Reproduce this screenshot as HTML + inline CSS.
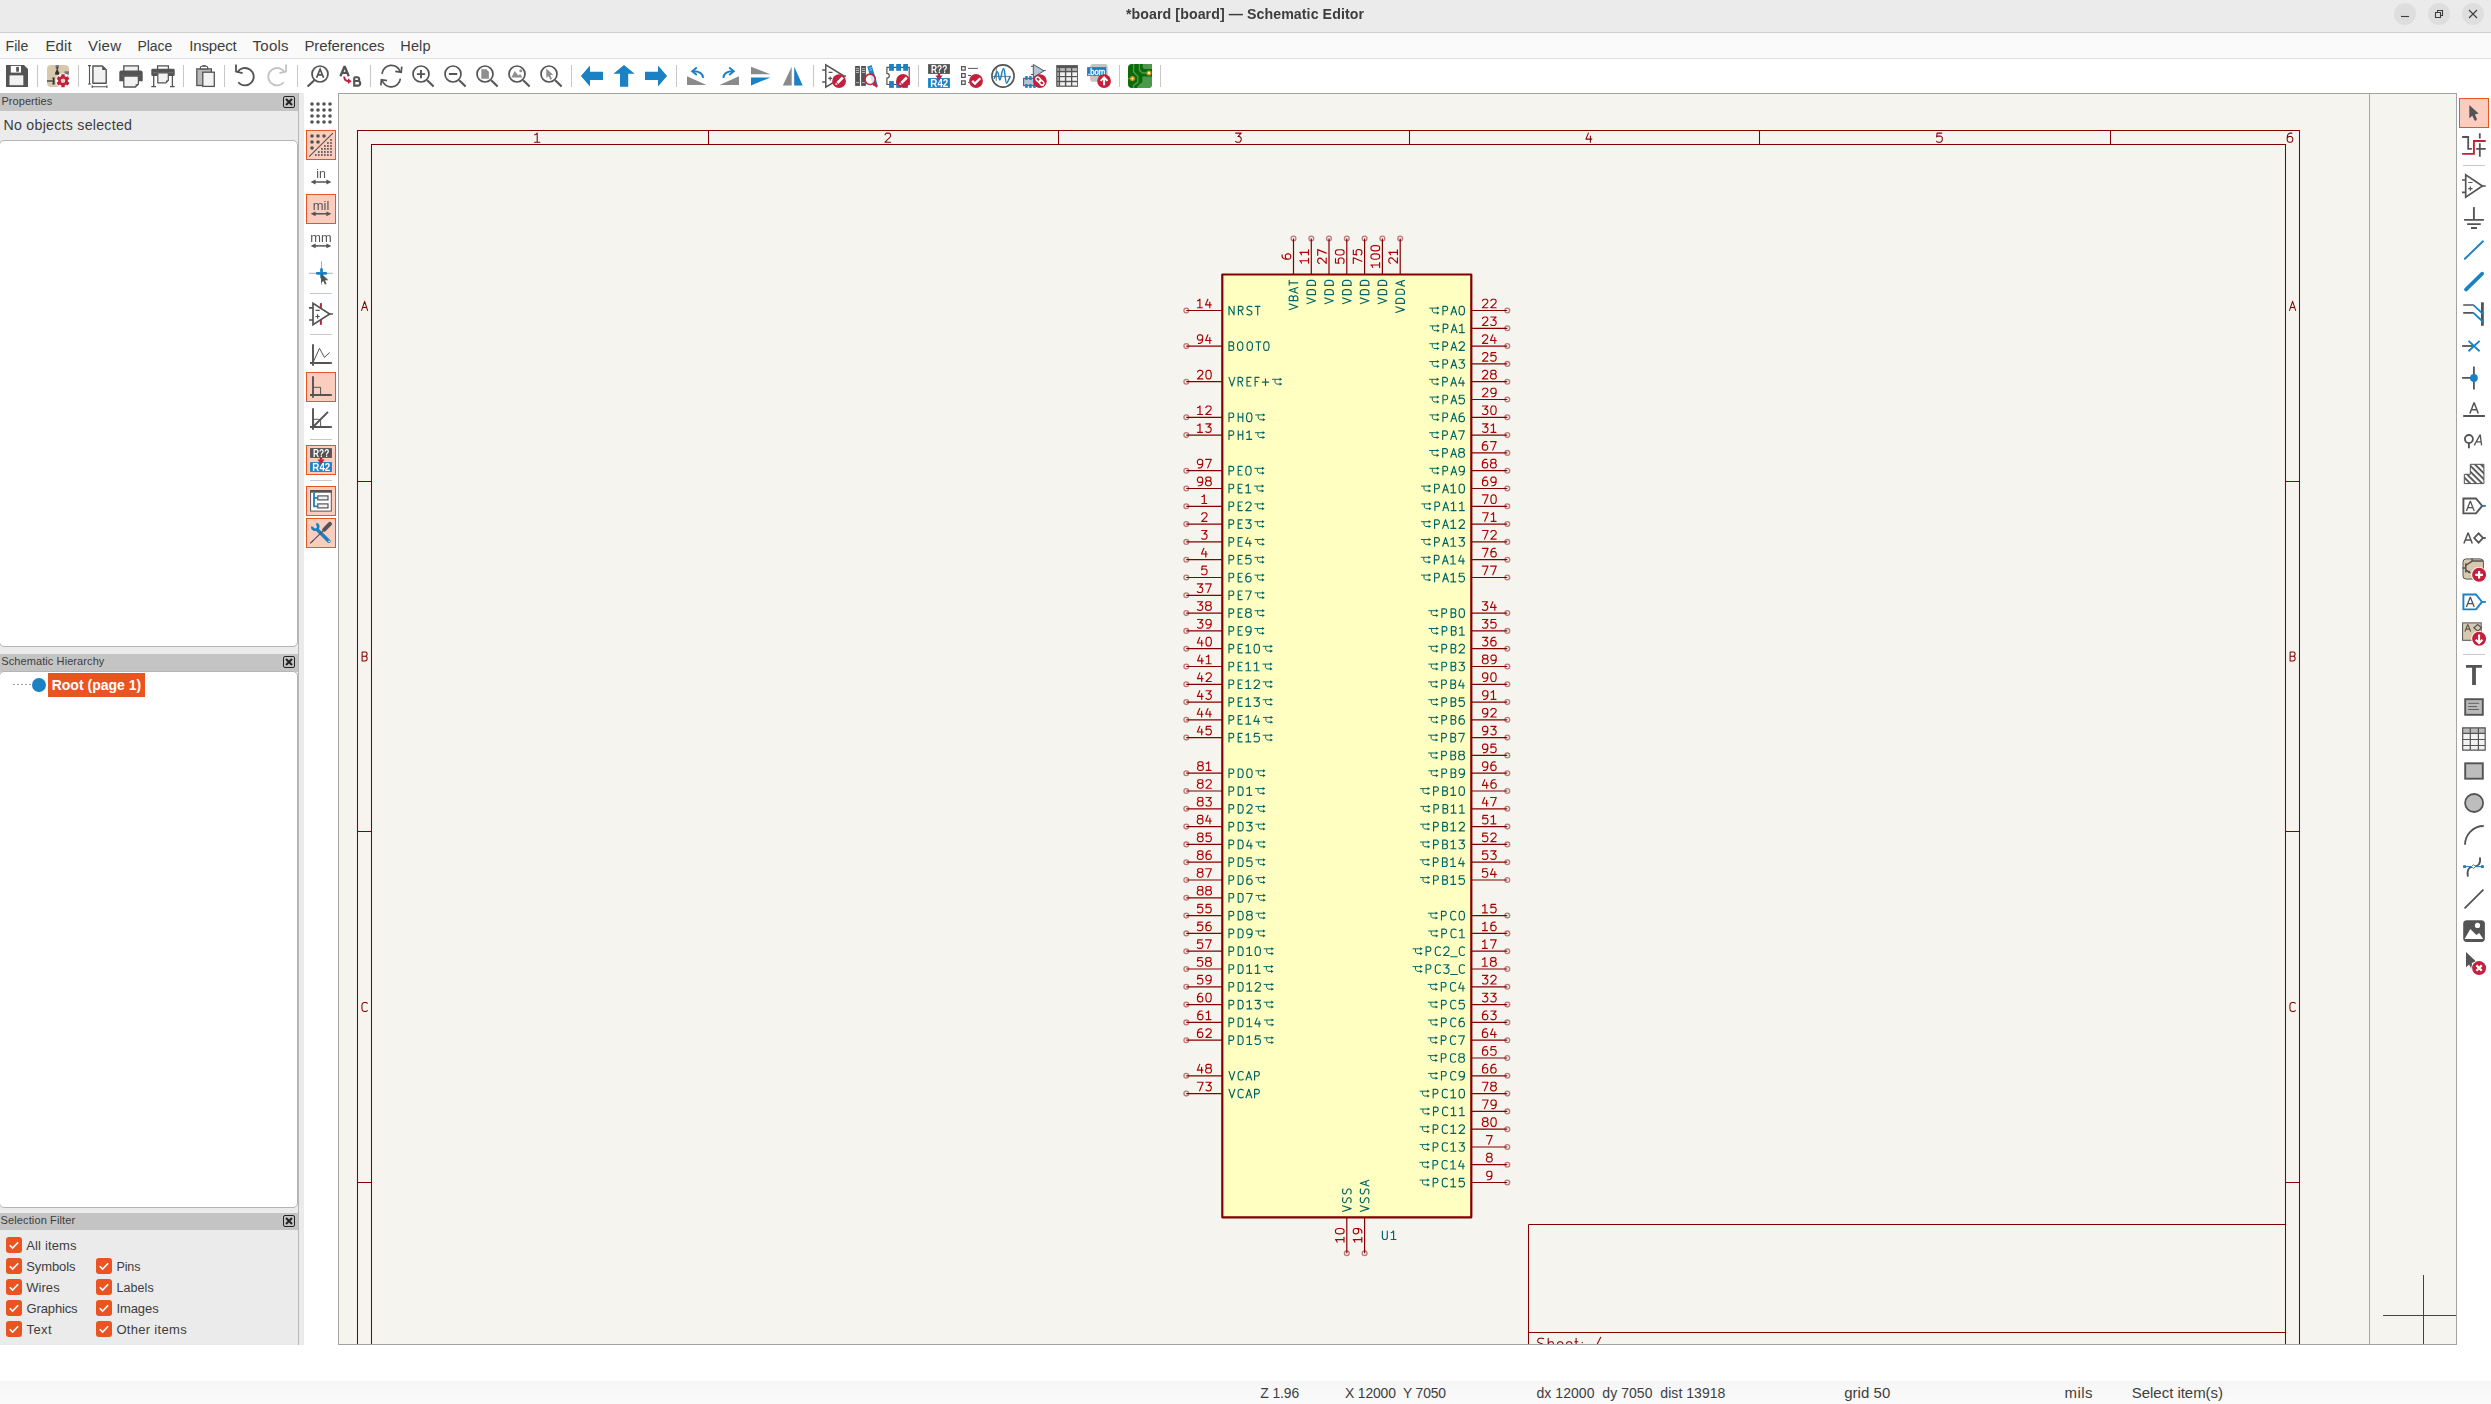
<!DOCTYPE html>
<html><head><meta charset="utf-8"><title>board - Schematic Editor</title>
<style>
html,body{margin:0;padding:0}
body{width:2491px;height:1404px;position:relative;overflow:hidden;background:#fff;font-family:"Liberation Sans", sans-serif;color:#3d3d3d;font-size:15px}
div,span,svg{position:absolute;box-sizing:border-box}
.t{white-space:pre;line-height:1}
.ic{overflow:visible}.wc{will-change:transform}
.sv{width:1px;background:#c8c8c8}
.sh{height:1px;background:#c8c8c8}
.hl{width:30px;height:30px;background:#fbcdbf;border:1.2px solid #e8561f}
.hdr{left:0;width:298px;height:18px;background:#c4c4c4}
.hdr .t{left:1px;top:3px;font-size:12.5px;color:#3d3d3d}
.wb{left:-1px;width:299px;background:#fff;border:1px solid #b4b4b4;border-radius:5px}
.cb{width:16px;height:16px;border-radius:3px;background:#e95420}
.cl{font-size:13.5px}
</style></head><body>

<div style="left:0;top:0;width:2491px;height:33px;background:#ebebeb;border-bottom:1px solid #cfcfcf"></div>
<div class="t" style="left:1125.50px;top:7px;font-size:14.2px;letter-spacing:0.070px;font-weight:bold;will-change:transform;">*board [board] — Schematic Editor</div>
<div style="left:2394px;top:3px;width:22px;height:22px;border-radius:11px;background:#dedede"></div>
<div style="left:2428px;top:3px;width:22px;height:22px;border-radius:11px;background:#dedede"></div>
<div style="left:2462px;top:3px;width:22px;height:22px;border-radius:11px;background:#dedede"></div>
<svg style="left:2394px;top:3px" width="90" height="22" viewBox="0 0 90 22" fill="none" stroke="#3d3d3d" stroke-width="1.1"><path d="M7,13.5h8"/><path d="M41.5,9.5h5v5h-5z M43.5,9.5v-2h5v5h-2"/><path d="M75,7l8,8M83,7l-8,8"/></svg>
<div style="left:0;top:33px;width:2491px;height:26px;background:#fafafa;border-bottom:1px solid #dcdcdc"></div>
<div class="t" style="left:5.60px;top:39px;font-size:14.2px;letter-spacing:-0.025px;">File</div>
<div class="t" style="left:45.50px;top:38px;font-size:15px;letter-spacing:0.075px;">Edit</div>
<div class="t" style="left:87.90px;top:38px;font-size:15px;letter-spacing:0.283px;">View</div>
<div class="t" style="left:137.40px;top:39px;font-size:14px;letter-spacing:-0.025px;">Place</div>
<div class="t" style="left:189.20px;top:38px;font-size:15px;letter-spacing:-0.129px;">Inspect</div>
<div class="t" style="left:252.60px;top:38px;font-size:15px;letter-spacing:0.225px;">Tools</div>
<div class="t" style="left:304.40px;top:38px;font-size:15px;letter-spacing:-0.087px;">Preferences</div>
<div class="t" style="left:400.30px;top:39px;font-size:14.5px;letter-spacing:0.142px;">Help</div>
<div style="left:0;top:59px;width:2491px;height:34px;background:#fff"></div>
<svg class="ic" style="left:5.0px;top:64.0px" width="24" height="24" viewBox="0 0 24 24"><path d="M1,1H19L23,5V23H1Z" fill="#545454"/><rect x="5.8" y="1.9" width="10.2" height="6.7" fill="#fff"/><rect x="11.2" y="2.9" width="2.7" height="4.8" fill="#545454"/><rect x="4.9" y="11.8" width="13.1" height="9.1" fill="#f2f2f2" stroke="#fff" stroke-width="0.6"/></svg>
<svg class="ic" style="left:46.0px;top:64.0px" width="24" height="24" viewBox="0 0 24 24"><rect x="1" y="1" width="22" height="22" rx="4" fill="#d8c9ae"/><rect x="9.6" y="1" width="3.2" height="3.5" fill="#777"/><path d="M11.2,3V9" stroke="#333" stroke-width="1.2"/><path d="M11.2,5.2L13.2,8.4V10.8H9.2V8.4Z" fill="#333"/><rect x="18.5" y="7.3" width="4.5" height="3" fill="#777"/><path d="M1,17H8" stroke="#333" stroke-width="1.3"/><path d="M6.2,13.6H8.6V20.4H6.2L7.2,17Z" fill="#333"/><g transform="translate(17,16.8)"><circle r="7.5" fill="#fff" fill-opacity="0.85"/><circle r="2.4" fill="#e6d9c3"/><g fill="#c4203c"><rect x="-1.7" y="-6.5" width="3.4" height="4" rx="0.4" transform="rotate(0)"/><rect x="-1.7" y="-6.5" width="3.4" height="4" rx="0.4" transform="rotate(60)"/><rect x="-1.7" y="-6.5" width="3.4" height="4" rx="0.4" transform="rotate(120)"/><rect x="-1.7" y="-6.5" width="3.4" height="4" rx="0.4" transform="rotate(180)"/><rect x="-1.7" y="-6.5" width="3.4" height="4" rx="0.4" transform="rotate(240)"/><rect x="-1.7" y="-6.5" width="3.4" height="4" rx="0.4" transform="rotate(300)"/></g><circle r="3.6" fill="none" stroke="#c4203c" stroke-width="2.6"/></g></svg>
<svg class="ic" style="left:87.0px;top:64.0px" width="24" height="24" viewBox="0 0 24 24"><path d="M2.5,1.6V20M1,1.6H4M1,20H4M5.2,22.7H19.9M5.2,21.3V24M19.9,21.3V24" stroke="#545454" stroke-width="1.1" fill="none"/><path d="M5.9,2H15.4L19.2,5.8V19.2H5.9Z" fill="#f2f2f2" stroke="#545454" stroke-width="1.4" stroke-linejoin="round"/><path d="M15.2,2.2V6H19Z" fill="#545454"/></svg>
<svg class="ic" style="left:119.0px;top:64.0px" width="24" height="24" viewBox="0 0 24 24"><rect x="4.8" y="1.9" width="14.6" height="6" fill="#f2f2f2" stroke="#545454" stroke-width="1.3"/><path d="M2.3,6.5H21.7A2,2 0 0 1 23.7,8.5V17.3H0.3V8.5A2,2 0 0 1 2.3,6.5Z" fill="#545454"/><path d="M3,11.7H21" stroke="#8a8a8a" stroke-width="0.6"/><path d="M4.8,12H19.4V20L16.4,23H4.8Z" fill="#f2f2f2" stroke="#545454" stroke-width="1.3" stroke-linejoin="round"/><path d="M16.6,22.8V20.2H19.2Z" fill="#545454"/></svg>
<svg class="ic" style="left:151.0px;top:64.0px" width="24" height="24" viewBox="0 0 24 24"><rect x="6.6" y="1.9" width="10.8" height="4" fill="#fff" stroke="#545454" stroke-width="1.3"/><rect x="0.3" y="4.7" width="23.4" height="7.4" rx="1.3" fill="#545454"/><path d="M2,8.7H22" stroke="#8a8a8a" stroke-width="0.6"/><path d="M2.7,12V22.7M21.4,12V22.7M0.3,22.6H5M19,22.6H23.7" stroke="#545454" stroke-width="1.3" fill="none"/><path d="M6.8,9H17.3V16.4L14.8,18.9H6.8Z" fill="#f2f2f2" stroke="#545454" stroke-width="1.2" stroke-linejoin="round"/><path d="M15,18.7V16.6H17.1Z" fill="#545454"/></svg>
<svg class="ic" style="left:192.0px;top:64.0px" width="24" height="24" viewBox="0 0 24 24"><rect x="4.8" y="4.9" width="14.6" height="16.6" fill="#b9b9b9" stroke="#545454" stroke-width="1.3"/><path d="M8.4,4.9V3.6A1.3,1.3 0 0 1 9.7,2.3H14.4A1.3,1.3 0 0 1 15.7,3.6V4.9Z" fill="#fff" stroke="#545454" stroke-width="1.1"/><path d="M10.4,1.7H13.8" stroke="#545454" stroke-width="1.2"/><rect x="10.8" y="8.2" width="11.5" height="14.2" fill="#f2f2f2" stroke="#545454" stroke-width="1.3"/></svg>
<svg class="ic" style="left:233.0px;top:64.0px" width="24" height="24" viewBox="0 0 24 24"><path d="M4.4,8.6A8.7,8.7 0 1 1 5.3,18.2" fill="none" stroke="#545454" stroke-width="1.8"/><path d="M3,0.5V7.6L9.6,9.2" fill="none" stroke="#545454" stroke-width="1.8"/></svg>
<svg class="ic" style="left:265.0px;top:64.0px" width="24" height="24" viewBox="0 0 24 24"><path d="M19.6,8.6A8.7,8.7 0 1 0 18.7,18.2" fill="none" stroke="#c3c3c3" stroke-width="1.8"/><path d="M21,0.5V7.6L14.4,9.2" fill="none" stroke="#c3c3c3" stroke-width="1.8"/></svg>
<svg class="ic" style="left:306.0px;top:64.0px" width="24" height="24" viewBox="0 0 24 24"><circle cx="14" cy="10" r="8" fill="none" stroke="#545454" stroke-width="1.7"/><path d="M8.4,16.3L1.6,22.5" stroke="#545454" stroke-width="2.1" fill="none"/><path d="M10.6,13.8L14.1,5.2L17.6,13.8M11.9,10.9H16.3" fill="none" stroke="#545454" stroke-width="1.7"/></svg>
<svg class="ic" style="left:338.0px;top:64.0px" width="24" height="24" viewBox="0 0 24 24"><path d="M2.4,12.3L6.6,2.2L10.8,12.3M3.9,8.9H9.3" fill="none" stroke="#545454" stroke-width="2.3" stroke-linejoin="bevel"/><path d="M16.2,13.2V21.6H19.9A2.3,2.3 0 0 0 19.9,17H16.2M19.3,17A1.9,1.9 0 0 0 19.3,13.2H16.2" fill="none" stroke="#545454" stroke-width="2.1"/><path d="M6.2,12.6C6.2,16 7.8,17.2 11,17.2" fill="none" stroke="#c4203c" stroke-width="1.9"/><path d="M13.6,17.2L10,14.3V20.1Z" fill="#c4203c"/></svg>
<svg class="ic" style="left:379.0px;top:64.0px" width="24" height="24" viewBox="0 0 24 24"><path d="M3,9.8A9.4,9.4 0 0 1 21.3,7.8" fill="none" stroke="#545454" stroke-width="1.7"/><path d="M22.8,2.7L22.2,8.2L16.3,7.3" fill="none" stroke="#545454" stroke-width="1.7"/><path d="M21.4,14.6A9.4,9.4 0 0 1 3,15.9" fill="none" stroke="#545454" stroke-width="1.7"/><path d="M1.8,21.4L2.4,15.7L8,16.6" fill="none" stroke="#545454" stroke-width="1.7"/></svg>
<svg class="ic" style="left:411.0px;top:64.0px" width="24" height="24" viewBox="0 0 24 24"><circle cx="10" cy="10" r="8" fill="none" stroke="#545454" stroke-width="1.7"/><path d="M16.2,16.3L22.6,22.5" stroke="#545454" stroke-width="2.1" fill="none"/><path d="M5.9,10.1H14.1M10,6V14.2" stroke="#545454" stroke-width="1.9" fill="none"/></svg>
<svg class="ic" style="left:443.0px;top:64.0px" width="24" height="24" viewBox="0 0 24 24"><circle cx="10" cy="10" r="8" fill="none" stroke="#545454" stroke-width="1.7"/><path d="M16.2,16.3L22.6,22.5" stroke="#545454" stroke-width="2.1" fill="none"/><path d="M5.9,10H14.2" stroke="#545454" stroke-width="2" fill="none"/></svg>
<svg class="ic" style="left:475.0px;top:64.0px" width="24" height="24" viewBox="0 0 24 24"><circle cx="10" cy="10" r="8" fill="none" stroke="#545454" stroke-width="1.7"/><path d="M16.2,16.3L22.6,22.5" stroke="#545454" stroke-width="2.1" fill="none"/><path d="M6.3,5.2H11.4L13.9,7.7V14.8H6.3Z" fill="#8f8f8f"/></svg>
<svg class="ic" style="left:507.0px;top:64.0px" width="24" height="24" viewBox="0 0 24 24"><circle cx="10" cy="10" r="8" fill="none" stroke="#545454" stroke-width="1.7"/><path d="M16.2,16.3L22.6,22.5" stroke="#545454" stroke-width="2.1" fill="none"/><path d="M4.4,13.6L7.7,7.1L11.3,11.4L13.2,10L15.3,13.6Z" fill="#8f8f8f"/><circle cx="13.8" cy="6.8" r="1.5" fill="#8f8f8f"/></svg>
<svg class="ic" style="left:539.0px;top:64.0px" width="24" height="24" viewBox="0 0 24 24"><circle cx="10" cy="10" r="8" fill="none" stroke="#545454" stroke-width="1.7"/><path d="M16.2,16.3L22.6,22.5" stroke="#545454" stroke-width="2.1" fill="none"/><path d="M7.3,4.4L14.3,10.9L11.3,11.1L13,14.9L11.3,15.7L9.5,12L7.3,13.9Z" fill="#8f8f8f"/></svg>
<svg class="ic" style="left:580.0px;top:64.0px" width="24" height="24" viewBox="0 0 24 24"><path d="M0.9,12L10,1.6V7.8H23V16H10V22.4Z" fill="#1a81c4"/></svg>
<svg class="ic" style="left:612.0px;top:64.0px" width="24" height="24" viewBox="0 0 24 24"><path d="M12,1L22.7,9.8H16.2V22.8H8V9.8H1.4Z" fill="#1a81c4"/></svg>
<svg class="ic" style="left:644.0px;top:64.0px" width="24" height="24" viewBox="0 0 24 24"><path d="M23.1,12L14,1.6V7.8H1V16H14V22.4Z" fill="#1a81c4"/></svg>
<svg class="ic" style="left:685.0px;top:64.0px" width="24" height="24" viewBox="0 0 24 24"><path d="M2,12.2V21H21.5Z" fill="#8a8a8a"/><path d="M18,14C18,9.5 15,7.2 8,7.2" fill="none" stroke="#1a81c4" stroke-width="1.9"/><path d="M11.8,3.4L7.2,7.2L11.8,11" fill="none" stroke="#1a81c4" stroke-width="1.9"/></svg>
<svg class="ic" style="left:717.0px;top:64.0px" width="24" height="24" viewBox="0 0 24 24"><path d="M22,12.2V21H2.5Z" fill="#8a8a8a"/><path d="M6.5,14C6.5,9.5 9.5,7.2 16,7.2" fill="none" stroke="#1a81c4" stroke-width="1.9"/><path d="M12.2,3.4L16.8,7.2L12.2,11" fill="none" stroke="#1a81c4" stroke-width="1.9"/></svg>
<svg class="ic" style="left:749.0px;top:64.0px" width="24" height="24" viewBox="0 0 24 24"><path d="M2,2.8L21.5,10.3H2Z" fill="#8a8a8a"/><path d="M2,13.4H21.5L2,21.5Z" fill="#1a81c4"/></svg>
<svg class="ic" style="left:781.0px;top:64.0px" width="24" height="24" viewBox="0 0 24 24"><path d="M1.8,21.5H10.7V2.8Z" fill="#8a8a8a"/><path d="M13.2,2.8V21.5H21.7Z" fill="#1a81c4"/></svg>
<svg class="ic" style="left:822.0px;top:64.0px" width="24" height="24" viewBox="0 0 24 24"><path d="M3.8,0.9V23.1L22,12Z M0.2,5.9H3.8M0.2,18H3.8M21,12H24" fill="none" stroke="#545454" stroke-width="1.5"/><path d="M6.6,8.3H10.5M6.2,14.4H10.2M8.2,12.4V16.4" stroke="#545454" stroke-width="1.2" fill="none"/><circle cx="17.1" cy="17.1" r="6.9" fill="#c4203c"/><path d="M15.3,19 L20.8,13.5" stroke="#fff" stroke-width="2.5" fill="none"/><path d="M13.3,21 L13.9,18.7 L15.6,20.4 Z" fill="#fff"/></svg>
<svg class="ic" style="left:854.0px;top:64.0px" width="24" height="24" viewBox="0 0 24 24"><rect x="1.1" y="2" width="4.8" height="19.9" fill="#545454"/><rect x="7.1" y="2" width="4.8" height="19.9" fill="#545454"/><path d="M2,4.6H5M2,6.5H5M2,8.5H5M2,18.6H5M8,4.6H11M8,6.5H11M8,8.5H11M8,18.6H11" stroke="#cfcfcf" stroke-width="0.8"/><path d="M13.3,2.7L17.6,1.1L23.7,21.2L19.2,22Z" fill="#1a81c4"/><path d="M15.2,4.3L17.6,3.5M15.8,6.3L18.2,5.5" stroke="#cfe0ee" stroke-width="0.8"/><circle cx="16.1" cy="15.3" r="5.2" fill="#fff" fill-opacity="0.8" stroke="#c4203c" stroke-width="1.7"/><path d="M20,19.6L23.2,22.9" stroke="#c4203c" stroke-width="2.3"/></svg>
<svg class="ic" style="left:886.0px;top:64.0px" width="24" height="24" viewBox="0 0 24 24"><path d="M0.9,3.4H23.2V20.5H0.9V14.2A2.4,2.4 0 0 0 0.9,9.4Z" fill="#fff" stroke="#545454" stroke-width="1.2"/><rect x="3.1" y="0" width="4.8" height="6.8" fill="#1a81c4"/><rect x="10.2" y="0" width="4.8" height="6.8" fill="#1a81c4"/><rect x="17.2" y="0" width="4.8" height="6.8" fill="#1a81c4"/><rect x="3.1" y="17.1" width="4.8" height="6.8" fill="#1a81c4"/><rect x="10.2" y="17.1" width="4.8" height="6.8" fill="#1a81c4"/><rect x="17.2" y="17.1" width="4.8" height="6.8" fill="#1a81c4"/><circle cx="17" cy="16.9" r="6.9" fill="#c4203c"/><path d="M15.3,19 L20.8,13.5" stroke="#fff" stroke-width="2.5" fill="none"/><path d="M13.3,21 L13.9,18.7 L15.6,20.4 Z" fill="#fff"/></svg>
<svg class="ic wc" style="left:927.0px;top:64.0px" width="24" height="24" viewBox="0 0 24 24"><rect x="1.1" y="0.1" width="21.8" height="9.8" fill="#545454"/><rect x="1.1" y="14.1" width="21.8" height="9.8" fill="#1a81c4"/><path d="M10.8,9.5H13.2V11.4H15.6L12,16.3L8.4,11.4H10.8Z" fill="#c4203c"/><text x="12.2" y="9" font-family="Liberation Sans,sans-serif" font-weight="bold" font-size="11" fill="#fff" text-anchor="middle" textLength="16.2" lengthAdjust="spacingAndGlyphs">R??</text><text x="12.3" y="23" font-family="Liberation Sans,sans-serif" font-weight="bold" font-size="11" fill="#fff" text-anchor="middle" textLength="18" lengthAdjust="spacingAndGlyphs">R42</text></svg>
<svg class="ic" style="left:959.0px;top:64.0px" width="24" height="24" viewBox="0 0 24 24"><path d="M2.6,2.6H6.2V6.2H2.6ZM2.6,9.7H6.2V13.3H2.6ZM2.6,16.8H6.2V20.4H2.6Z" fill="none" stroke="#545454" stroke-width="1.2"/><path d="M9,4.4H18.9M9,11.5H12M9,18.5H10.5" stroke="#545454" stroke-width="1" fill="none"/><circle cx="17" cy="17" r="6.9" fill="#c4203c"/><path d="M13.2,16.9L15.9,19.6L21.3,14.2" fill="none" stroke="#fff" stroke-width="2.2"/></svg>
<svg class="ic" style="left:991.0px;top:64.0px" width="24" height="24" viewBox="0 0 24 24"><circle cx="12" cy="12" r="11.1" fill="none" stroke="#545454" stroke-width="1.6"/><path d="M5.3,2.8V17M1.7,12.4H19.8" stroke="#545454" stroke-width="0.8" fill="none"/><path d="M3.2,14.7C4.4,12 5.2,7.7 6.3,7.7C7.6,7.7 7.8,15.9 8.9,15.9C10.2,15.9 11,4.4 12.5,4.4C14,4.4 14.2,19.2 15.6,19.2C16.9,19.2 17.8,14 19.4,12.4" fill="none" stroke="#1a81c4" stroke-width="1.5"/></svg>
<svg class="ic" style="left:1023.0px;top:64.0px" width="24" height="24" viewBox="0 0 24 24"><path d="M10.3,0.5V13.5L21,6.8Z" fill="#b3c4d6" stroke="#545454" stroke-width="1"/><path d="M8,2.3H10.3M8,10.5H10.3M20,6.6H22.8" stroke="#545454" stroke-width="1" fill="none"/><rect x="0.6" y="14.3" width="11.6" height="7.4" fill="#b3c4d6" stroke="#545454" stroke-width="1"/><rect x="2.2" y="12.1" width="2.5" height="3.8" fill="#1a81c4"/><rect x="6.2" y="12.1" width="2.5" height="3.8" fill="#1a81c4"/><rect x="10.2" y="12.1" width="2.5" height="3.8" fill="#1a81c4"/><rect x="2.2" y="20.1" width="2.5" height="3.8" fill="#1a81c4"/><rect x="6.2" y="20.1" width="2.5" height="3.8" fill="#1a81c4"/><rect x="10.2" y="20.1" width="2.5" height="3.8" fill="#1a81c4"/><circle cx="16.9" cy="17.1" r="6.9" fill="#c4203c"/><g transform="translate(16.9,17.1) rotate(45)" fill="none" stroke="#fff" stroke-width="1.5"><rect x="-5" y="-1.8" width="5.6" height="3.6" rx="1.8"/><rect x="-0.6" y="-1.8" width="5.6" height="3.6" rx="1.8"/></g></svg>
<svg class="ic" style="left:1055.0px;top:64.0px" width="24" height="24" viewBox="0 0 24 24"><rect x="1.2" y="1.1" width="21.7" height="21.7" fill="#545454"/><rect x="5.1" y="4.1" width="4.8" height="2.8" fill="#b9b9b9"/><rect x="11.3" y="4.1" width="4.7" height="2.8" fill="#b9b9b9"/><rect x="17.3" y="4.1" width="4.7" height="2.8" fill="#b9b9b9"/><rect x="5.1" y="8.3" width="4.8" height="3.7" fill="#f2f2f2"/><rect x="11.3" y="8.3" width="4.7" height="3.7" fill="#f2f2f2"/><rect x="17.3" y="8.3" width="4.7" height="3.7" fill="#f2f2f2"/><rect x="5.1" y="13.2" width="4.8" height="3.6" fill="#f2f2f2"/><rect x="11.3" y="13.2" width="4.7" height="3.6" fill="#f2f2f2"/><rect x="17.3" y="13.2" width="4.7" height="3.6" fill="#f2f2f2"/><rect x="5.1" y="18.2" width="4.8" height="3.4" fill="#f2f2f2"/><rect x="11.3" y="18.2" width="4.7" height="3.4" fill="#f2f2f2"/><rect x="17.3" y="18.2" width="4.7" height="3.4" fill="#f2f2f2"/><rect x="2.4" y="4.1" width="1.4" height="2.8" fill="#b9b9b9"/><rect x="2.4" y="8.3" width="1.4" height="3.7" fill="#b9b9b9"/><rect x="2.4" y="13.2" width="1.4" height="3.6" fill="#b9b9b9"/><rect x="2.4" y="18.2" width="1.4" height="3.4" fill="#b9b9b9"/></svg>
<svg class="ic wc" style="left:1087.0px;top:64.0px" width="24" height="24" viewBox="0 0 24 24"><rect x="3.2" y="0.1" width="17.5" height="17.6" rx="2.5" fill="#c4c4c4"/><rect x="0.1" y="3.1" width="19.1" height="8.9" fill="#1a81c4"/><text x="9.7" y="10.6" font-family="Liberation Sans,sans-serif" font-size="8.4" fill="#fff" text-anchor="middle" textLength="17.2" lengthAdjust="spacingAndGlyphs" stroke="#fff" stroke-width="0.3">.bom</text><circle cx="17.1" cy="17.1" r="6.9" fill="#c4203c"/><path d="M17.1,21.3V13.8M13.7,16.9L17.1,13.4L20.5,16.9" fill="none" stroke="#fff" stroke-width="2"/></svg>
<svg class="ic" style="left:1128.0px;top:64.0px" width="24" height="24" viewBox="0 0 24 24"><rect x="0" y="0" width="24" height="24" rx="4" fill="#0a6b0a"/><path d="M14.7,0H24V5.1H17.9A3.2,3.2 0 0 1 14.7,1.9Z" fill="#4b9a4b"/><path d="M24,12.4H14.3V18L9.2,22.6V24H20A4,4 0 0 0 24,20Z" fill="#4b9a4b"/><path d="M5.6,0V8.1L9.8,12.3V18.4L5.6,21.3V24M11.4,0V6.3L14.7,9H21M0,14.6H4.4" fill="none" stroke="#4b9a4b" stroke-width="1.4"/><circle cx="21" cy="9" r="2.5" fill="#e8960f"/><rect x="20.1" y="8.1" width="1.8" height="1.8" fill="#fff"/><circle cx="4.4" cy="14.6" r="2.5" fill="#e8960f"/><circle cx="4.4" cy="14.6" r="0.9" fill="#fff"/></svg>
<div class="sv" style="left:37px;top:65px;height:22px"></div>
<div class="sv" style="left:78px;top:65px;height:22px"></div>
<div class="sv" style="left:183px;top:65px;height:22px"></div>
<div class="sv" style="left:224px;top:65px;height:22px"></div>
<div class="sv" style="left:297px;top:65px;height:22px"></div>
<div class="sv" style="left:370px;top:65px;height:22px"></div>
<div class="sv" style="left:571px;top:65px;height:22px"></div>
<div class="sv" style="left:676px;top:65px;height:22px"></div>
<div class="sv" style="left:813px;top:65px;height:22px"></div>
<div class="sv" style="left:918px;top:65px;height:22px"></div>
<div class="sv" style="left:1119px;top:65px;height:22px"></div>
<div class="sv" style="left:1160px;top:65px;height:22px"></div>
<div style="left:0;top:93px;width:304px;height:1252px;background:#ebebeb"></div>
<div style="left:297.7px;top:93px;width:1.3px;height:1252px;background:#b6b6b6"></div>
<div class="hdr" style="top:93px;height:17.6px"></div>
<div class="t" style="left:1.40px;top:96px;font-size:11px;letter-spacing:0.075px;">Properties</div>
<div class="t" style="left:3.50px;top:118px;font-size:14.2px;letter-spacing:0.257px;">No objects selected</div>
<div class="wb" style="top:140px;height:507px"></div>
<div class="hdr" style="top:653.6px;height:18px"></div>
<div class="t" style="left:1.30px;top:656px;font-size:11px;letter-spacing:0.089px;">Schematic Hierarchy</div>
<div class="wb" style="top:671px;height:537px"></div>
<div class="hdr" style="top:1213.2px;height:16.6px"></div>
<div class="t" style="left:0.50px;top:1215px;font-size:11px;letter-spacing:0.130px;">Selection Filter</div>
<svg style="left:283px;top:96px" width="12" height="12" viewBox="0 0 12 12"><rect x="0.5" y="0.5" width="11" height="11" rx="1.5" fill="none" stroke="#222" stroke-width="1"/><path d="M3,3l6,6M9,3l-6,6" stroke="#222" stroke-width="2"/></svg>
<svg style="left:283px;top:656px" width="12" height="12" viewBox="0 0 12 12"><rect x="0.5" y="0.5" width="11" height="11" rx="1.5" fill="none" stroke="#222" stroke-width="1"/><path d="M3,3l6,6M9,3l-6,6" stroke="#222" stroke-width="2"/></svg>
<svg style="left:283px;top:1215px" width="12" height="12" viewBox="0 0 12 12"><rect x="0.5" y="0.5" width="11" height="11" rx="1.5" fill="none" stroke="#222" stroke-width="1"/><path d="M3,3l6,6M9,3l-6,6" stroke="#222" stroke-width="2"/></svg>
<svg style="left:12px;top:683px" width="20" height="3" viewBox="0 0 20 3"><path d="M1,1.5H19" stroke="#a0a0a0" stroke-width="1" stroke-dasharray="2,2" fill="none"/></svg>
<div style="left:32px;top:678px;width:14px;height:14px;border-radius:7px;background:#1a81c4"></div>
<div style="left:48px;top:673px;width:97px;height:24px;background:#e95420"></div>
<div class="t" style="left:51.70px;top:678px;font-size:14px;letter-spacing:0.008px;font-weight:bold;color:#fff;">Root (page 1)</div>
<div class="cb" style="left:6px;top:1237px"></div>
<svg style="left:6px;top:1237px" width="16" height="16" viewBox="0 0 16 16"><path d="M3.8,8.2l2.8,2.8l5.6,-5.8" fill="none" stroke="#fff" stroke-width="1.6"/></svg>
<div class="t" style="left:26.20px;top:1239px;font-size:13px;letter-spacing:0.159px;">All items</div>
<div class="cb" style="left:6px;top:1258px"></div>
<svg style="left:6px;top:1258px" width="16" height="16" viewBox="0 0 16 16"><path d="M3.8,8.2l2.8,2.8l5.6,-5.8" fill="none" stroke="#fff" stroke-width="1.6"/></svg>
<div class="t" style="left:26.20px;top:1260px;font-size:13px;letter-spacing:-0.096px;">Symbols</div>
<div class="cb" style="left:96px;top:1258px"></div>
<svg style="left:96px;top:1258px" width="16" height="16" viewBox="0 0 16 16"><path d="M3.8,8.2l2.8,2.8l5.6,-5.8" fill="none" stroke="#fff" stroke-width="1.6"/></svg>
<div class="t" style="left:116.40px;top:1261px;font-size:12.5px;letter-spacing:-0.092px;">Pins</div>
<div class="cb" style="left:6px;top:1279px"></div>
<svg style="left:6px;top:1279px" width="16" height="16" viewBox="0 0 16 16"><path d="M3.8,8.2l2.8,2.8l5.6,-5.8" fill="none" stroke="#fff" stroke-width="1.6"/></svg>
<div class="t" style="left:26.20px;top:1281px;font-size:13px;letter-spacing:0.062px;">Wires</div>
<div class="cb" style="left:96px;top:1279px"></div>
<svg style="left:96px;top:1279px" width="16" height="16" viewBox="0 0 16 16"><path d="M3.8,8.2l2.8,2.8l5.6,-5.8" fill="none" stroke="#fff" stroke-width="1.6"/></svg>
<div class="t" style="left:116.40px;top:1282px;font-size:12.5px;letter-spacing:0.085px;">Labels</div>
<div class="cb" style="left:6px;top:1300px"></div>
<svg style="left:6px;top:1300px" width="16" height="16" viewBox="0 0 16 16"><path d="M3.8,8.2l2.8,2.8l5.6,-5.8" fill="none" stroke="#fff" stroke-width="1.6"/></svg>
<div class="t" style="left:26.50px;top:1302px;font-size:13px;letter-spacing:-0.129px;">Graphics</div>
<div class="cb" style="left:96px;top:1300px"></div>
<svg style="left:96px;top:1300px" width="16" height="16" viewBox="0 0 16 16"><path d="M3.8,8.2l2.8,2.8l5.6,-5.8" fill="none" stroke="#fff" stroke-width="1.6"/></svg>
<div class="t" style="left:116.40px;top:1302px;font-size:13px;letter-spacing:-0.065px;">Images</div>
<div class="cb" style="left:6px;top:1321px"></div>
<svg style="left:6px;top:1321px" width="16" height="16" viewBox="0 0 16 16"><path d="M3.8,8.2l2.8,2.8l5.6,-5.8" fill="none" stroke="#fff" stroke-width="1.6"/></svg>
<div class="t" style="left:26.50px;top:1323px;font-size:13px;letter-spacing:0.442px;">Text</div>
<div class="cb" style="left:96px;top:1321px"></div>
<svg style="left:96px;top:1321px" width="16" height="16" viewBox="0 0 16 16"><path d="M3.8,8.2l2.8,2.8l5.6,-5.8" fill="none" stroke="#fff" stroke-width="1.6"/></svg>
<div class="t" style="left:116.40px;top:1323px;font-size:13px;letter-spacing:0.307px;">Other items</div>
<div style="left:304px;top:93px;width:34px;height:1252px;background:#fff"></div>
<svg class="ic" style="left:309.0px;top:101.0px" width="24" height="24" viewBox="0 0 24 24"><circle cx="3" cy="3" r="1.8" fill="#545454"/><circle cx="3" cy="9" r="1.8" fill="#545454"/><circle cx="3" cy="15" r="1.8" fill="#545454"/><circle cx="3" cy="21" r="1.8" fill="#545454"/><circle cx="9" cy="3" r="1.8" fill="#545454"/><circle cx="9" cy="9" r="1.8" fill="#545454"/><circle cx="9" cy="15" r="1.8" fill="#545454"/><circle cx="9" cy="21" r="1.8" fill="#545454"/><circle cx="15" cy="3" r="1.8" fill="#545454"/><circle cx="15" cy="9" r="1.8" fill="#545454"/><circle cx="15" cy="15" r="1.8" fill="#545454"/><circle cx="15" cy="21" r="1.8" fill="#545454"/><circle cx="21" cy="3" r="1.8" fill="#545454"/><circle cx="21" cy="9" r="1.8" fill="#545454"/><circle cx="21" cy="15" r="1.8" fill="#545454"/><circle cx="21" cy="21" r="1.8" fill="#545454"/></svg>
<div class="hl" style="left:306px;top:130px"></div>
<svg class="ic" style="left:309.0px;top:133.0px" width="24" height="24" viewBox="0 0 24 24"><circle cx="3" cy="3" r="1.8" fill="#545454"/><circle cx="9" cy="3" r="1.8" fill="#545454"/><circle cx="15" cy="3" r="1.8" fill="#545454"/><circle cx="3" cy="9" r="1.8" fill="#545454"/><circle cx="9" cy="9" r="1.8" fill="#545454"/><circle cx="3" cy="15" r="1.8" fill="#545454"/><path d="M0.1,23.6L23.9,0.1" stroke="#545454" stroke-width="1.1"/><rect x="5.95" y="21.15" width="1.7" height="1.7" fill="#545454"/><rect x="8.95" y="21.15" width="1.7" height="1.7" fill="#545454"/><rect x="12.05" y="21.15" width="1.7" height="1.7" fill="#545454"/><rect x="15.05" y="21.15" width="1.7" height="1.7" fill="#545454"/><rect x="18.05" y="21.15" width="1.7" height="1.7" fill="#545454"/><rect x="21.15" y="21.15" width="1.7" height="1.7" fill="#545454"/><rect x="8.95" y="18.15" width="1.7" height="1.7" fill="#545454"/><rect x="12.05" y="18.15" width="1.7" height="1.7" fill="#545454"/><rect x="15.05" y="18.15" width="1.7" height="1.7" fill="#545454"/><rect x="18.05" y="18.15" width="1.7" height="1.7" fill="#545454"/><rect x="21.15" y="18.15" width="1.7" height="1.7" fill="#545454"/><rect x="12.05" y="15.05" width="1.7" height="1.7" fill="#545454"/><rect x="15.05" y="15.05" width="1.7" height="1.7" fill="#545454"/><rect x="18.05" y="15.05" width="1.7" height="1.7" fill="#545454"/><rect x="21.15" y="15.05" width="1.7" height="1.7" fill="#545454"/><rect x="15.05" y="12.15" width="1.7" height="1.7" fill="#545454"/><rect x="18.05" y="12.15" width="1.7" height="1.7" fill="#545454"/><rect x="21.15" y="12.15" width="1.7" height="1.7" fill="#545454"/><rect x="18.05" y="9.15" width="1.7" height="1.7" fill="#545454"/><rect x="21.15" y="9.15" width="1.7" height="1.7" fill="#545454"/><rect x="21.15" y="6.05" width="1.7" height="1.7" fill="#545454"/></svg>
<svg class="ic wc" style="left:309.0px;top:165.0px" width="24" height="24" viewBox="0 0 24 24"><text x="12" y="12.6" font-family="Liberation Sans,sans-serif" font-size="12" fill="#545454" text-anchor="middle" textLength="9.6" lengthAdjust="spacingAndGlyphs">in</text><path d="M5,17H19" stroke="#545454" stroke-width="1.5"/><path d="M1.6,17L6.6,14.6V19.4ZM22.4,17L17.4,14.6V19.4Z" fill="#545454"/></svg>
<div class="hl" style="left:306px;top:194px"></div>
<svg class="ic wc" style="left:309.0px;top:197.0px" width="24" height="24" viewBox="0 0 24 24"><text x="12" y="12.6" font-family="Liberation Sans,sans-serif" font-size="12" fill="#545454" text-anchor="middle" textLength="16.6" lengthAdjust="spacingAndGlyphs">mil</text><path d="M5,16.8H19" stroke="#545454" stroke-width="1.5"/><path d="M1.6,16.8L6.6,14.4V19.2ZM22.4,16.8L17.4,14.4V19.2Z" fill="#545454"/></svg>
<svg class="ic wc" style="left:309.0px;top:229.0px" width="24" height="24" viewBox="0 0 24 24"><text x="12" y="12.6" font-family="Liberation Sans,sans-serif" font-size="12" fill="#545454" text-anchor="middle" textLength="21.4" lengthAdjust="spacingAndGlyphs">mm</text><path d="M5,16.9H19" stroke="#545454" stroke-width="1.5"/><path d="M1.6,16.9L6.6,14.499999999999998V19.299999999999997ZM22.4,16.9L17.4,14.499999999999998V19.299999999999997Z" fill="#545454"/></svg>
<svg class="ic" style="left:309.0px;top:261.0px" width="24" height="24" viewBox="0 0 24 24"><path d="M12.5,0.2V23.8M0,12.3H23.9" stroke="#9a9a9a" stroke-width="0.8"/><path d="M8.2,12.3H16.8M12.5,8.3V16.3" stroke="#1a81c4" stroke-width="2.7" stroke-linecap="round"/><path d="M12.1,12.3V21.9L14.3,19.9L15.9,23.6L17.6,22.9L16,19.3H19.4Z" fill="#545454"/></svg>
<svg class="ic" style="left:309.0px;top:302.0px" width="24" height="24" viewBox="0 0 24 24"><path d="M11.9,1.1V22.8" stroke="#c4203c" stroke-width="2"/><path d="M4,1.2V22.8L20.7,12Z" fill="#fff" stroke="#545454" stroke-width="1.7"/><path d="M0,5.9H4M0,18H4M20.5,12H23.9" stroke="#545454" stroke-width="1.7"/><path d="M6.5,8.4H10.7M6.4,14.5H10.8M8.6,12.3V16.7" stroke="#545454" stroke-width="1.2"/></svg>
<svg class="ic" style="left:309.0px;top:343.0px" width="24" height="24" viewBox="0 0 24 24"><path d="M4,1.2V22.8M1,20H22.8" stroke="#545454" stroke-width="1.9" fill="none"/><path d="M4,19.6L10.5,5.3L15.4,14.4L20.7,9.5" stroke="#545454" stroke-width="1" fill="none"/></svg>
<div class="hl" style="left:306px;top:372px"></div>
<svg class="ic" style="left:309.0px;top:375.0px" width="24" height="24" viewBox="0 0 24 24"><path d="M4,1.2V22.8M1,20H22.8" stroke="#545454" stroke-width="1.9" fill="none"/><path d="M4,12.3H11.6V20" stroke="#545454" stroke-width="1" fill="none"/></svg>
<svg class="ic" style="left:309.0px;top:407.0px" width="24" height="24" viewBox="0 0 24 24"><path d="M4,1.2V22.8M1,20H22.8" stroke="#545454" stroke-width="1.9" fill="none"/><path d="M4,20L19,4.8" stroke="#545454" stroke-width="1.9" fill="none"/><path d="M4,12.3H9.6A2,2 0 0 1 11.6,14.3V20" stroke="#545454" stroke-width="1" fill="none"/></svg>
<div class="hl" style="left:306px;top:445px"></div>
<svg class="ic wc" style="left:309.0px;top:448.0px" width="24" height="24" viewBox="0 0 24 24"><rect x="1.1" y="0.1" width="21.8" height="9.8" fill="#545454"/><rect x="1.1" y="14.1" width="21.8" height="9.8" fill="#1a81c4"/><path d="M10.8,9.5H13.2V11.4H15.6L12,16.3L8.4,11.4H10.8Z" fill="#c4203c"/><text x="12.2" y="9" font-family="Liberation Sans,sans-serif" font-weight="bold" font-size="11" fill="#fff" text-anchor="middle" textLength="16.2" lengthAdjust="spacingAndGlyphs">R??</text><text x="12.3" y="23" font-family="Liberation Sans,sans-serif" font-weight="bold" font-size="11" fill="#fff" text-anchor="middle" textLength="18" lengthAdjust="spacingAndGlyphs">R42</text></svg>
<div class="hl" style="left:306px;top:486px"></div>
<svg class="ic" style="left:309.0px;top:489.0px" width="24" height="24" viewBox="0 0 24 24"><rect x="1.6" y="1.6" width="20.7" height="20.5" fill="#fff" stroke="#545454" stroke-width="1"/><rect x="1.1" y="1.1" width="21.7" height="2.6" fill="#545454"/><path d="M5,3.7V17.4H8.5M5,8.8H8.5" fill="none" stroke="#1a81c4" stroke-width="1.8"/><rect x="8.8" y="6.9" width="10.2" height="4" fill="#f2f2f2" stroke="#545454" stroke-width="1.2"/><rect x="8.8" y="14.9" width="10.2" height="4" fill="#f2f2f2" stroke="#545454" stroke-width="1.2"/></svg>
<div class="hl" style="left:306px;top:518px"></div>
<svg class="ic" style="left:309.0px;top:521.0px" width="24" height="24" viewBox="0 0 24 24"><path d="M8.3,8.8L19.9,20.2" stroke="#1a81c4" stroke-width="3.6" stroke-linecap="round"/><path d="M3.2,5.6A3,3 0 1 0 7.3,2.9" fill="none" stroke="#1a81c4" stroke-width="2.6"/><circle cx="20.2" cy="20.3" r="0.9" fill="#fbe3da"/><path d="M1.2,22.4L15,9" stroke="#545454" stroke-width="1.1"/><path d="M1,22.6L3.6,19.2L4.6,20.2Z" fill="#545454"/><path d="M15.3,8.6L20.9,2.9" stroke="#545454" stroke-width="4.2" stroke-linecap="round"/></svg>
<div class="sh" style="left:310px;top:293px;width:22px"></div>
<div class="sh" style="left:310px;top:334px;width:22px"></div>
<div class="sh" style="left:310px;top:439px;width:22px"></div>
<div class="sh" style="left:310px;top:480px;width:22px"></div>
<div style="left:338px;top:93px;width:2119px;height:1252px;background:#f5f4ef;border:1px solid #a3a3a3;overflow:hidden">
<svg style="left:-339px;top:-94px" width="2491" height="1404" viewBox="0 0 2491 1404">
<path d="M357.5,130.5H2299.5V1462.5H357.5ZM371.5,144.5H2285.5V1448.5H371.5ZM708.5,130.5V144.5M1058.5,130.5V144.5M1409.5,130.5V144.5M1759.5,130.5V144.5M2110.5,130.5V144.5M357.5,481.5H371.5M2285.5,481.5H2299.5M357.5,831.5H371.5M2285.5,831.5H2299.5M357.5,1182.5H371.5M2285.5,1182.5H2299.5M1528.5,1224.5H2285.5M1528.5,1224.5V1448.5M1528.5,1332.5H2285.5" fill="none" stroke="#840000" stroke-width="1.05"/>
<path d="M534.6,134.8 535.9,134.4 537.2,133.1 537.2,142.2M534.6,142.2 539.8,142.2M885,134.8 885.5,133.9 886,133.5 886.9,133.1 888.8,133.1 889.7,133.5 890.2,133.9 890.6,134.8 890.6,135.7 890.2,137 885,142.2 890.6,142.2M1235.6,133.1 1241.2,133.1 1237.9,136.5 1239.3,136.5 1240.2,137 1240.7,137.4 1241.2,138.3 1241.2,140 1240.7,140.9 1240.2,141.7 1239.3,142.2 1237,142.2 1236,141.7 1235.6,141.3M1590.4,136.1 1590.4,142.2M1588.4,133.1 1585.9,139.1 1591.9,139.1M1941.8,133.1 1937.1,133.1 1936.6,137 1937.1,136.5 1938,136.1 1940.4,136.1 1941.3,136.5 1941.8,137 1942.3,137.8 1942.3,140 1941.8,140.9 1941.3,141.7 1940.4,142.2 1938,142.2 1937.1,141.7 1936.6,141.3M2291.9,133.1 2290,133.1 2289.1,133.5 2288.1,134.4 2287.6,135.2 2287.2,137 2287.2,140 2287.6,141.3 2288.1,141.7 2289.1,142.2 2290.9,142.2 2291.9,141.7 2292.3,141.3 2292.8,140 2292.8,138.7 2292.3,137.4 2291.9,137 2290.9,136.5 2289.1,136.5 2288.1,137 2287.2,138.3M361.6,310.4 364.6,301.3 367.6,310.4M362.7,307.4 366.5,307.4M2289.5,310.4 2292.6,301.3 2295.6,310.4M2290.7,307.4 2294.5,307.4M362.1,651.9 362.1,661M362.1,651.9 365.2,651.9 366.3,652.3 366.7,652.7 367.1,653.6 367.1,654.5 366.7,655.3 366.3,655.8 365.2,656.2M362.1,656.2 365.2,656.2 366.3,656.6 366.7,657.1 367.1,657.9 367.1,659.2 366.7,660.1 366.3,660.5 365.2,661 362.1,661M2290.1,651.9 2290.1,661M2290.1,651.9 2293.2,651.9 2294.3,652.3 2294.7,652.7 2295.1,653.6 2295.1,654.5 2294.7,655.3 2294.3,655.8 2293.2,656.2M2290.1,656.2 2293.2,656.2 2294.3,656.6 2294.7,657.1 2295.1,657.9 2295.1,659.2 2294.7,660.1 2294.3,660.5 2293.2,661 2290.1,661M367.3,1010.6 366.9,1011.1 365.7,1011.5 364.4,1011.5 363.2,1011.1 362.3,1010.2 361.9,1008.5 361.9,1005.4 362.3,1003.7 363.2,1002.8 364.4,1002.4 365.7,1002.4 366.9,1002.8 367.3,1003.3M2295.3,1010.6 2294.9,1011.1 2293.6,1011.5 2292.4,1011.5 2291.1,1011.1 2290.3,1010.2 2289.9,1008.5 2289.9,1005.4 2290.3,1003.7 2291.1,1002.8 2292.4,1002.4 2293.6,1002.4 2294.9,1002.8 2295.3,1003.3M1537.7,1348.2 1539.2,1348.7 1541.7,1348.7 1542.7,1348.2 1543.2,1347.7 1543.7,1346.7 1543.7,1345.7 1543.2,1344.7 1542.7,1344.2 1541.7,1343.7 1539.2,1342.7 1538.2,1342.2 1537.7,1341.2 1537.7,1340.2 1538.2,1339.2 1538.7,1338.7 1539.7,1338.2 1542.2,1338.2 1543.7,1338.7M1548.2,1338.2 1548.2,1348.7M1548.2,1343.7 1549.1,1342.2 1550.6,1341.7 1552,1341.7 1552.9,1342.2 1553.4,1343.7 1553.4,1348.7M1557.4,1344.7 1562.9,1344.7 1562.9,1343.7 1562.4,1342.7 1561.9,1342.2 1560.9,1341.7 1559.4,1341.7 1558.4,1342.2 1557.9,1342.7 1557.4,1344.2 1557.4,1346.2 1557.9,1347.7 1558.4,1348.2 1559.4,1348.7 1560.9,1348.7 1562.4,1348.2M1566.4,1344.7 1571.9,1344.7 1571.9,1343.7 1571.4,1342.7 1570.9,1342.2 1569.9,1341.7 1568.4,1341.7 1567.4,1342.2 1566.9,1342.7 1566.4,1344.2 1566.4,1346.2 1566.9,1347.7 1567.4,1348.2 1568.4,1348.7 1569.9,1348.7 1571.4,1348.2M1576.1,1338.2 1576.1,1347.2 1576.5,1348.2 1577.5,1348.7 1578.4,1348.7M1574.7,1341.7 1577.9,1341.7M1582.2,1342.2 1582.2,1342.7M1582.2,1347.7 1582.2,1348.2M1600.7,1337.2 1593.7,1351.2" fill="none" stroke="#840000" stroke-width="1.05" stroke-linecap="round" stroke-linejoin="round"/>
<path d="M2369.5,0V1404" stroke="#a8a8a8" stroke-width="1" fill="none"/>
<rect x="1222.3" y="274.5" width="249" height="942.8" fill="#ffffc2" stroke="#840000" stroke-width="2.2" stroke-linejoin="round"/>
<path d="M1186.3,310.5H1222.3M1186.3,346.1H1222.3M1186.3,381.7H1222.3M1186.3,417.3H1222.3M1186.3,435.1H1222.3M1186.3,470.7H1222.3M1186.3,488.5H1222.3M1186.3,506.3H1222.3M1186.3,524.1H1222.3M1186.3,541.9H1222.3M1186.3,559.7H1222.3M1186.3,577.5H1222.3M1186.3,595.3H1222.3M1186.3,613.1H1222.3M1186.3,630.9H1222.3M1186.3,648.7H1222.3M1186.3,666.5H1222.3M1186.3,684.3H1222.3M1186.3,702.1H1222.3M1186.3,719.8H1222.3M1186.3,737.6H1222.3M1186.3,773.2H1222.3M1186.3,791H1222.3M1186.3,808.8H1222.3M1186.3,826.6H1222.3M1186.3,844.4H1222.3M1186.3,862.2H1222.3M1186.3,880H1222.3M1186.3,897.8H1222.3M1186.3,915.6H1222.3M1186.3,933.4H1222.3M1186.3,951.2H1222.3M1186.3,969H1222.3M1186.3,986.8H1222.3M1186.3,1004.6H1222.3M1186.3,1022.4H1222.3M1186.3,1040.2H1222.3M1186.3,1075.8H1222.3M1186.3,1093.6H1222.3M1471.3,310.5H1507.3M1471.3,328.3H1507.3M1471.3,346.1H1507.3M1471.3,363.9H1507.3M1471.3,381.7H1507.3M1471.3,399.5H1507.3M1471.3,417.3H1507.3M1471.3,435.1H1507.3M1471.3,452.9H1507.3M1471.3,470.7H1507.3M1471.3,488.5H1507.3M1471.3,506.3H1507.3M1471.3,524.1H1507.3M1471.3,541.9H1507.3M1471.3,559.7H1507.3M1471.3,577.5H1507.3M1471.3,613.1H1507.3M1471.3,630.9H1507.3M1471.3,648.7H1507.3M1471.3,666.5H1507.3M1471.3,684.3H1507.3M1471.3,702.1H1507.3M1471.3,719.8H1507.3M1471.3,737.6H1507.3M1471.3,755.4H1507.3M1471.3,773.2H1507.3M1471.3,791H1507.3M1471.3,808.8H1507.3M1471.3,826.6H1507.3M1471.3,844.4H1507.3M1471.3,862.2H1507.3M1471.3,880H1507.3M1471.3,915.6H1507.3M1471.3,933.4H1507.3M1471.3,951.2H1507.3M1471.3,969H1507.3M1471.3,986.8H1507.3M1471.3,1004.6H1507.3M1471.3,1022.4H1507.3M1471.3,1040.2H1507.3M1471.3,1058H1507.3M1471.3,1075.8H1507.3M1471.3,1093.6H1507.3M1471.3,1111.4H1507.3M1471.3,1129.2H1507.3M1471.3,1147H1507.3M1471.3,1164.7H1507.3M1471.3,1182.5H1507.3M1293.5,238.5V274.5M1311.3,238.5V274.5M1329,238.5V274.5M1346.8,238.5V274.5M1364.6,238.5V274.5M1382.4,238.5V274.5M1400.2,238.5V274.5M1346.8,1217.3V1253.3M1364.6,1217.3V1253.3" fill="none" stroke="#840000" stroke-width="1.2"/>
<g fill="none" stroke="#840000" stroke-opacity="0.5" stroke-width="1.3"><circle cx="1186.3" cy="310.5" r="2.4"/><circle cx="1186.3" cy="346.1" r="2.4"/><circle cx="1186.3" cy="381.7" r="2.4"/><circle cx="1186.3" cy="417.3" r="2.4"/><circle cx="1186.3" cy="435.1" r="2.4"/><circle cx="1186.3" cy="470.7" r="2.4"/><circle cx="1186.3" cy="488.5" r="2.4"/><circle cx="1186.3" cy="506.3" r="2.4"/><circle cx="1186.3" cy="524.1" r="2.4"/><circle cx="1186.3" cy="541.9" r="2.4"/><circle cx="1186.3" cy="559.7" r="2.4"/><circle cx="1186.3" cy="577.5" r="2.4"/><circle cx="1186.3" cy="595.3" r="2.4"/><circle cx="1186.3" cy="613.1" r="2.4"/><circle cx="1186.3" cy="630.9" r="2.4"/><circle cx="1186.3" cy="648.7" r="2.4"/><circle cx="1186.3" cy="666.5" r="2.4"/><circle cx="1186.3" cy="684.3" r="2.4"/><circle cx="1186.3" cy="702.1" r="2.4"/><circle cx="1186.3" cy="719.8" r="2.4"/><circle cx="1186.3" cy="737.6" r="2.4"/><circle cx="1186.3" cy="773.2" r="2.4"/><circle cx="1186.3" cy="791" r="2.4"/><circle cx="1186.3" cy="808.8" r="2.4"/><circle cx="1186.3" cy="826.6" r="2.4"/><circle cx="1186.3" cy="844.4" r="2.4"/><circle cx="1186.3" cy="862.2" r="2.4"/><circle cx="1186.3" cy="880" r="2.4"/><circle cx="1186.3" cy="897.8" r="2.4"/><circle cx="1186.3" cy="915.6" r="2.4"/><circle cx="1186.3" cy="933.4" r="2.4"/><circle cx="1186.3" cy="951.2" r="2.4"/><circle cx="1186.3" cy="969" r="2.4"/><circle cx="1186.3" cy="986.8" r="2.4"/><circle cx="1186.3" cy="1004.6" r="2.4"/><circle cx="1186.3" cy="1022.4" r="2.4"/><circle cx="1186.3" cy="1040.2" r="2.4"/><circle cx="1186.3" cy="1075.8" r="2.4"/><circle cx="1186.3" cy="1093.6" r="2.4"/><circle cx="1507.3" cy="310.5" r="2.4"/><circle cx="1507.3" cy="328.3" r="2.4"/><circle cx="1507.3" cy="346.1" r="2.4"/><circle cx="1507.3" cy="363.9" r="2.4"/><circle cx="1507.3" cy="381.7" r="2.4"/><circle cx="1507.3" cy="399.5" r="2.4"/><circle cx="1507.3" cy="417.3" r="2.4"/><circle cx="1507.3" cy="435.1" r="2.4"/><circle cx="1507.3" cy="452.9" r="2.4"/><circle cx="1507.3" cy="470.7" r="2.4"/><circle cx="1507.3" cy="488.5" r="2.4"/><circle cx="1507.3" cy="506.3" r="2.4"/><circle cx="1507.3" cy="524.1" r="2.4"/><circle cx="1507.3" cy="541.9" r="2.4"/><circle cx="1507.3" cy="559.7" r="2.4"/><circle cx="1507.3" cy="577.5" r="2.4"/><circle cx="1507.3" cy="613.1" r="2.4"/><circle cx="1507.3" cy="630.9" r="2.4"/><circle cx="1507.3" cy="648.7" r="2.4"/><circle cx="1507.3" cy="666.5" r="2.4"/><circle cx="1507.3" cy="684.3" r="2.4"/><circle cx="1507.3" cy="702.1" r="2.4"/><circle cx="1507.3" cy="719.8" r="2.4"/><circle cx="1507.3" cy="737.6" r="2.4"/><circle cx="1507.3" cy="755.4" r="2.4"/><circle cx="1507.3" cy="773.2" r="2.4"/><circle cx="1507.3" cy="791" r="2.4"/><circle cx="1507.3" cy="808.8" r="2.4"/><circle cx="1507.3" cy="826.6" r="2.4"/><circle cx="1507.3" cy="844.4" r="2.4"/><circle cx="1507.3" cy="862.2" r="2.4"/><circle cx="1507.3" cy="880" r="2.4"/><circle cx="1507.3" cy="915.6" r="2.4"/><circle cx="1507.3" cy="933.4" r="2.4"/><circle cx="1507.3" cy="951.2" r="2.4"/><circle cx="1507.3" cy="969" r="2.4"/><circle cx="1507.3" cy="986.8" r="2.4"/><circle cx="1507.3" cy="1004.6" r="2.4"/><circle cx="1507.3" cy="1022.4" r="2.4"/><circle cx="1507.3" cy="1040.2" r="2.4"/><circle cx="1507.3" cy="1058" r="2.4"/><circle cx="1507.3" cy="1075.8" r="2.4"/><circle cx="1507.3" cy="1093.6" r="2.4"/><circle cx="1507.3" cy="1111.4" r="2.4"/><circle cx="1507.3" cy="1129.2" r="2.4"/><circle cx="1507.3" cy="1147" r="2.4"/><circle cx="1507.3" cy="1164.7" r="2.4"/><circle cx="1507.3" cy="1182.5" r="2.4"/><circle cx="1293.5" cy="238.5" r="2.4"/><circle cx="1311.3" cy="238.5" r="2.4"/><circle cx="1329" cy="238.5" r="2.4"/><circle cx="1346.8" cy="238.5" r="2.4"/><circle cx="1364.6" cy="238.5" r="2.4"/><circle cx="1382.4" cy="238.5" r="2.4"/><circle cx="1400.2" cy="238.5" r="2.4"/><circle cx="1346.8" cy="1253.3" r="2.4"/><circle cx="1364.6" cy="1253.3" r="2.4"/></g>
<path d="M1229,314.8 1229,306.3 1234.1,314.8 1234.1,306.3M1238.4,314.8 1238.4,306.3 1241.2,306.3 1242.3,306.7 1242.7,307.1 1243,307.9 1243,308.7 1242.7,309.5 1242.3,309.9 1241.2,310.3 1238.4,310.3M1240.5,310.3 1243,314.8M1247,314.4 1248.2,314.8 1250.3,314.8 1251.1,314.4 1251.5,314 1251.9,313.2 1251.9,312.4 1251.5,311.6 1251.1,311.2 1250.3,310.7 1248.2,309.9 1247.4,309.5 1247,308.7 1247,307.9 1247.4,307.1 1247.8,306.7 1248.6,306.3 1250.7,306.3 1251.9,306.7M1257.7,306.3 1257.7,314.8M1255.3,306.3 1260,306.3M1229,341.9 1229,350.4M1229,341.9 1231.9,341.9 1233,342.3 1233.3,342.7 1233.7,343.5 1233.7,344.3 1233.3,345.1 1233,345.5 1231.9,345.9M1229,345.9 1231.9,345.9 1233,346.3 1233.3,346.7 1233.7,347.6 1233.7,348.8 1233.3,349.6 1233,350 1231.9,350.4 1229,350.4M1239.6,341.9 1238.8,342.3 1238,343.1 1237.5,344.7 1237.5,347.6 1238,349.2 1238.8,350 1239.6,350.4 1240.8,350.4 1241.6,350 1242.4,349.2 1242.8,347.6 1242.8,344.7 1242.4,343.1 1241.6,342.3 1240.8,341.9 1239.6,341.9M1249.2,341.9 1248.3,342.3 1247.5,343.1 1247.1,344.7 1247.1,347.6 1247.5,349.2 1248.3,350 1249.2,350.4 1250.4,350.4 1251.2,350 1252,349.2 1252.4,347.6 1252.4,344.7 1252,343.1 1251.2,342.3 1250.4,341.9 1249.2,341.9M1258.4,341.9 1258.4,350.4M1256.1,341.9 1260.8,341.9M1265.5,341.9 1264.6,342.3 1264.1,343.1 1263.7,344.7 1263.7,347.6 1264.1,349.2 1264.6,350 1265.5,350.4 1267.2,350.4 1268.1,350 1268.5,349.2 1269,347.6 1269,344.7 1268.5,343.1 1268.1,342.3 1267.2,341.9 1265.5,341.9M1229,377.4 1231.9,386 1234.8,377.4M1238.1,386 1238.1,377.4 1241,377.4 1242.1,377.9 1242.4,378.3 1242.8,379.1 1242.8,379.9 1242.4,380.7 1242.1,381.1 1241,381.5 1238.1,381.5M1240.3,381.5 1242.8,386M1247,377.4 1247,386M1247,377.4 1251,377.4M1247,381.5 1249.5,381.5M1247,386 1251,386M1255.1,377.4 1255.1,386M1255.1,377.4 1259,377.4M1255.1,381.5 1257.6,381.5M1265.5,378.7 1265.5,385.6M1262.3,382.1 1268.7,382.1M1229,421.6 1229,413 1231.9,413 1233,413.4 1233.3,413.9 1233.7,414.7 1233.7,415.9 1233.3,416.7 1233,417.1 1231.9,417.5 1229,417.5M1238.2,413 1238.2,421.6M1242.8,413 1242.8,421.6M1238.2,417.1 1242.8,417.1M1248.4,413 1247.5,413.4 1247,414.3 1246.6,415.9 1246.6,418.7 1247,420.4 1247.5,421.2 1248.4,421.6 1250.1,421.6 1251,421.2 1251.4,420.4 1251.9,418.7 1251.9,415.9 1251.4,414.3 1251,413.4 1250.1,413 1248.4,413M1229,439.4 1229,430.8 1231.9,430.8 1233,431.2 1233.3,431.7 1233.7,432.5 1233.7,433.7 1233.3,434.5 1233,434.9 1231.9,435.3 1229,435.3M1238.2,430.8 1238.2,439.4M1242.8,430.8 1242.8,439.4M1238.2,434.9 1242.8,434.9M1246.7,432.5 1247.9,432.1 1249.2,430.8 1249.2,439.4M1246.7,439.4 1251.6,439.4M1229,475 1229,466.4 1231.9,466.4 1233,466.8 1233.3,467.2 1233.7,468.1 1233.7,469.3 1233.3,470.1 1233,470.5 1231.9,470.9 1229,470.9M1238.2,466.4 1238.2,475M1238.2,466.4 1242.2,466.4M1238.2,470.5 1240.8,470.5M1238.2,475 1242.2,475M1247.5,466.4 1246.7,466.8 1246.2,467.7 1245.8,469.3 1245.8,472.1 1246.2,473.8 1246.7,474.6 1247.5,475 1249.3,475 1250.2,474.6 1250.6,473.8 1251.1,472.1 1251.1,469.3 1250.6,467.7 1250.2,466.8 1249.3,466.4 1247.5,466.4M1229,492.8 1229,484.2 1231.9,484.2 1233,484.6 1233.3,485 1233.7,485.9 1233.7,487.1 1233.3,487.9 1233,488.3 1231.9,488.7 1229,488.7M1238.2,484.2 1238.2,492.8M1238.2,484.2 1242.2,484.2M1238.2,488.3 1240.8,488.3M1238.2,492.8 1242.2,492.8M1245.9,485.9 1247.1,485.4 1248.3,484.2 1248.3,492.8M1245.9,492.8 1250.8,492.8M1229,510.6 1229,502 1231.9,502 1233,502.4 1233.3,502.8 1233.7,503.6 1233.7,504.9 1233.3,505.7 1233,506.1 1231.9,506.5 1229,506.5M1238.2,502 1238.2,510.6M1238.2,502 1242.2,502M1238.2,506.1 1240.8,506.1M1238.2,510.6 1242.2,510.6M1245.8,503.6 1246.2,502.8 1246.7,502.4 1247.5,502 1249.3,502 1250.2,502.4 1250.6,502.8 1251.1,503.6 1251.1,504.5 1250.6,505.7 1245.8,510.6 1251.1,510.6M1229,528.4 1229,519.8 1231.9,519.8 1233,520.2 1233.3,520.6 1233.7,521.4 1233.7,522.7 1233.3,523.5 1233,523.9 1231.9,524.3 1229,524.3M1238.2,519.8 1238.2,528.4M1238.2,519.8 1242.2,519.8M1238.2,523.9 1240.8,523.9M1238.2,528.4 1242.2,528.4M1245.8,519.8 1251.1,519.8 1248,523.1 1249.3,523.1 1250.2,523.5 1250.6,523.9 1251.1,524.7 1251.1,526.3 1250.6,527.1 1250.2,528 1249.3,528.4 1247.1,528.4 1246.2,528 1245.8,527.6M1229,546.2 1229,537.6 1231.9,537.6 1233,538 1233.3,538.4 1233.7,539.2 1233.7,540.5 1233.3,541.3 1233,541.7 1231.9,542.1 1229,542.1M1238.2,537.6 1238.2,546.2M1238.2,537.6 1242.2,537.6M1238.2,541.7 1240.8,541.7M1238.2,546.2 1242.2,546.2M1249.8,540.5 1249.8,546.2M1247.9,537.6 1245.6,543.3 1251.3,543.3M1229,564 1229,555.4 1231.9,555.4 1233,555.8 1233.3,556.2 1233.7,557 1233.7,558.3 1233.3,559.1 1233,559.5 1231.9,559.9 1229,559.9M1238.2,555.4 1238.2,564M1238.2,555.4 1242.2,555.4M1238.2,559.5 1240.8,559.5M1238.2,564 1242.2,564M1250.6,555.4 1246.2,555.4 1245.8,559.1 1246.2,558.7 1247.1,558.3 1249.3,558.3 1250.2,558.7 1250.6,559.1 1251.1,559.9 1251.1,561.9 1250.6,562.7 1250.2,563.6 1249.3,564 1247.1,564 1246.2,563.6 1245.8,563.1M1229,581.8 1229,573.2 1231.9,573.2 1233,573.6 1233.3,574 1233.7,574.8 1233.7,576.1 1233.3,576.9 1233,577.3 1231.9,577.7 1229,577.7M1238.2,573.2 1238.2,581.8M1238.2,573.2 1242.2,573.2M1238.2,577.3 1240.8,577.3M1238.2,581.8 1242.2,581.8M1250.2,573.2 1248.4,573.2 1247.5,573.6 1246.7,574.4 1246.2,575.2 1245.8,576.9 1245.8,579.7 1246.2,580.9 1246.7,581.3 1247.5,581.8 1249.3,581.8 1250.2,581.3 1250.6,580.9 1251.1,579.7 1251.1,578.5 1250.6,577.3 1250.2,576.9 1249.3,576.5 1247.5,576.5 1246.7,576.9 1245.8,578.1M1229,599.6 1229,591 1231.9,591 1233,591.4 1233.3,591.8 1233.7,592.6 1233.7,593.9 1233.3,594.7 1233,595.1 1231.9,595.5 1229,595.5M1238.2,591 1238.2,599.6M1238.2,591 1242.2,591M1238.2,595.1 1240.8,595.1M1238.2,599.6 1242.2,599.6M1245.6,591 1251.3,591 1247.7,599.6M1229,617.3 1229,608.8 1231.9,608.8 1233,609.2 1233.3,609.6 1233.7,610.4 1233.7,611.6 1233.3,612.5 1233,612.9 1231.9,613.3 1229,613.3M1238.2,608.8 1238.2,617.3M1238.2,608.8 1242.2,608.8M1238.2,612.9 1240.8,612.9M1238.2,617.3 1242.2,617.3M1247.5,612.5 1246.5,612.1 1246,611.6 1245.8,610.8 1245.8,610 1246.3,609.2 1247.2,608.8 1249.6,608.8 1250.6,609.2 1251,610 1251,610.8 1250.8,611.6 1250.3,612.1 1249.4,612.5 1247.5,612.5 1246.5,612.9 1246,613.3 1245.6,614.1 1245.6,615.7 1246,616.5 1246.5,616.9 1247.5,617.3 1249.4,617.3 1250.3,616.9 1250.8,616.5 1251.3,615.7 1251.3,614.1 1250.8,613.3 1250.3,612.9 1249.4,612.5M1229,635.1 1229,626.6 1231.9,626.6 1233,627 1233.3,627.4 1233.7,628.2 1233.7,629.4 1233.3,630.3 1233,630.7 1231.9,631.1 1229,631.1M1238.2,626.6 1238.2,635.1M1238.2,626.6 1242.2,626.6M1238.2,630.7 1240.8,630.7M1238.2,635.1 1242.2,635.1M1246.7,635.1 1248.4,635.1 1249.3,634.7 1250.2,633.9 1250.6,633.1 1251.1,631.5 1251.1,628.6 1250.6,627.4 1250.2,627 1249.3,626.6 1247.5,626.6 1246.7,627 1246.2,627.4 1245.8,628.6 1245.8,629.9 1246.2,631.1 1246.7,631.5 1247.5,631.9 1249.3,631.9 1250.2,631.5 1251.1,630.3M1229,652.9 1229,644.4 1231.9,644.4 1233,644.8 1233.3,645.2 1233.7,646 1233.7,647.2 1233.3,648.1 1233,648.5 1231.9,648.9 1229,648.9M1238.2,644.4 1238.2,652.9M1238.2,644.4 1242.2,644.4M1238.2,648.5 1240.8,648.5M1238.2,652.9 1242.2,652.9M1245.9,646 1247.1,645.6 1248.3,644.4 1248.3,652.9M1245.9,652.9 1250.8,652.9M1255.9,644.4 1255,644.8 1254.6,645.6 1254.1,647.2 1254.1,650.1 1254.6,651.7 1255,652.5 1255.9,652.9 1257.6,652.9 1258.5,652.5 1259,651.7 1259.4,650.1 1259.4,647.2 1259,645.6 1258.5,644.8 1257.6,644.4 1255.9,644.4M1229,670.7 1229,662.2 1231.9,662.2 1233,662.6 1233.3,663 1233.7,663.8 1233.7,665 1233.3,665.8 1233,666.3 1231.9,666.7 1229,666.7M1238.2,662.2 1238.2,670.7M1238.2,662.2 1242.2,662.2M1238.2,666.3 1240.8,666.3M1238.2,670.7 1242.2,670.7M1245.9,663.8 1247.1,663.4 1248.3,662.2 1248.3,670.7M1245.9,670.7 1250.8,670.7M1254.2,663.8 1255.5,663.4 1256.7,662.2 1256.7,670.7M1254.2,670.7 1259.1,670.7M1229,688.5 1229,680 1231.9,680 1233,680.4 1233.3,680.8 1233.7,681.6 1233.7,682.8 1233.3,683.6 1233,684.1 1231.9,684.5 1229,684.5M1238.2,680 1238.2,688.5M1238.2,680 1242.2,680M1238.2,684.1 1240.8,684.1M1238.2,688.5 1242.2,688.5M1245.9,681.6 1247.1,681.2 1248.3,680 1248.3,688.5M1245.9,688.5 1250.8,688.5M1254.1,681.6 1254.6,680.8 1255,680.4 1255.9,680 1257.6,680 1258.5,680.4 1259,680.8 1259.4,681.6 1259.4,682.4 1259,683.6 1254.1,688.5 1259.4,688.5M1229,706.3 1229,697.8 1231.9,697.8 1233,698.2 1233.3,698.6 1233.7,699.4 1233.7,700.6 1233.3,701.4 1233,701.8 1231.9,702.3 1229,702.3M1238.2,697.8 1238.2,706.3M1238.2,697.8 1242.2,697.8M1238.2,701.8 1240.8,701.8M1238.2,706.3 1242.2,706.3M1245.9,699.4 1247.1,699 1248.3,697.8 1248.3,706.3M1245.9,706.3 1250.8,706.3M1254.1,697.8 1259.4,697.8 1256.3,701 1257.6,701 1258.5,701.4 1259,701.8 1259.4,702.7 1259.4,704.3 1259,705.1 1258.5,705.9 1257.6,706.3 1255.4,706.3 1254.6,705.9 1254.1,705.5M1229,724.1 1229,715.6 1231.9,715.6 1233,716 1233.3,716.4 1233.7,717.2 1233.7,718.4 1233.3,719.2 1233,719.6 1231.9,720.1 1229,720.1M1238.2,715.6 1238.2,724.1M1238.2,715.6 1242.2,715.6M1238.2,719.6 1240.8,719.6M1238.2,724.1 1242.2,724.1M1245.9,717.2 1247.1,716.8 1248.3,715.6 1248.3,724.1M1245.9,724.1 1250.8,724.1M1258.2,718.4 1258.2,724.1M1256.3,715.6 1253.9,721.3 1259.6,721.3M1229,741.9 1229,733.4 1231.9,733.4 1233,733.8 1233.3,734.2 1233.7,735 1233.7,736.2 1233.3,737 1233,737.4 1231.9,737.8 1229,737.8M1238.2,733.4 1238.2,741.9M1238.2,733.4 1242.2,733.4M1238.2,737.4 1240.8,737.4M1238.2,741.9 1242.2,741.9M1245.9,735 1247.1,734.6 1248.3,733.4 1248.3,741.9M1245.9,741.9 1250.8,741.9M1259,733.4 1254.6,733.4 1254.1,737 1254.6,736.6 1255.4,736.2 1257.6,736.2 1258.5,736.6 1259,737 1259.4,737.8 1259.4,739.9 1259,740.7 1258.5,741.5 1257.6,741.9 1255.4,741.9 1254.6,741.5 1254.1,741.1M1229,777.5 1229,769 1231.9,769 1233,769.4 1233.3,769.8 1233.7,770.6 1233.7,771.8 1233.3,772.6 1233,773 1231.9,773.4 1229,773.4M1238.2,769 1238.2,777.5M1238.2,769 1240.8,769 1242,769.4 1242.7,770.4 1243.1,771.8 1243.1,774.7 1242.7,776.1 1242,777.1 1240.8,777.5 1238.2,777.5M1248.6,769 1247.7,769.4 1247.2,770.2 1246.8,771.8 1246.8,774.7 1247.2,776.3 1247.7,777.1 1248.6,777.5 1250.3,777.5 1251.2,777.1 1251.6,776.3 1252.1,774.7 1252.1,771.8 1251.6,770.2 1251.2,769.4 1250.3,769 1248.6,769M1229,795.3 1229,786.8 1231.9,786.8 1233,787.2 1233.3,787.6 1233.7,788.4 1233.7,789.6 1233.3,790.4 1233,790.8 1231.9,791.2 1229,791.2M1238.2,786.8 1238.2,795.3M1238.2,786.8 1240.8,786.8 1242,787.2 1242.7,788.2 1243.1,789.6 1243.1,792.5 1242.7,793.9 1242,794.9 1240.8,795.3 1238.2,795.3M1246.9,788.4 1248.1,788 1249.4,786.8 1249.4,795.3M1246.9,795.3 1251.8,795.3M1229,813.1 1229,804.6 1231.9,804.6 1233,805 1233.3,805.4 1233.7,806.2 1233.7,807.4 1233.3,808.2 1233,808.6 1231.9,809 1229,809M1238.2,804.6 1238.2,813.1M1238.2,804.6 1240.8,804.6 1242,805 1242.7,806 1243.1,807.4 1243.1,810.3 1242.7,811.7 1242,812.7 1240.8,813.1 1238.2,813.1M1246.8,806.2 1247.2,805.4 1247.7,805 1248.6,804.6 1250.3,804.6 1251.2,805 1251.6,805.4 1252.1,806.2 1252.1,807 1251.6,808.2 1246.8,813.1 1252.1,813.1M1229,830.9 1229,822.3 1231.9,822.3 1233,822.8 1233.3,823.2 1233.7,824 1233.7,825.2 1233.3,826 1233,826.4 1231.9,826.8 1229,826.8M1238.2,822.3 1238.2,830.9M1238.2,822.3 1240.8,822.3 1242,822.8 1242.7,823.8 1243.1,825.2 1243.1,828 1242.7,829.5 1242,830.5 1240.8,830.9 1238.2,830.9M1246.8,822.3 1252.1,822.3 1249,825.6 1250.3,825.6 1251.2,826 1251.6,826.4 1252.1,827.2 1252.1,828.9 1251.6,829.7 1251.2,830.5 1250.3,830.9 1248.1,830.9 1247.2,830.5 1246.8,830.1M1229,848.7 1229,840.1 1231.9,840.1 1233,840.6 1233.3,841 1233.7,841.8 1233.7,843 1233.3,843.8 1233,844.2 1231.9,844.6 1229,844.6M1238.2,840.1 1238.2,848.7M1238.2,840.1 1240.8,840.1 1242,840.6 1242.7,841.6 1243.1,843 1243.1,845.8 1242.7,847.3 1242,848.3 1240.8,848.7 1238.2,848.7M1250.9,843 1250.9,848.7M1249,840.1 1246.6,845.8 1252.3,845.8M1229,866.5 1229,857.9 1231.9,857.9 1233,858.3 1233.3,858.8 1233.7,859.6 1233.7,860.8 1233.3,861.6 1233,862 1231.9,862.4 1229,862.4M1238.2,857.9 1238.2,866.5M1238.2,857.9 1240.8,857.9 1242,858.3 1242.7,859.4 1243.1,860.8 1243.1,863.6 1242.7,865.1 1242,866.1 1240.8,866.5 1238.2,866.5M1251.6,857.9 1247.2,857.9 1246.8,861.6 1247.2,861.2 1248.1,860.8 1250.3,860.8 1251.2,861.2 1251.6,861.6 1252.1,862.4 1252.1,864.5 1251.6,865.3 1251.2,866.1 1250.3,866.5 1248.1,866.5 1247.2,866.1 1246.8,865.7M1229,884.3 1229,875.7 1231.9,875.7 1233,876.1 1233.3,876.6 1233.7,877.4 1233.7,878.6 1233.3,879.4 1233,879.8 1231.9,880.2 1229,880.2M1238.2,875.7 1238.2,884.3M1238.2,875.7 1240.8,875.7 1242,876.1 1242.7,877.2 1243.1,878.6 1243.1,881.4 1242.7,882.9 1242,883.9 1240.8,884.3 1238.2,884.3M1251.2,875.7 1249.4,875.7 1248.6,876.1 1247.7,877 1247.2,877.8 1246.8,879.4 1246.8,882.3 1247.2,883.5 1247.7,883.9 1248.6,884.3 1250.3,884.3 1251.2,883.9 1251.6,883.5 1252.1,882.3 1252.1,881 1251.6,879.8 1251.2,879.4 1250.3,879 1248.6,879 1247.7,879.4 1246.8,880.6M1229,902.1 1229,893.5 1231.9,893.5 1233,893.9 1233.3,894.3 1233.7,895.2 1233.7,896.4 1233.3,897.2 1233,897.6 1231.9,898 1229,898M1238.2,893.5 1238.2,902.1M1238.2,893.5 1240.8,893.5 1242,893.9 1242.7,895 1243.1,896.4 1243.1,899.2 1242.7,900.7 1242,901.7 1240.8,902.1 1238.2,902.1M1246.6,893.5 1252.3,893.5 1248.7,902.1M1229,919.9 1229,911.3 1231.9,911.3 1233,911.7 1233.3,912.1 1233.7,913 1233.7,914.2 1233.3,915 1233,915.4 1231.9,915.8 1229,915.8M1238.2,911.3 1238.2,919.9M1238.2,911.3 1240.8,911.3 1242,911.7 1242.7,912.8 1243.1,914.2 1243.1,917 1242.7,918.5 1242,919.5 1240.8,919.9 1238.2,919.9M1248.5,915 1247.5,914.6 1247.1,914.2 1246.8,913.4 1246.8,912.6 1247.3,911.7 1248.3,911.3 1250.6,911.3 1251.6,911.7 1252.1,912.6 1252.1,913.4 1251.8,914.2 1251.3,914.6 1250.4,915 1248.5,915 1247.5,915.4 1247.1,915.8 1246.6,916.6 1246.6,918.3 1247.1,919.1 1247.5,919.5 1248.5,919.9 1250.4,919.9 1251.3,919.5 1251.8,919.1 1252.3,918.3 1252.3,916.6 1251.8,915.8 1251.3,915.4 1250.4,915M1229,937.7 1229,929.1 1231.9,929.1 1233,929.5 1233.3,929.9 1233.7,930.8 1233.7,932 1233.3,932.8 1233,933.2 1231.9,933.6 1229,933.6M1238.2,929.1 1238.2,937.7M1238.2,929.1 1240.8,929.1 1242,929.5 1242.7,930.6 1243.1,932 1243.1,934.8 1242.7,936.3 1242,937.3 1240.8,937.7 1238.2,937.7M1247.7,937.7 1249.4,937.7 1250.3,937.3 1251.2,936.5 1251.6,935.6 1252.1,934 1252.1,931.2 1251.6,929.9 1251.2,929.5 1250.3,929.1 1248.6,929.1 1247.7,929.5 1247.2,929.9 1246.8,931.2 1246.8,932.4 1247.2,933.6 1247.7,934 1248.6,934.4 1250.3,934.4 1251.2,934 1252.1,932.8M1229,955.5 1229,946.9 1231.9,946.9 1233,947.3 1233.3,947.7 1233.7,948.5 1233.7,949.8 1233.3,950.6 1233,951 1231.9,951.4 1229,951.4M1238.2,946.9 1238.2,955.5M1238.2,946.9 1240.8,946.9 1242,947.3 1242.7,948.3 1243.1,949.8 1243.1,952.6 1242.7,954 1242,955.1 1240.8,955.5 1238.2,955.5M1246.9,948.5 1248.1,948.1 1249.4,946.9 1249.4,955.5M1246.9,955.5 1251.8,955.5M1256.9,946.9 1256,947.3 1255.6,948.1 1255.1,949.8 1255.1,952.6 1255.6,954.2 1256,955.1 1256.9,955.5 1258.7,955.5 1259.5,955.1 1260,954.2 1260.4,952.6 1260.4,949.8 1260,948.1 1259.5,947.3 1258.7,946.9 1256.9,946.9M1229,973.3 1229,964.7 1231.9,964.7 1233,965.1 1233.3,965.5 1233.7,966.3 1233.7,967.6 1233.3,968.4 1233,968.8 1231.9,969.2 1229,969.2M1238.2,964.7 1238.2,973.3M1238.2,964.7 1240.8,964.7 1242,965.1 1242.7,966.1 1243.1,967.6 1243.1,970.4 1242.7,971.8 1242,972.9 1240.8,973.3 1238.2,973.3M1246.9,966.3 1248.1,965.9 1249.4,964.7 1249.4,973.3M1246.9,973.3 1251.8,973.3M1255.3,966.3 1256.5,965.9 1257.7,964.7 1257.7,973.3M1255.3,973.3 1260.1,973.3M1229,991.1 1229,982.5 1231.9,982.5 1233,982.9 1233.3,983.3 1233.7,984.1 1233.7,985.4 1233.3,986.2 1233,986.6 1231.9,987 1229,987M1238.2,982.5 1238.2,991.1M1238.2,982.5 1240.8,982.5 1242,982.9 1242.7,983.9 1243.1,985.4 1243.1,988.2 1242.7,989.6 1242,990.7 1240.8,991.1 1238.2,991.1M1246.9,984.1 1248.1,983.7 1249.4,982.5 1249.4,991.1M1246.9,991.1 1251.8,991.1M1255.1,984.1 1255.6,983.3 1256,982.9 1256.9,982.5 1258.7,982.5 1259.5,982.9 1260,983.3 1260.4,984.1 1260.4,985 1260,986.2 1255.1,991.1 1260.4,991.1M1229,1008.9 1229,1000.3 1231.9,1000.3 1233,1000.7 1233.3,1001.1 1233.7,1001.9 1233.7,1003.2 1233.3,1004 1233,1004.4 1231.9,1004.8 1229,1004.8M1238.2,1000.3 1238.2,1008.9M1238.2,1000.3 1240.8,1000.3 1242,1000.7 1242.7,1001.7 1243.1,1003.2 1243.1,1006 1242.7,1007.4 1242,1008.5 1240.8,1008.9 1238.2,1008.9M1246.9,1001.9 1248.1,1001.5 1249.4,1000.3 1249.4,1008.9M1246.9,1008.9 1251.8,1008.9M1255.1,1000.3 1260.4,1000.3 1257.3,1003.6 1258.7,1003.6 1259.5,1004 1260,1004.4 1260.4,1005.2 1260.4,1006.8 1260,1007.6 1259.5,1008.5 1258.7,1008.9 1256.5,1008.9 1255.6,1008.5 1255.1,1008M1229,1026.7 1229,1018.1 1231.9,1018.1 1233,1018.5 1233.3,1018.9 1233.7,1019.7 1233.7,1021 1233.3,1021.8 1233,1022.2 1231.9,1022.6 1229,1022.6M1238.2,1018.1 1238.2,1026.7M1238.2,1018.1 1240.8,1018.1 1242,1018.5 1242.7,1019.5 1243.1,1021 1243.1,1023.8 1242.7,1025.2 1242,1026.2 1240.8,1026.7 1238.2,1026.7M1246.9,1019.7 1248.1,1019.3 1249.4,1018.1 1249.4,1026.7M1246.9,1026.7 1251.8,1026.7M1259.2,1021 1259.2,1026.7M1257.3,1018.1 1254.9,1023.8 1260.6,1023.8M1229,1044.5 1229,1035.9 1231.9,1035.9 1233,1036.3 1233.3,1036.7 1233.7,1037.5 1233.7,1038.8 1233.3,1039.6 1233,1040 1231.9,1040.4 1229,1040.4M1238.2,1035.9 1238.2,1044.5M1238.2,1035.9 1240.8,1035.9 1242,1036.3 1242.7,1037.3 1243.1,1038.8 1243.1,1041.6 1242.7,1043 1242,1044 1240.8,1044.5 1238.2,1044.5M1246.9,1037.5 1248.1,1037.1 1249.4,1035.9 1249.4,1044.5M1246.9,1044.5 1251.8,1044.5M1260,1035.9 1255.6,1035.9 1255.1,1039.6 1255.6,1039.2 1256.5,1038.8 1258.7,1038.8 1259.5,1039.2 1260,1039.6 1260.4,1040.4 1260.4,1042.4 1260,1043.2 1259.5,1044 1258.7,1044.5 1256.5,1044.5 1255.6,1044 1255.1,1043.6M1229,1071.5 1231.9,1080 1234.8,1071.5M1243.2,1079.2 1242.8,1079.6 1241.6,1080 1240.5,1080 1239.3,1079.6 1238.5,1078.8 1238.1,1077.2 1238.1,1074.3 1238.5,1072.7 1239.3,1071.9 1240.5,1071.5 1241.6,1071.5 1242.8,1071.9 1243.2,1072.3M1246,1080 1248.8,1071.5 1251.7,1080M1247,1077.2 1250.6,1077.2M1254.6,1080 1254.6,1071.5 1257.5,1071.5 1258.6,1071.9 1258.9,1072.3 1259.3,1073.1 1259.3,1074.3 1258.9,1075.2 1258.6,1075.6 1257.5,1076 1254.6,1076M1229,1089.3 1231.9,1097.8 1234.8,1089.3M1243.2,1097 1242.8,1097.4 1241.6,1097.8 1240.5,1097.8 1239.3,1097.4 1238.5,1096.6 1238.1,1095 1238.1,1092.1 1238.5,1090.5 1239.3,1089.7 1240.5,1089.3 1241.6,1089.3 1242.8,1089.7 1243.2,1090.1M1246,1097.8 1248.8,1089.3 1251.7,1097.8M1247,1095 1250.6,1095M1254.6,1097.8 1254.6,1089.3 1257.5,1089.3 1258.6,1089.7 1258.9,1090.1 1259.3,1090.9 1259.3,1092.1 1258.9,1093 1258.6,1093.4 1257.5,1093.8 1254.6,1093.8M1442.9,314.8 1442.9,306.3 1445.8,306.3 1446.9,306.7 1447.3,307.1 1447.6,307.9 1447.6,309.1 1447.3,309.9 1446.9,310.3 1445.8,310.7 1442.9,310.7M1451,314.8 1453.9,306.3 1456.7,314.8M1452.1,312 1455.6,312M1460.9,306.3 1460,306.7 1459.5,307.5 1459.1,309.1 1459.1,312 1459.5,313.6 1460,314.4 1460.9,314.8 1462.6,314.8 1463.5,314.4 1464,313.6 1464.4,312 1464.4,309.1 1464,307.5 1463.5,306.7 1462.6,306.3 1460.9,306.3M1443.2,332.6 1443.2,324.1 1446.1,324.1 1447.2,324.5 1447.6,324.9 1447.9,325.7 1447.9,326.9 1447.6,327.7 1447.2,328.1 1446.1,328.5 1443.2,328.5M1451.3,332.6 1454.1,324.1 1457,332.6M1452.4,329.8 1455.9,329.8M1459.5,325.7 1460.7,325.3 1462,324.1 1462,332.6M1459.5,332.6 1464.4,332.6M1442.9,350.4 1442.9,341.9 1445.8,341.9 1446.9,342.3 1447.3,342.7 1447.6,343.5 1447.6,344.7 1447.3,345.5 1446.9,345.9 1445.8,346.3 1442.9,346.3M1451,350.4 1453.9,341.9 1456.7,350.4M1452.1,347.6 1455.6,347.6M1459.1,343.5 1459.5,342.7 1460,342.3 1460.9,341.9 1462.6,341.9 1463.5,342.3 1464,342.7 1464.4,343.5 1464.4,344.3 1464,345.5 1459.1,350.4 1464.4,350.4M1442.9,368.2 1442.9,359.7 1445.8,359.7 1446.9,360.1 1447.3,360.5 1447.6,361.3 1447.6,362.5 1447.3,363.3 1446.9,363.7 1445.8,364.1 1442.9,364.1M1451,368.2 1453.9,359.7 1456.7,368.2M1452.1,365.4 1455.6,365.4M1459.1,359.7 1464.4,359.7 1461.3,362.9 1462.6,362.9 1463.5,363.3 1464,363.7 1464.4,364.5 1464.4,366.2 1464,367 1463.5,367.8 1462.6,368.2 1460.4,368.2 1459.5,367.8 1459.1,367.4M1442.7,386 1442.7,377.4 1445.6,377.4 1446.7,377.9 1447.1,378.3 1447.4,379.1 1447.4,380.3 1447.1,381.1 1446.7,381.5 1445.6,381.9 1442.7,381.9M1450.8,386 1453.7,377.4 1456.5,386M1451.9,383.1 1455.4,383.1M1463,380.3 1463,386M1461.1,377.4 1458.7,383.1 1464.4,383.1M1442.9,403.8 1442.9,395.2 1445.8,395.2 1446.9,395.7 1447.3,396.1 1447.6,396.9 1447.6,398.1 1447.3,398.9 1446.9,399.3 1445.8,399.7 1442.9,399.7M1451,403.8 1453.9,395.2 1456.7,403.8M1452.1,400.9 1455.6,400.9M1464,395.2 1459.5,395.2 1459.1,398.9 1459.5,398.5 1460.4,398.1 1462.6,398.1 1463.5,398.5 1464,398.9 1464.4,399.7 1464.4,401.8 1464,402.6 1463.5,403.4 1462.6,403.8 1460.4,403.8 1459.5,403.4 1459.1,403M1442.9,421.6 1442.9,413 1445.8,413 1446.9,413.4 1447.3,413.9 1447.6,414.7 1447.6,415.9 1447.3,416.7 1446.9,417.1 1445.8,417.5 1442.9,417.5M1451,421.6 1453.9,413 1456.7,421.6M1452.1,418.7 1455.6,418.7M1463.5,413 1461.8,413 1460.9,413.4 1460,414.3 1459.5,415.1 1459.1,416.7 1459.1,419.6 1459.5,420.8 1460,421.2 1460.9,421.6 1462.6,421.6 1463.5,421.2 1464,420.8 1464.4,419.6 1464.4,418.3 1464,417.1 1463.5,416.7 1462.6,416.3 1460.9,416.3 1460,416.7 1459.1,417.9M1442.7,439.4 1442.7,430.8 1445.6,430.8 1446.7,431.2 1447.1,431.7 1447.4,432.5 1447.4,433.7 1447.1,434.5 1446.7,434.9 1445.6,435.3 1442.7,435.3M1450.8,439.4 1453.7,430.8 1456.5,439.4M1451.9,436.5 1455.4,436.5M1458.7,430.8 1464.4,430.8 1460.8,439.4M1442.7,457.2 1442.7,448.6 1445.6,448.6 1446.7,449 1447.1,449.4 1447.4,450.3 1447.4,451.5 1447.1,452.3 1446.7,452.7 1445.6,453.1 1442.7,453.1M1450.8,457.2 1453.7,448.6 1456.5,457.2M1451.9,454.3 1455.4,454.3M1460.6,452.3 1459.6,451.9 1459.2,451.5 1458.9,450.7 1458.9,449.9 1459.4,449 1460.4,448.6 1462.7,448.6 1463.7,449 1464.2,449.9 1464.2,450.7 1463.9,451.5 1463.4,451.9 1462.5,452.3 1460.6,452.3 1459.6,452.7 1459.2,453.1 1458.7,453.9 1458.7,455.6 1459.2,456.4 1459.6,456.8 1460.6,457.2 1462.5,457.2 1463.4,456.8 1463.9,456.4 1464.4,455.6 1464.4,453.9 1463.9,453.1 1463.4,452.7 1462.5,452.3M1442.9,475 1442.9,466.4 1445.8,466.4 1446.9,466.8 1447.3,467.2 1447.6,468.1 1447.6,469.3 1447.3,470.1 1446.9,470.5 1445.8,470.9 1442.9,470.9M1451,475 1453.9,466.4 1456.7,475M1452.1,472.1 1455.6,472.1M1460,475 1461.8,475 1462.6,474.6 1463.5,473.8 1464,472.9 1464.4,471.3 1464.4,468.5 1464,467.2 1463.5,466.8 1462.6,466.4 1460.9,466.4 1460,466.8 1459.5,467.2 1459.1,468.5 1459.1,469.7 1459.5,470.9 1460,471.3 1460.9,471.7 1462.6,471.7 1463.5,471.3 1464.4,470.1M1434.6,492.8 1434.6,484.2 1437.5,484.2 1438.6,484.6 1438.9,485 1439.3,485.9 1439.3,487.1 1438.9,487.9 1438.6,488.3 1437.5,488.7 1434.6,488.7M1442.7,492.8 1445.5,484.2 1448.4,492.8M1443.7,489.9 1447.3,489.9M1450.9,485.9 1452.1,485.4 1453.3,484.2 1453.3,492.8M1450.9,492.8 1455.8,492.8M1460.9,484.2 1460,484.6 1459.5,485.4 1459.1,487.1 1459.1,489.9 1459.5,491.6 1460,492.4 1460.9,492.8 1462.6,492.8 1463.5,492.4 1464,491.6 1464.4,489.9 1464.4,487.1 1464,485.4 1463.5,484.6 1462.6,484.2 1460.9,484.2M1434.9,510.6 1434.9,502 1437.8,502 1438.8,502.4 1439.2,502.8 1439.6,503.6 1439.6,504.9 1439.2,505.7 1438.8,506.1 1437.8,506.5 1434.9,506.5M1442.9,510.6 1445.8,502 1448.6,510.6M1444,507.7 1447.6,507.7M1451.2,503.6 1452.4,503.2 1453.6,502 1453.6,510.6M1451.2,510.6 1456.1,510.6M1459.5,503.6 1460.7,503.2 1462,502 1462,510.6M1459.5,510.6 1464.4,510.6M1434.6,528.4 1434.6,519.8 1437.5,519.8 1438.6,520.2 1438.9,520.6 1439.3,521.4 1439.3,522.7 1438.9,523.5 1438.6,523.9 1437.5,524.3 1434.6,524.3M1442.7,528.4 1445.5,519.8 1448.4,528.4M1443.7,525.5 1447.3,525.5M1450.9,521.4 1452.1,521 1453.3,519.8 1453.3,528.4M1450.9,528.4 1455.8,528.4M1459.1,521.4 1459.5,520.6 1460,520.2 1460.9,519.8 1462.6,519.8 1463.5,520.2 1464,520.6 1464.4,521.4 1464.4,522.3 1464,523.5 1459.1,528.4 1464.4,528.4M1434.6,546.2 1434.6,537.6 1437.5,537.6 1438.6,538 1438.9,538.4 1439.3,539.2 1439.3,540.5 1438.9,541.3 1438.6,541.7 1437.5,542.1 1434.6,542.1M1442.7,546.2 1445.5,537.6 1448.4,546.2M1443.7,543.3 1447.3,543.3M1450.9,539.2 1452.1,538.8 1453.3,537.6 1453.3,546.2M1450.9,546.2 1455.8,546.2M1459.1,537.6 1464.4,537.6 1461.3,540.9 1462.6,540.9 1463.5,541.3 1464,541.7 1464.4,542.5 1464.4,544.1 1464,544.9 1463.5,545.8 1462.6,546.2 1460.4,546.2 1459.5,545.8 1459.1,545.3M1434.4,564 1434.4,555.4 1437.3,555.4 1438.4,555.8 1438.7,556.2 1439.1,557 1439.1,558.3 1438.7,559.1 1438.4,559.5 1437.3,559.9 1434.4,559.9M1442.5,564 1445.3,555.4 1448.2,564M1443.5,561.1 1447.1,561.1M1450.7,557 1451.9,556.6 1453.1,555.4 1453.1,564M1450.7,564 1455.6,564M1463,558.3 1463,564M1461.1,555.4 1458.7,561.1 1464.4,561.1M1434.6,581.8 1434.6,573.2 1437.5,573.2 1438.6,573.6 1438.9,574 1439.3,574.8 1439.3,576.1 1438.9,576.9 1438.6,577.3 1437.5,577.7 1434.6,577.7M1442.7,581.8 1445.5,573.2 1448.4,581.8M1443.7,578.9 1447.3,578.9M1450.9,574.8 1452.1,574.4 1453.3,573.2 1453.3,581.8M1450.9,581.8 1455.8,581.8M1464,573.2 1459.5,573.2 1459.1,576.9 1459.5,576.5 1460.4,576.1 1462.6,576.1 1463.5,576.5 1464,576.9 1464.4,577.7 1464.4,579.7 1464,580.5 1463.5,581.3 1462.6,581.8 1460.4,581.8 1459.5,581.3 1459.1,580.9M1441.9,617.3 1441.9,608.8 1444.8,608.8 1445.9,609.2 1446.2,609.6 1446.6,610.4 1446.6,611.6 1446.2,612.5 1445.9,612.9 1444.8,613.3 1441.9,613.3M1451.1,608.8 1451.1,617.3M1451.1,608.8 1454,608.8 1455,609.2 1455.4,609.6 1455.8,610.4 1455.8,611.2 1455.4,612.1 1455,612.5 1454,612.9M1451.1,612.9 1454,612.9 1455,613.3 1455.4,613.7 1455.8,614.5 1455.8,615.7 1455.4,616.5 1455,616.9 1454,617.3 1451.1,617.3M1460.9,608.8 1460,609.2 1459.5,610 1459.1,611.6 1459.1,614.5 1459.5,616.1 1460,616.9 1460.9,617.3 1462.6,617.3 1463.5,616.9 1464,616.1 1464.4,614.5 1464.4,611.6 1464,610 1463.5,609.2 1462.6,608.8 1460.9,608.8M1442.2,635.1 1442.2,626.6 1445.1,626.6 1446.2,627 1446.5,627.4 1446.9,628.2 1446.9,629.4 1446.5,630.3 1446.2,630.7 1445.1,631.1 1442.2,631.1M1451.4,626.6 1451.4,635.1M1451.4,626.6 1454.3,626.6 1455.3,627 1455.7,627.4 1456.1,628.2 1456.1,629 1455.7,629.9 1455.3,630.3 1454.3,630.7M1451.4,630.7 1454.3,630.7 1455.3,631.1 1455.7,631.5 1456.1,632.3 1456.1,633.5 1455.7,634.3 1455.3,634.7 1454.3,635.1 1451.4,635.1M1459.5,628.2 1460.7,627.8 1462,626.6 1462,635.1M1459.5,635.1 1464.4,635.1M1441.9,652.9 1441.9,644.4 1444.8,644.4 1445.9,644.8 1446.2,645.2 1446.6,646 1446.6,647.2 1446.2,648.1 1445.9,648.5 1444.8,648.9 1441.9,648.9M1451.1,644.4 1451.1,652.9M1451.1,644.4 1454,644.4 1455,644.8 1455.4,645.2 1455.8,646 1455.8,646.8 1455.4,647.6 1455,648.1 1454,648.5M1451.1,648.5 1454,648.5 1455,648.9 1455.4,649.3 1455.8,650.1 1455.8,651.3 1455.4,652.1 1455,652.5 1454,652.9 1451.1,652.9M1459.1,646 1459.5,645.2 1460,644.8 1460.9,644.4 1462.6,644.4 1463.5,644.8 1464,645.2 1464.4,646 1464.4,646.8 1464,648.1 1459.1,652.9 1464.4,652.9M1441.9,670.7 1441.9,662.2 1444.8,662.2 1445.9,662.6 1446.2,663 1446.6,663.8 1446.6,665 1446.2,665.8 1445.9,666.3 1444.8,666.7 1441.9,666.7M1451.1,662.2 1451.1,670.7M1451.1,662.2 1454,662.2 1455,662.6 1455.4,663 1455.8,663.8 1455.8,664.6 1455.4,665.4 1455,665.8 1454,666.3M1451.1,666.3 1454,666.3 1455,666.7 1455.4,667.1 1455.8,667.9 1455.8,669.1 1455.4,669.9 1455,670.3 1454,670.7 1451.1,670.7M1459.1,662.2 1464.4,662.2 1461.3,665.4 1462.6,665.4 1463.5,665.8 1464,666.3 1464.4,667.1 1464.4,668.7 1464,669.5 1463.5,670.3 1462.6,670.7 1460.4,670.7 1459.5,670.3 1459.1,669.9M1441.7,688.5 1441.7,680 1444.6,680 1445.7,680.4 1446,680.8 1446.4,681.6 1446.4,682.8 1446,683.6 1445.7,684.1 1444.6,684.5 1441.7,684.5M1450.9,680 1450.9,688.5M1450.9,680 1453.8,680 1454.8,680.4 1455.2,680.8 1455.6,681.6 1455.6,682.4 1455.2,683.2 1454.8,683.6 1453.8,684.1M1450.9,684.1 1453.8,684.1 1454.8,684.5 1455.2,684.9 1455.6,685.7 1455.6,686.9 1455.2,687.7 1454.8,688.1 1453.8,688.5 1450.9,688.5M1463,682.8 1463,688.5M1461.1,680 1458.7,685.7 1464.4,685.7M1441.9,706.3 1441.9,697.8 1444.8,697.8 1445.9,698.2 1446.2,698.6 1446.6,699.4 1446.6,700.6 1446.2,701.4 1445.9,701.8 1444.8,702.3 1441.9,702.3M1451.1,697.8 1451.1,706.3M1451.1,697.8 1454,697.8 1455,698.2 1455.4,698.6 1455.8,699.4 1455.8,700.2 1455.4,701 1455,701.4 1454,701.8M1451.1,701.8 1454,701.8 1455,702.3 1455.4,702.7 1455.8,703.5 1455.8,704.7 1455.4,705.5 1455,705.9 1454,706.3 1451.1,706.3M1464,697.8 1459.5,697.8 1459.1,701.4 1459.5,701 1460.4,700.6 1462.6,700.6 1463.5,701 1464,701.4 1464.4,702.3 1464.4,704.3 1464,705.1 1463.5,705.9 1462.6,706.3 1460.4,706.3 1459.5,705.9 1459.1,705.5M1441.9,724.1 1441.9,715.6 1444.8,715.6 1445.9,716 1446.2,716.4 1446.6,717.2 1446.6,718.4 1446.2,719.2 1445.9,719.6 1444.8,720.1 1441.9,720.1M1451.1,715.6 1451.1,724.1M1451.1,715.6 1454,715.6 1455,716 1455.4,716.4 1455.8,717.2 1455.8,718 1455.4,718.8 1455,719.2 1454,719.6M1451.1,719.6 1454,719.6 1455,720.1 1455.4,720.5 1455.8,721.3 1455.8,722.5 1455.4,723.3 1455,723.7 1454,724.1 1451.1,724.1M1463.5,715.6 1461.8,715.6 1460.9,716 1460,716.8 1459.5,717.6 1459.1,719.2 1459.1,722.1 1459.5,723.3 1460,723.7 1460.9,724.1 1462.6,724.1 1463.5,723.7 1464,723.3 1464.4,722.1 1464.4,720.9 1464,719.6 1463.5,719.2 1462.6,718.8 1460.9,718.8 1460,719.2 1459.1,720.5M1441.7,741.9 1441.7,733.4 1444.6,733.4 1445.7,733.8 1446,734.2 1446.4,735 1446.4,736.2 1446,737 1445.7,737.4 1444.6,737.8 1441.7,737.8M1450.9,733.4 1450.9,741.9M1450.9,733.4 1453.8,733.4 1454.8,733.8 1455.2,734.2 1455.6,735 1455.6,735.8 1455.2,736.6 1454.8,737 1453.8,737.4M1450.9,737.4 1453.8,737.4 1454.8,737.8 1455.2,738.3 1455.6,739.1 1455.6,740.3 1455.2,741.1 1454.8,741.5 1453.8,741.9 1450.9,741.9M1458.7,733.4 1464.4,733.4 1460.8,741.9M1441.7,759.7 1441.7,751.2 1444.6,751.2 1445.7,751.6 1446,752 1446.4,752.8 1446.4,754 1446,754.8 1445.7,755.2 1444.6,755.6 1441.7,755.6M1450.9,751.2 1450.9,759.7M1450.9,751.2 1453.8,751.2 1454.8,751.6 1455.2,752 1455.6,752.8 1455.6,753.6 1455.2,754.4 1454.8,754.8 1453.8,755.2M1450.9,755.2 1453.8,755.2 1454.8,755.6 1455.2,756.1 1455.6,756.9 1455.6,758.1 1455.2,758.9 1454.8,759.3 1453.8,759.7 1450.9,759.7M1460.6,754.8 1459.6,754.4 1459.2,754 1458.9,753.2 1458.9,752.4 1459.4,751.6 1460.4,751.2 1462.7,751.2 1463.7,751.6 1464.2,752.4 1464.2,753.2 1463.9,754 1463.4,754.4 1462.5,754.8 1460.6,754.8 1459.6,755.2 1459.2,755.6 1458.7,756.5 1458.7,758.1 1459.2,758.9 1459.6,759.3 1460.6,759.7 1462.5,759.7 1463.4,759.3 1463.9,758.9 1464.4,758.1 1464.4,756.5 1463.9,755.6 1463.4,755.2 1462.5,754.8M1441.9,777.5 1441.9,769 1444.8,769 1445.9,769.4 1446.2,769.8 1446.6,770.6 1446.6,771.8 1446.2,772.6 1445.9,773 1444.8,773.4 1441.9,773.4M1451.1,769 1451.1,777.5M1451.1,769 1454,769 1455,769.4 1455.4,769.8 1455.8,770.6 1455.8,771.4 1455.4,772.2 1455,772.6 1454,773M1451.1,773 1454,773 1455,773.4 1455.4,773.8 1455.8,774.7 1455.8,775.9 1455.4,776.7 1455,777.1 1454,777.5 1451.1,777.5M1460,777.5 1461.8,777.5 1462.6,777.1 1463.5,776.3 1464,775.5 1464.4,773.8 1464.4,771 1464,769.8 1463.5,769.4 1462.6,769 1460.9,769 1460,769.4 1459.5,769.8 1459.1,771 1459.1,772.2 1459.5,773.4 1460,773.8 1460.9,774.3 1462.6,774.3 1463.5,773.8 1464.4,772.6M1433.6,795.3 1433.6,786.8 1436.5,786.8 1437.5,787.2 1437.9,787.6 1438.3,788.4 1438.3,789.6 1437.9,790.4 1437.5,790.8 1436.5,791.2 1433.6,791.2M1442.7,786.8 1442.7,795.3M1442.7,786.8 1445.6,786.8 1446.7,787.2 1447.1,787.6 1447.4,788.4 1447.4,789.2 1447.1,790 1446.7,790.4 1445.6,790.8M1442.7,790.8 1445.6,790.8 1446.7,791.2 1447.1,791.6 1447.4,792.5 1447.4,793.7 1447.1,794.5 1446.7,794.9 1445.6,795.3 1442.7,795.3M1450.9,788.4 1452.1,788 1453.3,786.8 1453.3,795.3M1450.9,795.3 1455.8,795.3M1460.9,786.8 1460,787.2 1459.5,788 1459.1,789.6 1459.1,792.5 1459.5,794.1 1460,794.9 1460.9,795.3 1462.6,795.3 1463.5,794.9 1464,794.1 1464.4,792.5 1464.4,789.6 1464,788 1463.5,787.2 1462.6,786.8 1460.9,786.8M1433.9,813.1 1433.9,804.6 1436.7,804.6 1437.8,805 1438.2,805.4 1438.5,806.2 1438.5,807.4 1438.2,808.2 1437.8,808.6 1436.7,809 1433.9,809M1443,804.6 1443,813.1M1443,804.6 1445.9,804.6 1447,805 1447.3,805.4 1447.7,806.2 1447.7,807 1447.3,807.8 1447,808.2 1445.9,808.6M1443,808.6 1445.9,808.6 1447,809 1447.3,809.4 1447.7,810.3 1447.7,811.5 1447.3,812.3 1447,812.7 1445.9,813.1 1443,813.1M1451.2,806.2 1452.4,805.8 1453.6,804.6 1453.6,813.1M1451.2,813.1 1456.1,813.1M1459.5,806.2 1460.7,805.8 1462,804.6 1462,813.1M1459.5,813.1 1464.4,813.1M1433.6,830.9 1433.6,822.3 1436.5,822.3 1437.5,822.8 1437.9,823.2 1438.3,824 1438.3,825.2 1437.9,826 1437.5,826.4 1436.5,826.8 1433.6,826.8M1442.7,822.3 1442.7,830.9M1442.7,822.3 1445.6,822.3 1446.7,822.8 1447.1,823.2 1447.4,824 1447.4,824.8 1447.1,825.6 1446.7,826 1445.6,826.4M1442.7,826.4 1445.6,826.4 1446.7,826.8 1447.1,827.2 1447.4,828 1447.4,829.3 1447.1,830.1 1446.7,830.5 1445.6,830.9 1442.7,830.9M1450.9,824 1452.1,823.6 1453.3,822.3 1453.3,830.9M1450.9,830.9 1455.8,830.9M1459.1,824 1459.5,823.2 1460,822.8 1460.9,822.3 1462.6,822.3 1463.5,822.8 1464,823.2 1464.4,824 1464.4,824.8 1464,826 1459.1,830.9 1464.4,830.9M1433.6,848.7 1433.6,840.1 1436.5,840.1 1437.5,840.6 1437.9,841 1438.3,841.8 1438.3,843 1437.9,843.8 1437.5,844.2 1436.5,844.6 1433.6,844.6M1442.7,840.1 1442.7,848.7M1442.7,840.1 1445.6,840.1 1446.7,840.6 1447.1,841 1447.4,841.8 1447.4,842.6 1447.1,843.4 1446.7,843.8 1445.6,844.2M1442.7,844.2 1445.6,844.2 1446.7,844.6 1447.1,845 1447.4,845.8 1447.4,847.1 1447.1,847.9 1446.7,848.3 1445.6,848.7 1442.7,848.7M1450.9,841.8 1452.1,841.4 1453.3,840.1 1453.3,848.7M1450.9,848.7 1455.8,848.7M1459.1,840.1 1464.4,840.1 1461.3,843.4 1462.6,843.4 1463.5,843.8 1464,844.2 1464.4,845 1464.4,846.7 1464,847.5 1463.5,848.3 1462.6,848.7 1460.4,848.7 1459.5,848.3 1459.1,847.9M1433.4,866.5 1433.4,857.9 1436.3,857.9 1437.3,858.3 1437.7,858.8 1438.1,859.6 1438.1,860.8 1437.7,861.6 1437.3,862 1436.3,862.4 1433.4,862.4M1442.5,857.9 1442.5,866.5M1442.5,857.9 1445.4,857.9 1446.5,858.3 1446.9,858.8 1447.2,859.6 1447.2,860.4 1446.9,861.2 1446.5,861.6 1445.4,862M1442.5,862 1445.4,862 1446.5,862.4 1446.9,862.8 1447.2,863.6 1447.2,864.9 1446.9,865.7 1446.5,866.1 1445.4,866.5 1442.5,866.5M1450.7,859.6 1451.9,859.2 1453.1,857.9 1453.1,866.5M1450.7,866.5 1455.6,866.5M1463,860.8 1463,866.5M1461.1,857.9 1458.7,863.6 1464.4,863.6M1433.6,884.3 1433.6,875.7 1436.5,875.7 1437.5,876.1 1437.9,876.6 1438.3,877.4 1438.3,878.6 1437.9,879.4 1437.5,879.8 1436.5,880.2 1433.6,880.2M1442.7,875.7 1442.7,884.3M1442.7,875.7 1445.6,875.7 1446.7,876.1 1447.1,876.6 1447.4,877.4 1447.4,878.2 1447.1,879 1446.7,879.4 1445.6,879.8M1442.7,879.8 1445.6,879.8 1446.7,880.2 1447.1,880.6 1447.4,881.4 1447.4,882.7 1447.1,883.5 1446.7,883.9 1445.6,884.3 1442.7,884.3M1450.9,877.4 1452.1,877 1453.3,875.7 1453.3,884.3M1450.9,884.3 1455.8,884.3M1464,875.7 1459.5,875.7 1459.1,879.4 1459.5,879 1460.4,878.6 1462.6,878.6 1463.5,879 1464,879.4 1464.4,880.2 1464.4,882.3 1464,883.1 1463.5,883.9 1462.6,884.3 1460.4,884.3 1459.5,883.9 1459.1,883.5M1441.5,919.9 1441.5,911.3 1444.4,911.3 1445.5,911.7 1445.8,912.1 1446.2,913 1446.2,914.2 1445.8,915 1445.5,915.4 1444.4,915.8 1441.5,915.8M1455.8,919.1 1455.4,919.5 1454.2,919.9 1453,919.9 1451.9,919.5 1451.1,918.7 1450.7,917 1450.7,914.2 1451.1,912.6 1451.9,911.7 1453,911.3 1454.2,911.3 1455.4,911.7 1455.8,912.1M1460.9,911.3 1460,911.7 1459.5,912.6 1459.1,914.2 1459.1,917 1459.5,918.7 1460,919.5 1460.9,919.9 1462.6,919.9 1463.5,919.5 1464,918.7 1464.4,917 1464.4,914.2 1464,912.6 1463.5,911.7 1462.6,911.3 1460.9,911.3M1441.8,937.7 1441.8,929.1 1444.7,929.1 1445.8,929.5 1446.1,929.9 1446.5,930.8 1446.5,932 1446.1,932.8 1445.8,933.2 1444.7,933.6 1441.8,933.6M1456.1,936.9 1455.7,937.3 1454.5,937.7 1453.3,937.7 1452.1,937.3 1451.4,936.5 1451,934.8 1451,932 1451.4,930.3 1452.1,929.5 1453.3,929.1 1454.5,929.1 1455.7,929.5 1456.1,929.9M1459.5,930.8 1460.7,930.3 1462,929.1 1462,937.7M1459.5,937.7 1464.4,937.7M1426.1,955.5 1426.1,946.9 1429,946.9 1430.1,947.3 1430.5,947.7 1430.8,948.5 1430.8,949.8 1430.5,950.6 1430.1,951 1429,951.4 1426.1,951.4M1440.4,954.7 1440,955.1 1438.8,955.5 1437.6,955.5 1436.5,955.1 1435.7,954.2 1435.3,952.6 1435.3,949.8 1435.7,948.1 1436.5,947.3 1437.6,946.9 1438.8,946.9 1440,947.3 1440.4,947.7M1443.7,948.5 1444.2,947.7 1444.6,947.3 1445.5,946.9 1447.2,946.9 1448.1,947.3 1448.6,947.7 1449,948.5 1449,949.4 1448.6,950.6 1443.7,955.5 1449,955.5M1450.6,956.7 1457.3,956.7M1464.4,954.7 1464,955.1 1462.8,955.5 1461.7,955.5 1460.5,955.1 1459.7,954.2 1459.3,952.6 1459.3,949.8 1459.7,948.1 1460.5,947.3 1461.7,946.9 1462.8,946.9 1464,947.3 1464.4,947.7M1426.1,973.3 1426.1,964.7 1429,964.7 1430.1,965.1 1430.5,965.5 1430.8,966.3 1430.8,967.6 1430.5,968.4 1430.1,968.8 1429,969.2 1426.1,969.2M1440.4,972.5 1440,972.9 1438.8,973.3 1437.6,973.3 1436.5,972.9 1435.7,972 1435.3,970.4 1435.3,967.6 1435.7,965.9 1436.5,965.1 1437.6,964.7 1438.8,964.7 1440,965.1 1440.4,965.5M1443.7,964.7 1449,964.7 1445.9,968 1447.2,968 1448.1,968.4 1448.6,968.8 1449,969.6 1449,971.2 1448.6,972 1448.1,972.9 1447.2,973.3 1445,973.3 1444.2,972.9 1443.7,972.5M1450.6,974.5 1457.3,974.5M1464.4,972.5 1464,972.9 1462.8,973.3 1461.7,973.3 1460.5,972.9 1459.7,972 1459.3,970.4 1459.3,967.6 1459.7,965.9 1460.5,965.1 1461.7,964.7 1462.8,964.7 1464,965.1 1464.4,965.5M1441.3,991.1 1441.3,982.5 1444.2,982.5 1445.3,982.9 1445.6,983.3 1446,984.1 1446,985.4 1445.6,986.2 1445.3,986.6 1444.2,987 1441.3,987M1455.6,990.2 1455.2,990.7 1454,991.1 1452.8,991.1 1451.7,990.7 1450.9,989.8 1450.5,988.2 1450.5,985.4 1450.9,983.7 1451.7,982.9 1452.8,982.5 1454,982.5 1455.2,982.9 1455.6,983.3M1463,985.4 1463,991.1M1461.1,982.5 1458.7,988.2 1464.4,988.2M1441.5,1008.9 1441.5,1000.3 1444.4,1000.3 1445.5,1000.7 1445.8,1001.1 1446.2,1001.9 1446.2,1003.2 1445.8,1004 1445.5,1004.4 1444.4,1004.8 1441.5,1004.8M1455.8,1008 1455.4,1008.5 1454.2,1008.9 1453,1008.9 1451.9,1008.5 1451.1,1007.6 1450.7,1006 1450.7,1003.2 1451.1,1001.5 1451.9,1000.7 1453,1000.3 1454.2,1000.3 1455.4,1000.7 1455.8,1001.1M1464,1000.3 1459.5,1000.3 1459.1,1004 1459.5,1003.6 1460.4,1003.2 1462.6,1003.2 1463.5,1003.6 1464,1004 1464.4,1004.8 1464.4,1006.8 1464,1007.6 1463.5,1008.5 1462.6,1008.9 1460.4,1008.9 1459.5,1008.5 1459.1,1008M1441.5,1026.7 1441.5,1018.1 1444.4,1018.1 1445.5,1018.5 1445.8,1018.9 1446.2,1019.7 1446.2,1021 1445.8,1021.8 1445.5,1022.2 1444.4,1022.6 1441.5,1022.6M1455.8,1025.8 1455.4,1026.2 1454.2,1026.7 1453,1026.7 1451.9,1026.2 1451.1,1025.4 1450.7,1023.8 1450.7,1021 1451.1,1019.3 1451.9,1018.5 1453,1018.1 1454.2,1018.1 1455.4,1018.5 1455.8,1018.9M1463.5,1018.1 1461.8,1018.1 1460.9,1018.5 1460,1019.3 1459.5,1020.1 1459.1,1021.8 1459.1,1024.6 1459.5,1025.8 1460,1026.2 1460.9,1026.7 1462.6,1026.7 1463.5,1026.2 1464,1025.8 1464.4,1024.6 1464.4,1023.4 1464,1022.2 1463.5,1021.8 1462.6,1021.4 1460.9,1021.4 1460,1021.8 1459.1,1023M1441.3,1044.5 1441.3,1035.9 1444.2,1035.9 1445.3,1036.3 1445.6,1036.7 1446,1037.5 1446,1038.8 1445.6,1039.6 1445.3,1040 1444.2,1040.4 1441.3,1040.4M1455.6,1043.6 1455.2,1044 1454,1044.5 1452.8,1044.5 1451.7,1044 1450.9,1043.2 1450.5,1041.6 1450.5,1038.8 1450.9,1037.1 1451.7,1036.3 1452.8,1035.9 1454,1035.9 1455.2,1036.3 1455.6,1036.7M1458.7,1035.9 1464.4,1035.9 1460.8,1044.5M1441.3,1062.2 1441.3,1053.7 1444.2,1053.7 1445.3,1054.1 1445.6,1054.5 1446,1055.3 1446,1056.5 1445.6,1057.4 1445.3,1057.8 1444.2,1058.2 1441.3,1058.2M1455.6,1061.4 1455.2,1061.8 1454,1062.2 1452.8,1062.2 1451.7,1061.8 1450.9,1061 1450.5,1059.4 1450.5,1056.5 1450.9,1054.9 1451.7,1054.1 1452.8,1053.7 1454,1053.7 1455.2,1054.1 1455.6,1054.5M1460.6,1057.4 1459.6,1057 1459.2,1056.5 1458.9,1055.7 1458.9,1054.9 1459.4,1054.1 1460.4,1053.7 1462.7,1053.7 1463.7,1054.1 1464.2,1054.9 1464.2,1055.7 1463.9,1056.5 1463.4,1057 1462.5,1057.4 1460.6,1057.4 1459.6,1057.8 1459.2,1058.2 1458.7,1059 1458.7,1060.6 1459.2,1061.4 1459.6,1061.8 1460.6,1062.2 1462.5,1062.2 1463.4,1061.8 1463.9,1061.4 1464.4,1060.6 1464.4,1059 1463.9,1058.2 1463.4,1057.8 1462.5,1057.4M1441.5,1080 1441.5,1071.5 1444.4,1071.5 1445.5,1071.9 1445.8,1072.3 1446.2,1073.1 1446.2,1074.3 1445.8,1075.2 1445.5,1075.6 1444.4,1076 1441.5,1076M1455.8,1079.2 1455.4,1079.6 1454.2,1080 1453,1080 1451.9,1079.6 1451.1,1078.8 1450.7,1077.2 1450.7,1074.3 1451.1,1072.7 1451.9,1071.9 1453,1071.5 1454.2,1071.5 1455.4,1071.9 1455.8,1072.3M1460,1080 1461.8,1080 1462.6,1079.6 1463.5,1078.8 1464,1078 1464.4,1076.4 1464.4,1073.5 1464,1072.3 1463.5,1071.9 1462.6,1071.5 1460.9,1071.5 1460,1071.9 1459.5,1072.3 1459.1,1073.5 1459.1,1074.8 1459.5,1076 1460,1076.4 1460.9,1076.8 1462.6,1076.8 1463.5,1076.4 1464.4,1075.2M1433.2,1097.8 1433.2,1089.3 1436.1,1089.3 1437.1,1089.7 1437.5,1090.1 1437.9,1090.9 1437.9,1092.1 1437.5,1093 1437.1,1093.4 1436.1,1093.8 1433.2,1093.8M1447.4,1097 1447,1097.4 1445.9,1097.8 1444.7,1097.8 1443.5,1097.4 1442.7,1096.6 1442.3,1095 1442.3,1092.1 1442.7,1090.5 1443.5,1089.7 1444.7,1089.3 1445.9,1089.3 1447,1089.7 1447.4,1090.1M1450.9,1090.9 1452.1,1090.5 1453.3,1089.3 1453.3,1097.8M1450.9,1097.8 1455.8,1097.8M1460.9,1089.3 1460,1089.7 1459.5,1090.5 1459.1,1092.1 1459.1,1095 1459.5,1096.6 1460,1097.4 1460.9,1097.8 1462.6,1097.8 1463.5,1097.4 1464,1096.6 1464.4,1095 1464.4,1092.1 1464,1090.5 1463.5,1089.7 1462.6,1089.3 1460.9,1089.3M1433.5,1115.6 1433.5,1107.1 1436.3,1107.1 1437.4,1107.5 1437.8,1107.9 1438.1,1108.7 1438.1,1109.9 1437.8,1110.7 1437.4,1111.2 1436.3,1111.6 1433.5,1111.6M1447.7,1114.8 1447.3,1115.2 1446.1,1115.6 1445,1115.6 1443.8,1115.2 1443,1114.4 1442.6,1112.8 1442.6,1109.9 1443,1108.3 1443.8,1107.5 1445,1107.1 1446.1,1107.1 1447.3,1107.5 1447.7,1107.9M1451.2,1108.7 1452.4,1108.3 1453.6,1107.1 1453.6,1115.6M1451.2,1115.6 1456.1,1115.6M1459.5,1108.7 1460.7,1108.3 1462,1107.1 1462,1115.6M1459.5,1115.6 1464.4,1115.6M1433.2,1133.4 1433.2,1124.9 1436.1,1124.9 1437.1,1125.3 1437.5,1125.7 1437.9,1126.5 1437.9,1127.7 1437.5,1128.5 1437.1,1129 1436.1,1129.4 1433.2,1129.4M1447.4,1132.6 1447,1133 1445.9,1133.4 1444.7,1133.4 1443.5,1133 1442.7,1132.2 1442.3,1130.6 1442.3,1127.7 1442.7,1126.1 1443.5,1125.3 1444.7,1124.9 1445.9,1124.9 1447,1125.3 1447.4,1125.7M1450.9,1126.5 1452.1,1126.1 1453.3,1124.9 1453.3,1133.4M1450.9,1133.4 1455.8,1133.4M1459.1,1126.5 1459.5,1125.7 1460,1125.3 1460.9,1124.9 1462.6,1124.9 1463.5,1125.3 1464,1125.7 1464.4,1126.5 1464.4,1127.3 1464,1128.5 1459.1,1133.4 1464.4,1133.4M1433.2,1151.2 1433.2,1142.7 1436.1,1142.7 1437.1,1143.1 1437.5,1143.5 1437.9,1144.3 1437.9,1145.5 1437.5,1146.3 1437.1,1146.7 1436.1,1147.2 1433.2,1147.2M1447.4,1150.4 1447,1150.8 1445.9,1151.2 1444.7,1151.2 1443.5,1150.8 1442.7,1150 1442.3,1148.4 1442.3,1145.5 1442.7,1143.9 1443.5,1143.1 1444.7,1142.7 1445.9,1142.7 1447,1143.1 1447.4,1143.5M1450.9,1144.3 1452.1,1143.9 1453.3,1142.7 1453.3,1151.2M1450.9,1151.2 1455.8,1151.2M1459.1,1142.7 1464.4,1142.7 1461.3,1145.9 1462.6,1145.9 1463.5,1146.3 1464,1146.7 1464.4,1147.6 1464.4,1149.2 1464,1150 1463.5,1150.8 1462.6,1151.2 1460.4,1151.2 1459.5,1150.8 1459.1,1150.4M1433,1169 1433,1160.5 1435.8,1160.5 1436.9,1160.9 1437.3,1161.3 1437.7,1162.1 1437.7,1163.3 1437.3,1164.1 1436.9,1164.5 1435.8,1165 1433,1165M1447.2,1168.2 1446.8,1168.6 1445.7,1169 1444.5,1169 1443.3,1168.6 1442.5,1167.8 1442.1,1166.2 1442.1,1163.3 1442.5,1161.7 1443.3,1160.9 1444.5,1160.5 1445.7,1160.5 1446.8,1160.9 1447.2,1161.3M1450.7,1162.1 1451.9,1161.7 1453.1,1160.5 1453.1,1169M1450.7,1169 1455.6,1169M1463,1163.3 1463,1169M1461.1,1160.5 1458.7,1166.2 1464.4,1166.2M1433.2,1186.8 1433.2,1178.3 1436.1,1178.3 1437.1,1178.7 1437.5,1179.1 1437.9,1179.9 1437.9,1181.1 1437.5,1181.9 1437.1,1182.3 1436.1,1182.7 1433.2,1182.7M1447.4,1186 1447,1186.4 1445.9,1186.8 1444.7,1186.8 1443.5,1186.4 1442.7,1185.6 1442.3,1184 1442.3,1181.1 1442.7,1179.5 1443.5,1178.7 1444.7,1178.3 1445.9,1178.3 1447,1178.7 1447.4,1179.1M1450.9,1179.9 1452.1,1179.5 1453.3,1178.3 1453.3,1186.8M1450.9,1186.8 1455.8,1186.8M1464,1178.3 1459.5,1178.3 1459.1,1181.9 1459.5,1181.5 1460.4,1181.1 1462.6,1181.1 1463.5,1181.5 1464,1181.9 1464.4,1182.7 1464.4,1184.8 1464,1185.6 1463.5,1186.4 1462.6,1186.8 1460.4,1186.8 1459.5,1186.4 1459.1,1186M1289.2,309.7 1297.8,306.8 1289.2,303.9M1289.2,300.6 1297.8,300.6M1289.2,300.6 1289.2,297.7 1289.6,296.6 1290,296.3 1290.8,295.9 1291.6,295.9 1292.5,296.3 1292.9,296.6 1293.3,297.7M1293.3,300.6 1293.3,297.7 1293.7,296.6 1294.1,296.3 1294.9,295.9 1296.1,295.9 1296.9,296.3 1297.3,296.6 1297.8,297.7 1297.8,300.6M1297.8,293.2 1289.2,290.3 1297.8,287.5M1294.9,292.1 1294.9,288.5M1289.2,282.8 1297.8,282.8M1289.2,285.1 1289.2,280.4M1307,303.7 1315.5,300.8 1307,297.9M1307,294.6 1315.5,294.6M1307,294.6 1307,291.9 1307.4,290.8 1308.4,290 1309.8,289.6 1312.7,289.6 1314.1,290 1315.1,290.8 1315.5,291.9 1315.5,294.6M1307,285.4 1315.5,285.4M1307,285.4 1307,282.7 1307.4,281.6 1308.4,280.8 1309.8,280.4 1312.7,280.4 1314.1,280.8 1315.1,281.6 1315.5,282.7 1315.5,285.4M1324.8,303.7 1333.3,300.8 1324.8,297.9M1324.8,294.6 1333.3,294.6M1324.8,294.6 1324.8,291.9 1325.2,290.8 1326.2,290 1327.6,289.6 1330.5,289.6 1331.9,290 1332.9,290.8 1333.3,291.9 1333.3,294.6M1324.8,285.4 1333.3,285.4M1324.8,285.4 1324.8,282.7 1325.2,281.6 1326.2,280.8 1327.6,280.4 1330.5,280.4 1331.9,280.8 1332.9,281.6 1333.3,282.7 1333.3,285.4M1342.6,303.7 1351.1,300.8 1342.6,297.9M1342.6,294.6 1351.1,294.6M1342.6,294.6 1342.6,291.9 1343,290.8 1344,290 1345.4,289.6 1348.3,289.6 1349.7,290 1350.7,290.8 1351.1,291.9 1351.1,294.6M1342.6,285.4 1351.1,285.4M1342.6,285.4 1342.6,282.7 1343,281.6 1344,280.8 1345.4,280.4 1348.3,280.4 1349.7,280.8 1350.7,281.6 1351.1,282.7 1351.1,285.4M1360.3,303.7 1368.9,300.8 1360.3,297.9M1360.3,294.6 1368.9,294.6M1360.3,294.6 1360.3,291.9 1360.7,290.8 1361.8,290 1363.2,289.6 1366,289.6 1367.5,290 1368.5,290.8 1368.9,291.9 1368.9,294.6M1360.3,285.4 1368.9,285.4M1360.3,285.4 1360.3,282.7 1360.7,281.6 1361.8,280.8 1363.2,280.4 1366,280.4 1367.5,280.8 1368.5,281.6 1368.9,282.7 1368.9,285.4M1378.1,303.7 1386.7,300.8 1378.1,297.9M1378.1,294.6 1386.7,294.6M1378.1,294.6 1378.1,291.9 1378.5,290.8 1379.5,290 1381,289.6 1383.8,289.6 1385.2,290 1386.3,290.8 1386.7,291.9 1386.7,294.6M1378.1,285.4 1386.7,285.4M1378.1,285.4 1378.1,282.7 1378.5,281.6 1379.5,280.8 1381,280.4 1383.8,280.4 1385.2,280.8 1386.3,281.6 1386.7,282.7 1386.7,285.4M1395.9,312.5 1404.4,309.6 1395.9,306.7M1395.9,303.4 1404.4,303.4M1395.9,303.4 1395.9,300.7 1396.3,299.6 1397.3,298.8 1398.7,298.4 1401.6,298.4 1403,298.8 1404,299.6 1404.4,300.7 1404.4,303.4M1395.9,294.2 1404.4,294.2M1395.9,294.2 1395.9,291.5 1396.3,290.4 1397.3,289.6 1398.7,289.2 1401.6,289.2 1403,289.6 1404,290.4 1404.4,291.5 1404.4,294.2M1404.4,286.1 1395.9,283.3 1404.4,280.4M1401.6,285.1 1401.6,281.5M1342.6,1211.5 1351.1,1208.6 1342.6,1205.7M1350.7,1202.6 1351.1,1201.4 1351.1,1199.4 1350.7,1198.6 1350.3,1198.2 1349.5,1197.7 1348.7,1197.7 1347.8,1198.2 1347.4,1198.6 1347,1199.4 1346.2,1201.4 1345.8,1202.2 1345,1202.6 1344.2,1202.6 1343.4,1202.2 1343,1201.8 1342.6,1201 1342.6,1199 1343,1197.7M1350.7,1193.9 1351.1,1192.7 1351.1,1190.6 1350.7,1189.8 1350.3,1189.4 1349.5,1189 1348.7,1189 1347.8,1189.4 1347.4,1189.8 1347,1190.6 1346.2,1192.7 1345.8,1193.5 1345,1193.9 1344.2,1193.9 1343.4,1193.5 1343,1193.1 1342.6,1192.3 1342.6,1190.2 1343,1189M1360.3,1211.5 1368.9,1208.6 1360.3,1205.7M1368.5,1202.6 1368.9,1201.4 1368.9,1199.4 1368.5,1198.6 1368.1,1198.2 1367.3,1197.7 1366.4,1197.7 1365.6,1198.2 1365.2,1198.6 1364.8,1199.4 1364,1201.4 1363.6,1202.2 1362.8,1202.6 1362,1202.6 1361.1,1202.2 1360.7,1201.8 1360.3,1201 1360.3,1199 1360.7,1197.7M1368.5,1193.9 1368.9,1192.7 1368.9,1190.6 1368.5,1189.8 1368.1,1189.4 1367.3,1189 1366.4,1189 1365.6,1189.4 1365.2,1189.8 1364.8,1190.6 1364,1192.7 1363.6,1193.5 1362.8,1193.9 1362,1193.9 1361.1,1193.5 1360.7,1193.1 1360.3,1192.3 1360.3,1190.2 1360.7,1189M1368.9,1186 1360.3,1183.2 1368.9,1180.3M1366,1185 1366,1181.4M1382.4,1231 1382.4,1237.5 1382.8,1238.7 1383.2,1239.1 1383.9,1239.5 1385.8,1239.5 1386.5,1239.1 1386.9,1238.7 1387.3,1237.5 1387.3,1231M1391.2,1232.6 1392.4,1232.2 1393.6,1231 1393.6,1239.5M1391.2,1239.5 1396,1239.5" fill="none" stroke="#006464" stroke-width="1.15" stroke-linecap="round" stroke-linejoin="round"/>
<path d="M1197.5,300.8 1198.7,300.4 1199.9,299.2 1199.9,307.7M1197.5,307.7 1202.4,307.7M1209.8,302 1209.8,307.7M1207.9,299.2 1205.5,304.9 1211.2,304.9M1198.3,343.3 1200.1,343.3 1201,342.9 1201.8,342.1 1202.3,341.3 1202.7,339.7 1202.7,336.8 1202.3,335.6 1201.8,335.2 1201,334.8 1199.2,334.8 1198.3,335.2 1197.9,335.6 1197.4,336.8 1197.4,338 1197.9,339.3 1198.3,339.7 1199.2,340.1 1201,340.1 1201.8,339.7 1202.7,338.4M1209.8,337.6 1209.8,343.3M1207.9,334.8 1205.6,340.5 1211.3,340.5M1197.5,372 1198,371.2 1198.4,370.8 1199.3,370.4 1201.1,370.4 1201.9,370.8 1202.4,371.2 1202.8,372 1202.8,372.8 1202.4,374 1197.5,378.9 1202.8,378.9M1207.6,370.4 1206.8,370.8 1206.3,371.6 1205.9,373.2 1205.9,376.1 1206.3,377.7 1206.8,378.5 1207.6,378.9 1209.4,378.9 1210.3,378.5 1210.7,377.7 1211.2,376.1 1211.2,373.2 1210.7,371.6 1210.3,370.8 1209.4,370.4 1207.6,370.4M1197.6,407.6 1198.8,407.2 1200,406 1200,414.5M1197.6,414.5 1202.5,414.5M1205.8,407.6 1206.3,406.8 1206.7,406.4 1207.6,406 1209.3,406 1210.2,406.4 1210.7,406.8 1211.1,407.6 1211.1,408.4 1210.7,409.6 1205.8,414.5 1211.1,414.5M1197.6,425.4 1198.8,425 1200,423.8 1200,432.3M1197.6,432.3 1202.5,432.3M1205.8,423.8 1211.1,423.8 1208,427 1209.3,427 1210.2,427.4 1210.7,427.8 1211.1,428.6 1211.1,430.3 1210.7,431.1 1210.2,431.9 1209.3,432.3 1207.1,432.3 1206.3,431.9 1205.8,431.5M1198.3,467.9 1200.1,467.9 1201,467.5 1201.8,466.7 1202.3,465.9 1202.7,464.2 1202.7,461.4 1202.3,460.2 1201.8,459.8 1201,459.4 1199.2,459.4 1198.3,459.8 1197.9,460.2 1197.4,461.4 1197.4,462.6 1197.9,463.8 1198.3,464.2 1199.2,464.6 1201,464.6 1201.8,464.2 1202.7,463M1205.6,459.4 1211.3,459.4 1207.7,467.9M1198.3,485.7 1200.1,485.7 1201,485.3 1201.8,484.5 1202.3,483.7 1202.7,482 1202.7,479.2 1202.3,478 1201.8,477.6 1201,477.1 1199.2,477.1 1198.3,477.6 1197.9,478 1197.4,479.2 1197.4,480.4 1197.9,481.6 1198.3,482 1199.2,482.4 1201,482.4 1201.8,482 1202.7,480.8M1207.5,480.8 1206.5,480.4 1206,480 1205.8,479.2 1205.8,478.4 1206.3,477.6 1207.2,477.1 1209.6,477.1 1210.6,477.6 1211,478.4 1211,479.2 1210.8,480 1210.3,480.4 1209.4,480.8 1207.5,480.8 1206.5,481.2 1206,481.6 1205.6,482.4 1205.6,484.1 1206,484.9 1206.5,485.3 1207.5,485.7 1209.4,485.7 1210.3,485.3 1210.8,484.9 1211.3,484.1 1211.3,482.4 1210.8,481.6 1210.3,481.2 1209.4,480.8M1201.9,496.6 1203.1,496.2 1204.3,494.9 1204.3,503.5M1201.9,503.5 1206.8,503.5M1201.7,514.4 1202.1,513.6 1202.6,513.1 1203.5,512.7 1205.2,512.7 1206.1,513.1 1206.6,513.6 1207,514.4 1207,515.2 1206.6,516.4 1201.7,521.3 1207,521.3M1201.7,530.5 1207,530.5 1203.9,533.8 1205.2,533.8 1206.1,534.2 1206.6,534.6 1207,535.4 1207,537.1 1206.6,537.9 1206.1,538.7 1205.2,539.1 1203,539.1 1202.1,538.7 1201.7,538.3M1205.8,551.2 1205.8,556.9M1203.9,548.3 1201.5,554 1207.2,554M1206.6,566.1 1202.1,566.1 1201.7,569.8 1202.1,569.4 1203,569 1205.2,569 1206.1,569.4 1206.6,569.8 1207,570.6 1207,572.6 1206.6,573.5 1206.1,574.3 1205.2,574.7 1203,574.7 1202.1,574.3 1201.7,573.9M1197.4,583.9 1202.7,583.9 1199.6,587.2 1201,587.2 1201.8,587.6 1202.3,588 1202.7,588.8 1202.7,590.4 1202.3,591.3 1201.8,592.1 1201,592.5 1198.8,592.5 1197.9,592.1 1197.4,591.7M1205.6,583.9 1211.3,583.9 1207.7,592.5M1197.4,601.7 1202.7,601.7 1199.6,605 1201,605 1201.8,605.4 1202.3,605.8 1202.7,606.6 1202.7,608.2 1202.3,609.1 1201.8,609.9 1201,610.3 1198.8,610.3 1197.9,609.9 1197.4,609.5M1207.5,605.4 1206.5,605 1206,604.6 1205.8,603.8 1205.8,602.9 1206.3,602.1 1207.2,601.7 1209.6,601.7 1210.6,602.1 1211,602.9 1211,603.8 1210.8,604.6 1210.3,605 1209.4,605.4 1207.5,605.4 1206.5,605.8 1206,606.2 1205.6,607 1205.6,608.6 1206,609.5 1206.5,609.9 1207.5,610.3 1209.4,610.3 1210.3,609.9 1210.8,609.5 1211.3,608.6 1211.3,607 1210.8,606.2 1210.3,605.8 1209.4,605.4M1197.5,619.5 1202.8,619.5 1199.7,622.8 1201.1,622.8 1201.9,623.2 1202.4,623.6 1202.8,624.4 1202.8,626 1202.4,626.8 1201.9,627.7 1201.1,628.1 1198.9,628.1 1198,627.7 1197.5,627.3M1206.8,628.1 1208.5,628.1 1209.4,627.7 1210.3,626.8 1210.7,626 1211.2,624.4 1211.2,621.6 1210.7,620.3 1210.3,619.9 1209.4,619.5 1207.6,619.5 1206.8,619.9 1206.3,620.3 1205.9,621.6 1205.9,622.8 1206.3,624 1206.8,624.4 1207.6,624.8 1209.4,624.8 1210.3,624.4 1211.2,623.2M1201.7,640.2 1201.7,645.9M1199.8,637.3 1197.4,643 1203.1,643M1207.7,637.3 1206.9,637.7 1206.4,638.5 1206,640.2 1206,643 1206.4,644.6 1206.9,645.5 1207.7,645.9 1209.5,645.9 1210.4,645.5 1210.8,644.6 1211.3,643 1211.3,640.2 1210.8,638.5 1210.4,637.7 1209.5,637.3 1207.7,637.3M1201.8,658 1201.8,663.7M1199.9,655.1 1197.6,660.8 1203.3,660.8M1206.2,656.7 1207.5,656.3 1208.7,655.1 1208.7,663.7M1206.2,663.7 1211.1,663.7M1201.7,675.8 1201.7,681.5M1199.8,672.9 1197.4,678.6 1203.1,678.6M1206,674.5 1206.4,673.7 1206.9,673.3 1207.7,672.9 1209.5,672.9 1210.4,673.3 1210.8,673.7 1211.3,674.5 1211.3,675.3 1210.8,676.6 1206,681.5 1211.3,681.5M1201.7,693.6 1201.7,699.3M1199.8,690.7 1197.4,696.4 1203.1,696.4M1206,690.7 1211.3,690.7 1208.2,694 1209.5,694 1210.4,694.4 1210.8,694.8 1211.3,695.6 1211.3,697.2 1210.8,698 1210.4,698.8 1209.5,699.3 1207.3,699.3 1206.4,698.8 1206,698.4M1201.6,711.3 1201.6,717M1199.7,708.5 1197.3,714.2 1203,714.2M1209.9,711.3 1209.9,717M1208,708.5 1205.7,714.2 1211.4,714.2M1201.7,729.1 1201.7,734.8M1199.8,726.3 1197.4,732 1203.1,732M1210.8,726.3 1206.4,726.3 1206,730 1206.4,729.6 1207.3,729.1 1209.5,729.1 1210.4,729.6 1210.8,730 1211.3,730.8 1211.3,732.8 1210.8,733.6 1210.4,734.4 1209.5,734.8 1207.3,734.8 1206.4,734.4 1206,734M1199.5,765.6 1198.5,765.1 1198,764.7 1197.8,763.9 1197.8,763.1 1198.3,762.3 1199.2,761.9 1201.6,761.9 1202.6,762.3 1203,763.1 1203,763.9 1202.8,764.7 1202.3,765.1 1201.4,765.6 1199.5,765.6 1198.5,766 1198,766.4 1197.6,767.2 1197.6,768.8 1198,769.6 1198.5,770 1199.5,770.4 1201.4,770.4 1202.3,770 1202.8,769.6 1203.3,768.8 1203.3,767.2 1202.8,766.4 1202.3,766 1201.4,765.6M1206.2,763.5 1207.5,763.1 1208.7,761.9 1208.7,770.4M1206.2,770.4 1211.1,770.4M1199.3,783.3 1198.4,782.9 1197.9,782.5 1197.7,781.7 1197.7,780.9 1198.1,780.1 1199.1,779.7 1201.5,779.7 1202.4,780.1 1202.9,780.9 1202.9,781.7 1202.7,782.5 1202.2,782.9 1201.2,783.3 1199.3,783.3 1198.4,783.8 1197.9,784.2 1197.4,785 1197.4,786.6 1197.9,787.4 1198.4,787.8 1199.3,788.2 1201.2,788.2 1202.2,787.8 1202.7,787.4 1203.1,786.6 1203.1,785 1202.7,784.2 1202.2,783.8 1201.2,783.3M1206,781.3 1206.4,780.5 1206.9,780.1 1207.7,779.7 1209.5,779.7 1210.4,780.1 1210.8,780.5 1211.3,781.3 1211.3,782.1 1210.8,783.3 1206,788.2 1211.3,788.2M1199.3,801.1 1198.4,800.7 1197.9,800.3 1197.7,799.5 1197.7,798.7 1198.1,797.9 1199.1,797.5 1201.5,797.5 1202.4,797.9 1202.9,798.7 1202.9,799.5 1202.7,800.3 1202.2,800.7 1201.2,801.1 1199.3,801.1 1198.4,801.5 1197.9,802 1197.4,802.8 1197.4,804.4 1197.9,805.2 1198.4,805.6 1199.3,806 1201.2,806 1202.2,805.6 1202.7,805.2 1203.1,804.4 1203.1,802.8 1202.7,802 1202.2,801.5 1201.2,801.1M1206,797.5 1211.3,797.5 1208.2,800.7 1209.5,800.7 1210.4,801.1 1210.8,801.5 1211.3,802.4 1211.3,804 1210.8,804.8 1210.4,805.6 1209.5,806 1207.3,806 1206.4,805.6 1206,805.2M1199.2,818.9 1198.3,818.5 1197.8,818.1 1197.6,817.3 1197.6,816.5 1198,815.7 1199,815.3 1201.4,815.3 1202.3,815.7 1202.8,816.5 1202.8,817.3 1202.6,818.1 1202.1,818.5 1201.1,818.9 1199.2,818.9 1198.3,819.3 1197.8,819.8 1197.3,820.6 1197.3,822.2 1197.8,823 1198.3,823.4 1199.2,823.8 1201.1,823.8 1202.1,823.4 1202.6,823 1203,822.2 1203,820.6 1202.6,819.8 1202.1,819.3 1201.1,818.9M1209.9,818.1 1209.9,823.8M1208,815.3 1205.7,821 1211.4,821M1199.3,836.7 1198.4,836.3 1197.9,835.9 1197.7,835.1 1197.7,834.3 1198.1,833.5 1199.1,833.1 1201.5,833.1 1202.4,833.5 1202.9,834.3 1202.9,835.1 1202.7,835.9 1202.2,836.3 1201.2,836.7 1199.3,836.7 1198.4,837.1 1197.9,837.5 1197.4,838.4 1197.4,840 1197.9,840.8 1198.4,841.2 1199.3,841.6 1201.2,841.6 1202.2,841.2 1202.7,840.8 1203.1,840 1203.1,838.4 1202.7,837.5 1202.2,837.1 1201.2,836.7M1210.8,833.1 1206.4,833.1 1206,836.7 1206.4,836.3 1207.3,835.9 1209.5,835.9 1210.4,836.3 1210.8,836.7 1211.3,837.5 1211.3,839.6 1210.8,840.4 1210.4,841.2 1209.5,841.6 1207.3,841.6 1206.4,841.2 1206,840.8M1199.3,854.5 1198.4,854.1 1197.9,853.7 1197.7,852.9 1197.7,852.1 1198.1,851.3 1199.1,850.9 1201.5,850.9 1202.4,851.3 1202.9,852.1 1202.9,852.9 1202.7,853.7 1202.2,854.1 1201.2,854.5 1199.3,854.5 1198.4,854.9 1197.9,855.3 1197.4,856.2 1197.4,857.8 1197.9,858.6 1198.4,859 1199.3,859.4 1201.2,859.4 1202.2,859 1202.7,858.6 1203.1,857.8 1203.1,856.2 1202.7,855.3 1202.2,854.9 1201.2,854.5M1210.4,850.9 1208.6,850.9 1207.7,851.3 1206.9,852.1 1206.4,852.9 1206,854.5 1206,857.4 1206.4,858.6 1206.9,859 1207.7,859.4 1209.5,859.4 1210.4,859 1210.8,858.6 1211.3,857.4 1211.3,856.2 1210.8,854.9 1210.4,854.5 1209.5,854.1 1207.7,854.1 1206.9,854.5 1206,855.8M1199.2,872.3 1198.3,871.9 1197.8,871.5 1197.6,870.7 1197.6,869.9 1198,869.1 1199,868.7 1201.4,868.7 1202.3,869.1 1202.8,869.9 1202.8,870.7 1202.6,871.5 1202.1,871.9 1201.1,872.3 1199.2,872.3 1198.3,872.7 1197.8,873.1 1197.3,874 1197.3,875.6 1197.8,876.4 1198.3,876.8 1199.2,877.2 1201.1,877.2 1202.1,876.8 1202.6,876.4 1203,875.6 1203,874 1202.6,873.1 1202.1,872.7 1201.1,872.3M1205.7,868.7 1211.4,868.7 1207.8,877.2M1199.2,890.1 1198.3,889.7 1197.8,889.3 1197.6,888.5 1197.6,887.7 1198,886.9 1199,886.5 1201.4,886.5 1202.3,886.9 1202.8,887.7 1202.8,888.5 1202.6,889.3 1202.1,889.7 1201.1,890.1 1199.2,890.1 1198.3,890.5 1197.8,890.9 1197.3,891.8 1197.3,893.4 1197.8,894.2 1198.3,894.6 1199.2,895 1201.1,895 1202.1,894.6 1202.6,894.2 1203,893.4 1203,891.8 1202.6,890.9 1202.1,890.5 1201.1,890.1M1207.6,890.1 1206.6,889.7 1206.1,889.3 1205.9,888.5 1205.9,887.7 1206.4,886.9 1207.3,886.5 1209.7,886.5 1210.7,886.9 1211.1,887.7 1211.1,888.5 1210.9,889.3 1210.4,889.7 1209.5,890.1 1207.6,890.1 1206.6,890.5 1206.1,890.9 1205.7,891.8 1205.7,893.4 1206.1,894.2 1206.6,894.6 1207.6,895 1209.5,895 1210.4,894.6 1210.9,894.2 1211.4,893.4 1211.4,891.8 1210.9,890.9 1210.4,890.5 1209.5,890.1M1202.4,904.3 1198,904.3 1197.5,907.9 1198,907.5 1198.9,907.1 1201.1,907.1 1201.9,907.5 1202.4,907.9 1202.8,908.7 1202.8,910.8 1202.4,911.6 1201.9,912.4 1201.1,912.8 1198.9,912.8 1198,912.4 1197.5,912M1210.7,904.3 1206.3,904.3 1205.9,907.9 1206.3,907.5 1207.2,907.1 1209.4,907.1 1210.3,907.5 1210.7,907.9 1211.2,908.7 1211.2,910.8 1210.7,911.6 1210.3,912.4 1209.4,912.8 1207.2,912.8 1206.3,912.4 1205.9,912M1202.4,922.1 1198,922.1 1197.5,925.7 1198,925.3 1198.9,924.9 1201.1,924.9 1201.9,925.3 1202.4,925.7 1202.8,926.5 1202.8,928.6 1202.4,929.4 1201.9,930.2 1201.1,930.6 1198.9,930.6 1198,930.2 1197.5,929.8M1210.3,922.1 1208.5,922.1 1207.6,922.5 1206.8,923.3 1206.3,924.1 1205.9,925.7 1205.9,928.6 1206.3,929.8 1206.8,930.2 1207.6,930.6 1209.4,930.6 1210.3,930.2 1210.7,929.8 1211.2,928.6 1211.2,927.3 1210.7,926.1 1210.3,925.7 1209.4,925.3 1207.6,925.3 1206.8,925.7 1205.9,926.9M1202.3,939.8 1197.9,939.8 1197.4,943.5 1197.9,943.1 1198.8,942.7 1201,942.7 1201.8,943.1 1202.3,943.5 1202.7,944.3 1202.7,946.4 1202.3,947.2 1201.8,948 1201,948.4 1198.8,948.4 1197.9,948 1197.4,947.6M1205.6,939.8 1211.3,939.8 1207.7,948.4M1202.3,957.6 1197.9,957.6 1197.4,961.3 1197.9,960.9 1198.8,960.5 1201,960.5 1201.8,960.9 1202.3,961.3 1202.7,962.1 1202.7,964.2 1202.3,965 1201.8,965.8 1201,966.2 1198.8,966.2 1197.9,965.8 1197.4,965.4M1207.5,961.3 1206.5,960.9 1206,960.5 1205.8,959.7 1205.8,958.9 1206.3,958 1207.2,957.6 1209.6,957.6 1210.6,958 1211,958.9 1211,959.7 1210.8,960.5 1210.3,960.9 1209.4,961.3 1207.5,961.3 1206.5,961.7 1206,962.1 1205.6,962.9 1205.6,964.6 1206,965.4 1206.5,965.8 1207.5,966.2 1209.4,966.2 1210.3,965.8 1210.8,965.4 1211.3,964.6 1211.3,962.9 1210.8,962.1 1210.3,961.7 1209.4,961.3M1202.4,975.4 1198,975.4 1197.5,979.1 1198,978.7 1198.9,978.3 1201.1,978.3 1201.9,978.7 1202.4,979.1 1202.8,979.9 1202.8,982 1202.4,982.8 1201.9,983.6 1201.1,984 1198.9,984 1198,983.6 1197.5,983.2M1206.8,984 1208.5,984 1209.4,983.6 1210.3,982.8 1210.7,982 1211.2,980.3 1211.2,977.5 1210.7,976.3 1210.3,975.8 1209.4,975.4 1207.6,975.4 1206.8,975.8 1206.3,976.3 1205.9,977.5 1205.9,978.7 1206.3,979.9 1206.8,980.3 1207.6,980.7 1209.4,980.7 1210.3,980.3 1211.2,979.1M1201.9,993.2 1200.2,993.2 1199.3,993.6 1198.4,994.5 1198,995.3 1197.5,996.9 1197.5,999.7 1198,1001 1198.4,1001.4 1199.3,1001.8 1201.1,1001.8 1201.9,1001.4 1202.4,1001 1202.8,999.7 1202.8,998.5 1202.4,997.3 1201.9,996.9 1201.1,996.5 1199.3,996.5 1198.4,996.9 1197.5,998.1M1207.6,993.2 1206.8,993.6 1206.3,994.5 1205.9,996.1 1205.9,998.9 1206.3,1000.6 1206.8,1001.4 1207.6,1001.8 1209.4,1001.8 1210.3,1001.4 1210.7,1000.6 1211.2,998.9 1211.2,996.1 1210.7,994.5 1210.3,993.6 1209.4,993.2 1207.6,993.2M1202.1,1011 1200.3,1011 1199.4,1011.4 1198.6,1012.3 1198.1,1013.1 1197.7,1014.7 1197.7,1017.5 1198.1,1018.8 1198.6,1019.2 1199.4,1019.6 1201.2,1019.6 1202.1,1019.2 1202.5,1018.8 1203,1017.5 1203,1016.3 1202.5,1015.1 1202.1,1014.7 1201.2,1014.3 1199.4,1014.3 1198.6,1014.7 1197.7,1015.9M1206.1,1012.7 1207.4,1012.3 1208.6,1011 1208.6,1019.6M1206.1,1019.6 1211,1019.6M1201.9,1028.8 1200.2,1028.8 1199.3,1029.2 1198.4,1030 1198,1030.9 1197.5,1032.5 1197.5,1035.3 1198,1036.6 1198.4,1037 1199.3,1037.4 1201.1,1037.4 1201.9,1037 1202.4,1036.6 1202.8,1035.3 1202.8,1034.1 1202.4,1032.9 1201.9,1032.5 1201.1,1032.1 1199.3,1032.1 1198.4,1032.5 1197.5,1033.7M1205.9,1030.5 1206.3,1029.6 1206.8,1029.2 1207.6,1028.8 1209.4,1028.8 1210.3,1029.2 1210.7,1029.6 1211.2,1030.5 1211.2,1031.3 1210.7,1032.5 1205.9,1037.4 1211.2,1037.4M1201.6,1067.3 1201.6,1073M1199.7,1064.4 1197.3,1070.1 1203,1070.1M1207.6,1068.1 1206.6,1067.7 1206.1,1067.3 1205.9,1066.5 1205.9,1065.6 1206.4,1064.8 1207.3,1064.4 1209.7,1064.4 1210.7,1064.8 1211.1,1065.6 1211.1,1066.5 1210.9,1067.3 1210.4,1067.7 1209.5,1068.1 1207.6,1068.1 1206.6,1068.5 1206.1,1068.9 1205.7,1069.7 1205.7,1071.3 1206.1,1072.2 1206.6,1072.6 1207.6,1073 1209.5,1073 1210.4,1072.6 1210.9,1072.2 1211.4,1071.3 1211.4,1069.7 1210.9,1068.9 1210.4,1068.5 1209.5,1068.1M1197.4,1082.2 1203.1,1082.2 1199.6,1090.8M1206,1082.2 1211.3,1082.2 1208.2,1085.5 1209.5,1085.5 1210.4,1085.9 1210.8,1086.3 1211.3,1087.1 1211.3,1088.7 1210.8,1089.5 1210.4,1090.4 1209.5,1090.8 1207.3,1090.8 1206.4,1090.4 1206,1089.9M1482.5,300.8 1482.9,300 1483.4,299.6 1484.2,299.2 1486,299.2 1486.9,299.6 1487.3,300 1487.8,300.8 1487.8,301.6 1487.3,302.9 1482.5,307.7 1487.8,307.7M1490.8,300.8 1491.3,300 1491.7,299.6 1492.6,299.2 1494.4,299.2 1495.2,299.6 1495.7,300 1496.1,300.8 1496.1,301.6 1495.7,302.9 1490.8,307.7 1496.1,307.7M1482.5,318.6 1482.9,317.8 1483.4,317.4 1484.2,317 1486,317 1486.9,317.4 1487.3,317.8 1487.8,318.6 1487.8,319.4 1487.3,320.7 1482.5,325.5 1487.8,325.5M1490.8,317 1496.1,317 1493,320.2 1494.4,320.2 1495.2,320.7 1495.7,321.1 1496.1,321.9 1496.1,323.5 1495.7,324.3 1495.2,325.1 1494.4,325.5 1492.2,325.5 1491.3,325.1 1490.8,324.7M1482.4,336.4 1482.8,335.6 1483.3,335.2 1484.1,334.8 1485.9,334.8 1486.8,335.2 1487.2,335.6 1487.7,336.4 1487.7,337.2 1487.2,338.4 1482.4,343.3 1487.7,343.3M1494.8,337.6 1494.8,343.3M1492.9,334.8 1490.5,340.5 1496.2,340.5M1482.5,354.2 1482.9,353.4 1483.4,353 1484.2,352.6 1486,352.6 1486.9,353 1487.3,353.4 1487.8,354.2 1487.8,355 1487.3,356.2 1482.5,361.1 1487.8,361.1M1495.7,352.6 1491.3,352.6 1490.8,356.2 1491.3,355.8 1492.2,355.4 1494.4,355.4 1495.2,355.8 1495.7,356.2 1496.1,357.1 1496.1,359.1 1495.7,359.9 1495.2,360.7 1494.4,361.1 1492.2,361.1 1491.3,360.7 1490.8,360.3M1482.4,372 1482.8,371.2 1483.3,370.8 1484.1,370.4 1485.9,370.4 1486.8,370.8 1487.2,371.2 1487.7,372 1487.7,372.8 1487.2,374 1482.4,378.9 1487.7,378.9M1492.4,374 1491.5,373.6 1491,373.2 1490.8,372.4 1490.8,371.6 1491.2,370.8 1492.2,370.4 1494.6,370.4 1495.5,370.8 1496,371.6 1496,372.4 1495.7,373.2 1495.3,373.6 1494.3,374 1492.4,374 1491.5,374.4 1491,374.9 1490.5,375.7 1490.5,377.3 1491,378.1 1491.5,378.5 1492.4,378.9 1494.3,378.9 1495.3,378.5 1495.7,378.1 1496.2,377.3 1496.2,375.7 1495.7,374.9 1495.3,374.4 1494.3,374M1482.5,389.8 1482.9,389 1483.4,388.6 1484.2,388.2 1486,388.2 1486.9,388.6 1487.3,389 1487.8,389.8 1487.8,390.6 1487.3,391.8 1482.5,396.7 1487.8,396.7M1491.7,396.7 1493.5,396.7 1494.4,396.3 1495.2,395.5 1495.7,394.7 1496.1,393.1 1496.1,390.2 1495.7,389 1495.2,388.6 1494.4,388.2 1492.6,388.2 1491.7,388.6 1491.3,389 1490.8,390.2 1490.8,391.4 1491.3,392.6 1491.7,393.1 1492.6,393.5 1494.4,393.5 1495.2,393.1 1496.1,391.8M1482.5,406 1487.8,406 1484.7,409.2 1486,409.2 1486.9,409.6 1487.3,410 1487.8,410.9 1487.8,412.5 1487.3,413.3 1486.9,414.1 1486,414.5 1483.8,414.5 1482.9,414.1 1482.5,413.7M1492.6,406 1491.7,406.4 1491.3,407.2 1490.8,408.8 1490.8,411.7 1491.3,413.3 1491.7,414.1 1492.6,414.5 1494.4,414.5 1495.2,414.1 1495.7,413.3 1496.1,411.7 1496.1,408.8 1495.7,407.2 1495.2,406.4 1494.4,406 1492.6,406M1482.6,423.8 1487.9,423.8 1484.8,427 1486.2,427 1487,427.4 1487.5,427.8 1487.9,428.6 1487.9,430.3 1487.5,431.1 1487,431.9 1486.2,432.3 1483.9,432.3 1483.1,431.9 1482.6,431.5M1491.1,425.4 1492.3,425 1493.5,423.8 1493.5,432.3M1491.1,432.3 1496,432.3M1486.8,441.6 1485,441.6 1484.1,442 1483.3,442.8 1482.8,443.6 1482.4,445.2 1482.4,448.1 1482.8,449.3 1483.3,449.7 1484.1,450.1 1485.9,450.1 1486.8,449.7 1487.2,449.3 1487.7,448.1 1487.7,446.9 1487.2,445.6 1486.8,445.2 1485.9,444.8 1484.1,444.8 1483.3,445.2 1482.4,446.4M1490.5,441.6 1496.2,441.6 1492.7,450.1M1486.8,459.4 1485,459.4 1484.1,459.8 1483.3,460.6 1482.8,461.4 1482.4,463 1482.4,465.9 1482.8,467.1 1483.3,467.5 1484.1,467.9 1485.9,467.9 1486.8,467.5 1487.2,467.1 1487.7,465.9 1487.7,464.6 1487.2,463.4 1486.8,463 1485.9,462.6 1484.1,462.6 1483.3,463 1482.4,464.2M1492.4,463 1491.5,462.6 1491,462.2 1490.8,461.4 1490.8,460.6 1491.2,459.8 1492.2,459.4 1494.6,459.4 1495.5,459.8 1496,460.6 1496,461.4 1495.7,462.2 1495.3,462.6 1494.3,463 1492.4,463 1491.5,463.4 1491,463.8 1490.5,464.6 1490.5,466.3 1491,467.1 1491.5,467.5 1492.4,467.9 1494.3,467.9 1495.3,467.5 1495.7,467.1 1496.2,466.3 1496.2,464.6 1495.7,463.8 1495.3,463.4 1494.3,463M1486.9,477.1 1485.1,477.1 1484.2,477.6 1483.4,478.4 1482.9,479.2 1482.5,480.8 1482.5,483.7 1482.9,484.9 1483.4,485.3 1484.2,485.7 1486,485.7 1486.9,485.3 1487.3,484.9 1487.8,483.7 1487.8,482.4 1487.3,481.2 1486.9,480.8 1486,480.4 1484.2,480.4 1483.4,480.8 1482.5,482M1491.7,485.7 1493.5,485.7 1494.4,485.3 1495.2,484.5 1495.7,483.7 1496.1,482 1496.1,479.2 1495.7,478 1495.2,477.6 1494.4,477.1 1492.6,477.1 1491.7,477.6 1491.3,478 1490.8,479.2 1490.8,480.4 1491.3,481.6 1491.7,482 1492.6,482.4 1494.4,482.4 1495.2,482 1496.1,480.8M1482.4,494.9 1488.1,494.9 1484.5,503.5M1492.7,494.9 1491.8,495.4 1491.4,496.2 1490.9,497.8 1490.9,500.6 1491.4,502.3 1491.8,503.1 1492.7,503.5 1494.5,503.5 1495.3,503.1 1495.8,502.3 1496.2,500.6 1496.2,497.8 1495.8,496.2 1495.3,495.4 1494.5,494.9 1492.7,494.9M1482.5,512.7 1488.2,512.7 1484.7,521.3M1491.2,514.4 1492.4,514 1493.6,512.7 1493.6,521.3M1491.2,521.3 1496.1,521.3M1482.4,530.5 1488.1,530.5 1484.5,539.1M1490.9,532.2 1491.4,531.4 1491.8,530.9 1492.7,530.5 1494.5,530.5 1495.3,530.9 1495.8,531.4 1496.2,532.2 1496.2,533 1495.8,534.2 1490.9,539.1 1496.2,539.1M1482.4,548.3 1488.1,548.3 1484.5,556.9M1495.3,548.3 1493.6,548.3 1492.7,548.7 1491.8,549.6 1491.4,550.4 1490.9,552 1490.9,554.8 1491.4,556.1 1491.8,556.5 1492.7,556.9 1494.5,556.9 1495.3,556.5 1495.8,556.1 1496.2,554.8 1496.2,553.6 1495.8,552.4 1495.3,552 1494.5,551.6 1492.7,551.6 1491.8,552 1490.9,553.2M1482.3,566.1 1488,566.1 1484.4,574.7M1490.6,566.1 1496.3,566.1 1492.8,574.7M1482.4,601.7 1487.7,601.7 1484.6,605 1485.9,605 1486.8,605.4 1487.2,605.8 1487.7,606.6 1487.7,608.2 1487.2,609.1 1486.8,609.9 1485.9,610.3 1483.7,610.3 1482.8,609.9 1482.4,609.5M1494.8,604.6 1494.8,610.3M1492.9,601.7 1490.5,607.4 1496.2,607.4M1482.5,619.5 1487.8,619.5 1484.7,622.8 1486,622.8 1486.9,623.2 1487.3,623.6 1487.8,624.4 1487.8,626 1487.3,626.8 1486.9,627.7 1486,628.1 1483.8,628.1 1482.9,627.7 1482.5,627.3M1495.7,619.5 1491.3,619.5 1490.8,623.2 1491.3,622.8 1492.2,622.4 1494.4,622.4 1495.2,622.8 1495.7,623.2 1496.1,624 1496.1,626 1495.7,626.8 1495.2,627.7 1494.4,628.1 1492.2,628.1 1491.3,627.7 1490.8,627.3M1482.5,637.3 1487.8,637.3 1484.7,640.6 1486,640.6 1486.9,641 1487.3,641.4 1487.8,642.2 1487.8,643.8 1487.3,644.6 1486.9,645.5 1486,645.9 1483.8,645.9 1482.9,645.5 1482.5,645M1495.2,637.3 1493.5,637.3 1492.6,637.7 1491.7,638.5 1491.3,639.3 1490.8,641 1490.8,643.8 1491.3,645 1491.7,645.5 1492.6,645.9 1494.4,645.9 1495.2,645.5 1495.7,645 1496.1,643.8 1496.1,642.6 1495.7,641.4 1495.2,641 1494.4,640.6 1492.6,640.6 1491.7,641 1490.8,642.2M1484.3,658.8 1483.3,658.4 1482.9,658 1482.6,657.1 1482.6,656.3 1483.1,655.5 1484,655.1 1486.4,655.1 1487.4,655.5 1487.8,656.3 1487.8,657.1 1487.6,658 1487.1,658.4 1486.2,658.8 1484.3,658.8 1483.3,659.2 1482.9,659.6 1482.4,660.4 1482.4,662 1482.9,662.8 1483.3,663.3 1484.3,663.7 1486.2,663.7 1487.1,663.3 1487.6,662.8 1488.1,662 1488.1,660.4 1487.6,659.6 1487.1,659.2 1486.2,658.8M1491.8,663.7 1493.6,663.7 1494.5,663.3 1495.3,662.4 1495.8,661.6 1496.2,660 1496.2,657.1 1495.8,655.9 1495.3,655.5 1494.5,655.1 1492.7,655.1 1491.8,655.5 1491.4,655.9 1490.9,657.1 1490.9,658.4 1491.4,659.6 1491.8,660 1492.7,660.4 1494.5,660.4 1495.3,660 1496.2,658.8M1483.4,681.5 1485.1,681.5 1486,681 1486.9,680.2 1487.3,679.4 1487.8,677.8 1487.8,674.9 1487.3,673.7 1486.9,673.3 1486,672.9 1484.2,672.9 1483.4,673.3 1482.9,673.7 1482.5,674.9 1482.5,676.2 1482.9,677.4 1483.4,677.8 1484.2,678.2 1486,678.2 1486.9,677.8 1487.8,676.6M1492.6,672.9 1491.7,673.3 1491.3,674.1 1490.8,675.8 1490.8,678.6 1491.3,680.2 1491.7,681 1492.6,681.5 1494.4,681.5 1495.2,681 1495.7,680.2 1496.1,678.6 1496.1,675.8 1495.7,674.1 1495.2,673.3 1494.4,672.9 1492.6,672.9M1483.5,699.3 1485.3,699.3 1486.2,698.8 1487,698 1487.5,697.2 1487.9,695.6 1487.9,692.7 1487.5,691.5 1487,691.1 1486.2,690.7 1484.4,690.7 1483.5,691.1 1483.1,691.5 1482.6,692.7 1482.6,694 1483.1,695.2 1483.5,695.6 1484.4,696 1486.2,696 1487,695.6 1487.9,694.4M1491.1,692.3 1492.3,691.9 1493.5,690.7 1493.5,699.3M1491.1,699.3 1496,699.3M1483.4,717 1485.1,717 1486,716.6 1486.9,715.8 1487.3,715 1487.8,713.4 1487.8,710.5 1487.3,709.3 1486.9,708.9 1486,708.5 1484.2,708.5 1483.4,708.9 1482.9,709.3 1482.5,710.5 1482.5,711.8 1482.9,713 1483.4,713.4 1484.2,713.8 1486,713.8 1486.9,713.4 1487.8,712.2M1490.8,710.1 1491.3,709.3 1491.7,708.9 1492.6,708.5 1494.4,708.5 1495.2,708.9 1495.7,709.3 1496.1,710.1 1496.1,710.9 1495.7,712.2 1490.8,717 1496.1,717M1483.4,734.8 1485.1,734.8 1486,734.4 1486.9,733.6 1487.3,732.8 1487.8,731.2 1487.8,728.3 1487.3,727.1 1486.9,726.7 1486,726.3 1484.2,726.3 1483.4,726.7 1482.9,727.1 1482.5,728.3 1482.5,729.6 1482.9,730.8 1483.4,731.2 1484.2,731.6 1486,731.6 1486.9,731.2 1487.8,730M1490.8,726.3 1496.1,726.3 1493,729.6 1494.4,729.6 1495.2,730 1495.7,730.4 1496.1,731.2 1496.1,732.8 1495.7,733.6 1495.2,734.4 1494.4,734.8 1492.2,734.8 1491.3,734.4 1490.8,734M1483.4,752.6 1485.1,752.6 1486,752.2 1486.9,751.4 1487.3,750.6 1487.8,749 1487.8,746.1 1487.3,744.9 1486.9,744.5 1486,744.1 1484.2,744.1 1483.4,744.5 1482.9,744.9 1482.5,746.1 1482.5,747.3 1482.9,748.6 1483.4,749 1484.2,749.4 1486,749.4 1486.9,749 1487.8,747.8M1495.7,744.1 1491.3,744.1 1490.8,747.8 1491.3,747.3 1492.2,746.9 1494.4,746.9 1495.2,747.3 1495.7,747.8 1496.1,748.6 1496.1,750.6 1495.7,751.4 1495.2,752.2 1494.4,752.6 1492.2,752.6 1491.3,752.2 1490.8,751.8M1483.4,770.4 1485.1,770.4 1486,770 1486.9,769.2 1487.3,768.4 1487.8,766.8 1487.8,763.9 1487.3,762.7 1486.9,762.3 1486,761.9 1484.2,761.9 1483.4,762.3 1482.9,762.7 1482.5,763.9 1482.5,765.1 1482.9,766.4 1483.4,766.8 1484.2,767.2 1486,767.2 1486.9,766.8 1487.8,765.6M1495.2,761.9 1493.5,761.9 1492.6,762.3 1491.7,763.1 1491.3,763.9 1490.8,765.6 1490.8,768.4 1491.3,769.6 1491.7,770 1492.6,770.4 1494.4,770.4 1495.2,770 1495.7,769.6 1496.1,768.4 1496.1,767.2 1495.7,766 1495.2,765.6 1494.4,765.1 1492.6,765.1 1491.7,765.6 1490.8,766.8M1486.7,782.5 1486.7,788.2M1484.8,779.7 1482.4,785.4 1488.1,785.4M1495.3,779.7 1493.6,779.7 1492.7,780.1 1491.8,780.9 1491.4,781.7 1490.9,783.3 1490.9,786.2 1491.4,787.4 1491.8,787.8 1492.7,788.2 1494.5,788.2 1495.3,787.8 1495.8,787.4 1496.2,786.2 1496.2,785 1495.8,783.8 1495.3,783.3 1494.5,782.9 1492.7,782.9 1491.8,783.3 1490.9,784.6M1486.6,800.3 1486.6,806M1484.7,797.5 1482.3,803.2 1488,803.2M1490.6,797.5 1496.3,797.5 1492.8,806M1487.5,815.3 1483.1,815.3 1482.6,818.9 1483.1,818.5 1483.9,818.1 1486.2,818.1 1487,818.5 1487.5,818.9 1487.9,819.8 1487.9,821.8 1487.5,822.6 1487,823.4 1486.2,823.8 1483.9,823.8 1483.1,823.4 1482.6,823M1491.1,816.9 1492.3,816.5 1493.5,815.3 1493.5,823.8M1491.1,823.8 1496,823.8M1487.3,833.1 1482.9,833.1 1482.5,836.7 1482.9,836.3 1483.8,835.9 1486,835.9 1486.9,836.3 1487.3,836.7 1487.8,837.5 1487.8,839.6 1487.3,840.4 1486.9,841.2 1486,841.6 1483.8,841.6 1482.9,841.2 1482.5,840.8M1490.8,834.7 1491.3,833.9 1491.7,833.5 1492.6,833.1 1494.4,833.1 1495.2,833.5 1495.7,833.9 1496.1,834.7 1496.1,835.5 1495.7,836.7 1490.8,841.6 1496.1,841.6M1487.3,850.9 1482.9,850.9 1482.5,854.5 1482.9,854.1 1483.8,853.7 1486,853.7 1486.9,854.1 1487.3,854.5 1487.8,855.3 1487.8,857.4 1487.3,858.2 1486.9,859 1486,859.4 1483.8,859.4 1482.9,859 1482.5,858.6M1490.8,850.9 1496.1,850.9 1493,854.1 1494.4,854.1 1495.2,854.5 1495.7,854.9 1496.1,855.8 1496.1,857.4 1495.7,858.2 1495.2,859 1494.4,859.4 1492.2,859.4 1491.3,859 1490.8,858.6M1487.2,868.7 1482.8,868.7 1482.4,872.3 1482.8,871.9 1483.7,871.5 1485.9,871.5 1486.8,871.9 1487.2,872.3 1487.7,873.1 1487.7,875.2 1487.2,876 1486.8,876.8 1485.9,877.2 1483.7,877.2 1482.8,876.8 1482.4,876.4M1494.8,871.5 1494.8,877.2M1492.9,868.7 1490.5,874.4 1496.2,874.4M1482.5,905.9 1483.8,905.5 1485,904.3 1485,912.8M1482.5,912.8 1487.4,912.8M1495.6,904.3 1491.2,904.3 1490.8,907.9 1491.2,907.5 1492.1,907.1 1494.3,907.1 1495.2,907.5 1495.6,907.9 1496.1,908.7 1496.1,910.8 1495.6,911.6 1495.2,912.4 1494.3,912.8 1492.1,912.8 1491.2,912.4 1490.8,912M1482.5,923.7 1483.8,923.3 1485,922.1 1485,930.6M1482.5,930.6 1487.4,930.6M1495.2,922.1 1493.4,922.1 1492.5,922.5 1491.6,923.3 1491.2,924.1 1490.8,925.7 1490.8,928.6 1491.2,929.8 1491.6,930.2 1492.5,930.6 1494.3,930.6 1495.2,930.2 1495.6,929.8 1496.1,928.6 1496.1,927.3 1495.6,926.1 1495.2,925.7 1494.3,925.3 1492.5,925.3 1491.6,925.7 1490.8,926.9M1482.4,941.5 1483.7,941.1 1484.9,939.8 1484.9,948.4M1482.4,948.4 1487.3,948.4M1490.5,939.8 1496.2,939.8 1492.6,948.4M1482.4,959.3 1483.7,958.9 1484.9,957.6 1484.9,966.2M1482.4,966.2 1487.3,966.2M1492.4,961.3 1491.4,960.9 1490.9,960.5 1490.7,959.7 1490.7,958.9 1491.2,958 1492.1,957.6 1494.5,957.6 1495.4,958 1495.9,958.9 1495.9,959.7 1495.7,960.5 1495.2,960.9 1494.3,961.3 1492.4,961.3 1491.4,961.7 1490.9,962.1 1490.5,962.9 1490.5,964.6 1490.9,965.4 1491.4,965.8 1492.4,966.2 1494.3,966.2 1495.2,965.8 1495.7,965.4 1496.2,964.6 1496.2,962.9 1495.7,962.1 1495.2,961.7 1494.3,961.3M1482.5,975.4 1487.8,975.4 1484.7,978.7 1486,978.7 1486.9,979.1 1487.3,979.5 1487.8,980.3 1487.8,982 1487.3,982.8 1486.9,983.6 1486,984 1483.8,984 1482.9,983.6 1482.5,983.2M1490.8,977.1 1491.3,976.3 1491.7,975.8 1492.6,975.4 1494.4,975.4 1495.2,975.8 1495.7,976.3 1496.1,977.1 1496.1,977.9 1495.7,979.1 1490.8,984 1496.1,984M1482.5,993.2 1487.8,993.2 1484.7,996.5 1486,996.5 1486.9,996.9 1487.3,997.3 1487.8,998.1 1487.8,999.7 1487.3,1000.6 1486.9,1001.4 1486,1001.8 1483.8,1001.8 1482.9,1001.4 1482.5,1001M1490.8,993.2 1496.1,993.2 1493,996.5 1494.4,996.5 1495.2,996.9 1495.7,997.3 1496.1,998.1 1496.1,999.7 1495.7,1000.6 1495.2,1001.4 1494.4,1001.8 1492.2,1001.8 1491.3,1001.4 1490.8,1001M1486.9,1011 1485.1,1011 1484.2,1011.4 1483.4,1012.3 1482.9,1013.1 1482.5,1014.7 1482.5,1017.5 1482.9,1018.8 1483.4,1019.2 1484.2,1019.6 1486,1019.6 1486.9,1019.2 1487.3,1018.8 1487.8,1017.5 1487.8,1016.3 1487.3,1015.1 1486.9,1014.7 1486,1014.3 1484.2,1014.3 1483.4,1014.7 1482.5,1015.9M1490.8,1011 1496.1,1011 1493,1014.3 1494.4,1014.3 1495.2,1014.7 1495.7,1015.1 1496.1,1015.9 1496.1,1017.5 1495.7,1018.4 1495.2,1019.2 1494.4,1019.6 1492.2,1019.6 1491.3,1019.2 1490.8,1018.8M1486.8,1028.8 1485,1028.8 1484.1,1029.2 1483.3,1030 1482.8,1030.9 1482.4,1032.5 1482.4,1035.3 1482.8,1036.6 1483.3,1037 1484.1,1037.4 1485.9,1037.4 1486.8,1037 1487.2,1036.6 1487.7,1035.3 1487.7,1034.1 1487.2,1032.9 1486.8,1032.5 1485.9,1032.1 1484.1,1032.1 1483.3,1032.5 1482.4,1033.7M1494.8,1031.7 1494.8,1037.4M1492.9,1028.8 1490.5,1034.5 1496.2,1034.5M1486.9,1046.6 1485.1,1046.6 1484.2,1047 1483.4,1047.8 1482.9,1048.7 1482.5,1050.3 1482.5,1053.1 1482.9,1054.4 1483.4,1054.8 1484.2,1055.2 1486,1055.2 1486.9,1054.8 1487.3,1054.4 1487.8,1053.1 1487.8,1051.9 1487.3,1050.7 1486.9,1050.3 1486,1049.9 1484.2,1049.9 1483.4,1050.3 1482.5,1051.5M1495.7,1046.6 1491.3,1046.6 1490.8,1050.3 1491.3,1049.9 1492.2,1049.5 1494.4,1049.5 1495.2,1049.9 1495.7,1050.3 1496.1,1051.1 1496.1,1053.1 1495.7,1054 1495.2,1054.8 1494.4,1055.2 1492.2,1055.2 1491.3,1054.8 1490.8,1054.4M1486.9,1064.4 1485.1,1064.4 1484.2,1064.8 1483.4,1065.6 1482.9,1066.5 1482.5,1068.1 1482.5,1070.9 1482.9,1072.2 1483.4,1072.6 1484.2,1073 1486,1073 1486.9,1072.6 1487.3,1072.2 1487.8,1070.9 1487.8,1069.7 1487.3,1068.5 1486.9,1068.1 1486,1067.7 1484.2,1067.7 1483.4,1068.1 1482.5,1069.3M1495.2,1064.4 1493.5,1064.4 1492.6,1064.8 1491.7,1065.6 1491.3,1066.5 1490.8,1068.1 1490.8,1070.9 1491.3,1072.2 1491.7,1072.6 1492.6,1073 1494.4,1073 1495.2,1072.6 1495.7,1072.2 1496.1,1070.9 1496.1,1069.7 1495.7,1068.5 1495.2,1068.1 1494.4,1067.7 1492.6,1067.7 1491.7,1068.1 1490.8,1069.3M1482.3,1082.2 1488,1082.2 1484.4,1090.8M1492.5,1085.9 1491.6,1085.5 1491.1,1085.1 1490.9,1084.2 1490.9,1083.4 1491.3,1082.6 1492.3,1082.2 1494.7,1082.2 1495.6,1082.6 1496.1,1083.4 1496.1,1084.2 1495.8,1085.1 1495.4,1085.5 1494.4,1085.9 1492.5,1085.9 1491.6,1086.3 1491.1,1086.7 1490.6,1087.5 1490.6,1089.1 1491.1,1089.9 1491.6,1090.4 1492.5,1090.8 1494.4,1090.8 1495.4,1090.4 1495.8,1089.9 1496.3,1089.1 1496.3,1087.5 1495.8,1086.7 1495.4,1086.3 1494.4,1085.9M1482.4,1100 1488.1,1100 1484.5,1108.6M1491.8,1108.6 1493.6,1108.6 1494.5,1108.2 1495.3,1107.3 1495.8,1106.5 1496.2,1104.9 1496.2,1102 1495.8,1100.8 1495.3,1100.4 1494.5,1100 1492.7,1100 1491.8,1100.4 1491.4,1100.8 1490.9,1102 1490.9,1103.3 1491.4,1104.5 1491.8,1104.9 1492.7,1105.3 1494.5,1105.3 1495.3,1104.9 1496.2,1103.7M1484.3,1121.5 1483.3,1121.1 1482.9,1120.7 1482.6,1119.8 1482.6,1119 1483.1,1118.2 1484,1117.8 1486.4,1117.8 1487.4,1118.2 1487.8,1119 1487.8,1119.8 1487.6,1120.7 1487.1,1121.1 1486.2,1121.5 1484.3,1121.5 1483.3,1121.9 1482.9,1122.3 1482.4,1123.1 1482.4,1124.7 1482.9,1125.5 1483.3,1125.9 1484.3,1126.4 1486.2,1126.4 1487.1,1125.9 1487.6,1125.5 1488.1,1124.7 1488.1,1123.1 1487.6,1122.3 1487.1,1121.9 1486.2,1121.5M1492.7,1117.8 1491.8,1118.2 1491.4,1119 1490.9,1120.7 1490.9,1123.5 1491.4,1125.1 1491.8,1125.9 1492.7,1126.4 1494.5,1126.4 1495.3,1125.9 1495.8,1125.1 1496.2,1123.5 1496.2,1120.7 1495.8,1119 1495.3,1118.2 1494.5,1117.8 1492.7,1117.8M1486.5,1135.6 1492.2,1135.6 1488.6,1144.2M1488.3,1157.1 1487.4,1156.7 1486.9,1156.2 1486.7,1155.4 1486.7,1154.6 1487.2,1153.8 1488.1,1153.4 1490.5,1153.4 1491.4,1153.8 1491.9,1154.6 1491.9,1155.4 1491.7,1156.2 1491.2,1156.7 1490.2,1157.1 1488.3,1157.1 1487.4,1157.5 1486.9,1157.9 1486.5,1158.7 1486.5,1160.3 1486.9,1161.1 1487.4,1161.5 1488.3,1161.9 1490.2,1161.9 1491.2,1161.5 1491.7,1161.1 1492.2,1160.3 1492.2,1158.7 1491.7,1157.9 1491.2,1157.5 1490.2,1157.1M1487.5,1179.7 1489.3,1179.7 1490.2,1179.3 1491.1,1178.5 1491.5,1177.7 1491.9,1176.1 1491.9,1173.2 1491.5,1172 1491.1,1171.6 1490.2,1171.2 1488.4,1171.2 1487.5,1171.6 1487.1,1172 1486.7,1173.2 1486.7,1174.5 1487.1,1175.7 1487.5,1176.1 1488.4,1176.5 1490.2,1176.5 1491.1,1176.1 1491.9,1174.9M1282.1,254.7 1282.1,256.5 1282.5,257.4 1283.3,258.3 1284.2,258.7 1285.8,259.1 1288.6,259.1 1289.9,258.7 1290.3,258.3 1290.7,257.4 1290.7,255.6 1290.3,254.7 1289.9,254.3 1288.6,253.9 1287.4,253.9 1286.2,254.3 1285.8,254.7 1285.4,255.6 1285.4,257.4 1285.8,258.3 1287,259.1M1301.5,263.1 1301.1,261.9 1299.9,260.7 1308.5,260.7M1308.5,263.1 1308.5,258.2M1301.5,254.8 1301.1,253.5 1299.9,252.3 1308.5,252.3M1308.5,254.8 1308.5,249.9M1319.3,263.4 1318.5,263 1318.1,262.5 1317.7,261.7 1317.7,259.9 1318.1,259 1318.5,258.6 1319.3,258.1 1320.1,258.1 1321.4,258.6 1326.2,263.4 1326.2,258.1M1317.7,255.3 1317.7,249.6 1326.2,253.1M1335.5,258.5 1335.5,262.9 1339.1,263.3 1338.7,262.9 1338.3,262 1338.3,259.8 1338.7,258.9 1339.1,258.5 1340,258 1342,258 1342.8,258.5 1343.6,258.9 1344,259.8 1344,262 1343.6,262.9 1343.2,263.3M1335.5,253.2 1335.9,254.1 1336.7,254.5 1338.3,255 1341.2,255 1342.8,254.5 1343.6,254.1 1344,253.2 1344,251.4 1343.6,250.6 1342.8,250.1 1341.2,249.7 1338.3,249.7 1336.7,250.1 1335.9,250.6 1335.5,251.4 1335.5,253.2M1353.3,263.4 1353.3,257.7 1361.8,261.3M1353.3,250 1353.3,254.4 1356.9,254.9 1356.5,254.4 1356.1,253.5 1356.1,251.3 1356.5,250.5 1356.9,250 1357.7,249.6 1359.8,249.6 1360.6,250 1361.4,250.5 1361.8,251.3 1361.8,253.5 1361.4,254.4 1361,254.9M1372.7,267.4 1372.3,266.2 1371,265 1379.6,265M1379.6,267.4 1379.6,262.5M1371,257.4 1371.4,258.3 1372.3,258.8 1373.9,259.2 1376.7,259.2 1378.4,258.8 1379.2,258.3 1379.6,257.4 1379.6,255.7 1379.2,254.8 1378.4,254.4 1376.7,253.9 1373.9,253.9 1372.3,254.4 1371.4,254.8 1371,255.7 1371,257.4M1371,249.1 1371.4,250 1372.3,250.4 1373.9,250.9 1376.7,250.9 1378.4,250.4 1379.2,250 1379.6,249.1 1379.6,247.3 1379.2,246.5 1378.4,246 1376.7,245.6 1373.9,245.6 1372.3,246 1371.4,246.5 1371,247.3 1371,249.1M1390.5,263.2 1389.6,262.7 1389.2,262.3 1388.8,261.4 1388.8,259.6 1389.2,258.8 1389.6,258.3 1390.5,257.9 1391.3,257.9 1392.5,258.3 1397.4,263.2 1397.4,257.9M1390.5,254.7 1390,253.5 1388.8,252.3 1397.4,252.3M1397.4,254.7 1397.4,249.8M1337.1,1242.1 1336.7,1240.8 1335.5,1239.6 1344,1239.6M1344,1242.1 1344,1237.2M1335.5,1232.1 1335.9,1233 1336.7,1233.4 1338.3,1233.8 1341.2,1233.8 1342.8,1233.4 1343.6,1233 1344,1232.1 1344,1230.3 1343.6,1229.4 1342.8,1229 1341.2,1228.5 1338.3,1228.5 1336.7,1229 1335.9,1229.4 1335.5,1230.3 1335.5,1232.1M1354.9,1242.1 1354.5,1240.8 1353.3,1239.6 1361.8,1239.6M1361.8,1242.1 1361.8,1237.2M1361.8,1233 1361.8,1231.2 1361.4,1230.3 1360.6,1229.4 1359.8,1229 1358.1,1228.5 1355.3,1228.5 1354.1,1229 1353.7,1229.4 1353.3,1230.3 1353.3,1232.1 1353.7,1233 1354.1,1233.4 1355.3,1233.8 1356.5,1233.8 1357.7,1233.4 1358.1,1233 1358.6,1232.1 1358.6,1230.3 1358.1,1229.4 1356.9,1228.5" fill="none" stroke="#a90000" stroke-width="1.15" stroke-linecap="round" stroke-linejoin="round"/>
<path d="M1272,379.3H1280.5M1275,379.3V382.4L1276.5,384.1H1280.5M1255.2,414.9H1263.7M1258.2,414.9V418L1259.7,419.7H1263.7M1254.9,432.7H1263.4M1257.9,432.7V435.8L1259.4,437.5H1263.4M1254.4,468.3H1262.9M1257.4,468.3V471.4L1258.9,473.1H1262.9M1254.1,486.1H1262.6M1257.1,486.1V489.2L1258.6,490.9H1262.6M1254.4,503.9H1262.9M1257.4,503.9V507L1258.9,508.7H1262.9M1254.4,521.7H1262.9M1257.4,521.7V524.8L1258.9,526.5H1262.9M1254.6,539.5H1263.1M1257.6,539.5V542.6L1259.1,544.3H1263.1M1254.4,557.3H1262.9M1257.4,557.3V560.4L1258.9,562.1H1262.9M1254.4,575.1H1262.9M1257.4,575.1V578.2L1258.9,579.9H1262.9M1254.6,592.9H1263.1M1257.6,592.9V596L1259.1,597.7H1263.1M1254.6,610.7H1263.1M1257.6,610.7V613.8L1259.1,615.5H1263.1M1254.4,628.5H1262.9M1257.4,628.5V631.6L1258.9,633.3H1262.9M1262.7,646.3H1271.2M1265.7,646.3V649.4L1267.2,651.1H1271.2M1262.4,664.1H1270.9M1265.4,664.1V667.2L1266.9,668.9H1270.9M1262.7,681.9H1271.2M1265.7,681.9V685L1267.2,686.7H1271.2M1262.7,699.7H1271.2M1265.7,699.7V702.8L1267.2,704.5H1271.2M1262.9,717.4H1271.4M1265.9,717.4V720.5L1267.4,722.2H1271.4M1262.7,735.2H1271.2M1265.7,735.2V738.3L1267.2,740H1271.2M1255.4,770.8H1263.9M1258.4,770.8V773.9L1259.9,775.6H1263.9M1255.1,788.6H1263.6M1258.1,788.6V791.7L1259.6,793.4H1263.6M1255.4,806.4H1263.9M1258.4,806.4V809.5L1259.9,811.2H1263.9M1255.4,824.2H1263.9M1258.4,824.2V827.3L1259.9,829H1263.9M1255.6,842H1264.1M1258.6,842V845.1L1260.1,846.8H1264.1M1255.4,859.8H1263.9M1258.4,859.8V862.9L1259.9,864.6H1263.9M1255.4,877.6H1263.9M1258.4,877.6V880.7L1259.9,882.4H1263.9M1255.6,895.4H1264.1M1258.6,895.4V898.5L1260.1,900.2H1264.1M1255.6,913.2H1264.1M1258.6,913.2V916.3L1260.1,918H1264.1M1255.4,931H1263.9M1258.4,931V934.1L1259.9,935.8H1263.9M1263.7,948.8H1272.2M1266.7,948.8V951.9L1268.2,953.6H1272.2M1263.4,966.6H1271.9M1266.4,966.6V969.7L1267.9,971.4H1271.9M1263.7,984.4H1272.2M1266.7,984.4V987.5L1268.2,989.2H1272.2M1263.7,1002.2H1272.2M1266.7,1002.2V1005.3L1268.2,1007H1272.2M1263.9,1020H1272.4M1266.9,1020V1023.1L1268.4,1024.8H1272.4M1263.7,1037.8H1272.2M1266.7,1037.8V1040.9L1268.2,1042.6H1272.2M1429.3,308.1H1437.8M1432.3,308.1V311.2L1433.8,312.9H1437.8M1429.6,325.9H1438.1M1432.6,325.9V329L1434.1,330.7H1438.1M1429.3,343.7H1437.8M1432.3,343.7V346.8L1433.8,348.5H1437.8M1429.3,361.5H1437.8M1432.3,361.5V364.6L1433.8,366.3H1437.8M1429.1,379.3H1437.6M1432.1,379.3V382.4L1433.6,384.1H1437.6M1429.3,397.1H1437.8M1432.3,397.1V400.2L1433.8,401.9H1437.8M1429.3,414.9H1437.8M1432.3,414.9V418L1433.8,419.7H1437.8M1429.1,432.7H1437.6M1432.1,432.7V435.8L1433.6,437.5H1437.6M1429.1,450.5H1437.6M1432.1,450.5V453.6L1433.6,455.3H1437.6M1429.3,468.3H1437.8M1432.3,468.3V471.4L1433.8,473.1H1437.8M1421,486.1H1429.5M1424,486.1V489.2L1425.5,490.9H1429.5M1421.3,503.9H1429.8M1424.3,503.9V507L1425.8,508.7H1429.8M1421,521.7H1429.5M1424,521.7V524.8L1425.5,526.5H1429.5M1421,539.5H1429.5M1424,539.5V542.6L1425.5,544.3H1429.5M1420.8,557.3H1429.3M1423.8,557.3V560.4L1425.3,562.1H1429.3M1421,575.1H1429.5M1424,575.1V578.2L1425.5,579.9H1429.5M1428.3,610.7H1436.8M1431.3,610.7V613.8L1432.8,615.5H1436.8M1428.6,628.5H1437.1M1431.6,628.5V631.6L1433.1,633.3H1437.1M1428.3,646.3H1436.8M1431.3,646.3V649.4L1432.8,651.1H1436.8M1428.3,664.1H1436.8M1431.3,664.1V667.2L1432.8,668.9H1436.8M1428.1,681.9H1436.6M1431.1,681.9V685L1432.6,686.7H1436.6M1428.3,699.7H1436.8M1431.3,699.7V702.8L1432.8,704.5H1436.8M1428.3,717.4H1436.8M1431.3,717.4V720.5L1432.8,722.2H1436.8M1428.1,735.2H1436.6M1431.1,735.2V738.3L1432.6,740H1436.6M1428.1,753H1436.6M1431.1,753V756.1L1432.6,757.8H1436.6M1428.3,770.8H1436.8M1431.3,770.8V773.9L1432.8,775.6H1436.8M1420,788.6H1428.5M1423,788.6V791.7L1424.5,793.4H1428.5M1420.3,806.4H1428.8M1423.3,806.4V809.5L1424.8,811.2H1428.8M1420,824.2H1428.5M1423,824.2V827.3L1424.5,829H1428.5M1420,842H1428.5M1423,842V845.1L1424.5,846.8H1428.5M1419.8,859.8H1428.3M1422.8,859.8V862.9L1424.3,864.6H1428.3M1420,877.6H1428.5M1423,877.6V880.7L1424.5,882.4H1428.5M1427.9,913.2H1436.4M1430.9,913.2V916.3L1432.4,918H1436.4M1428.2,931H1436.7M1431.2,931V934.1L1432.7,935.8H1436.7M1412.5,948.8H1421M1415.5,948.8V951.9L1417,953.6H1421M1412.5,966.6H1421M1415.5,966.6V969.7L1417,971.4H1421M1427.7,984.4H1436.2M1430.7,984.4V987.5L1432.2,989.2H1436.2M1427.9,1002.2H1436.4M1430.9,1002.2V1005.3L1432.4,1007H1436.4M1427.9,1020H1436.4M1430.9,1020V1023.1L1432.4,1024.8H1436.4M1427.7,1037.8H1436.2M1430.7,1037.8V1040.9L1432.2,1042.6H1436.2M1427.7,1055.6H1436.2M1430.7,1055.6V1058.7L1432.2,1060.4H1436.2M1427.9,1073.4H1436.4M1430.9,1073.4V1076.5L1432.4,1078.2H1436.4M1419.6,1091.2H1428.1M1422.6,1091.2V1094.3L1424.1,1096H1428.1M1419.9,1109H1428.4M1422.9,1109V1112.1L1424.4,1113.8H1428.4M1419.6,1126.8H1428.1M1422.6,1126.8V1129.9L1424.1,1131.6H1428.1M1419.6,1144.6H1428.1M1422.6,1144.6V1147.7L1424.1,1149.4H1428.1M1419.4,1162.3H1427.9M1422.4,1162.3V1165.4L1423.9,1167.1H1427.9M1419.6,1180.1H1428.1M1422.6,1180.1V1183.2L1424.1,1184.9H1428.1" fill="none" stroke="#006464" stroke-width="0.95" stroke-linejoin="round"/>
<path d="M1282.2,379.3L1279.6,377.7L1279.6,380.9ZM1282.2,384.1L1279.6,382.5L1279.6,385.7ZM1265.4,414.9L1262.8,413.3L1262.8,416.5ZM1265.4,419.7L1262.8,418.1L1262.8,421.3ZM1265.1,432.7L1262.5,431.1L1262.5,434.3ZM1265.1,437.5L1262.5,435.9L1262.5,439.1ZM1264.6,468.3L1262,466.7L1262,469.9ZM1264.6,473.1L1262,471.5L1262,474.7ZM1264.3,486.1L1261.7,484.5L1261.7,487.7ZM1264.3,490.9L1261.7,489.3L1261.7,492.5ZM1264.6,503.9L1262,502.3L1262,505.5ZM1264.6,508.7L1262,507.1L1262,510.3ZM1264.6,521.7L1262,520.1L1262,523.3ZM1264.6,526.5L1262,524.9L1262,528.1ZM1264.8,539.5L1262.2,537.9L1262.2,541.1ZM1264.8,544.3L1262.2,542.7L1262.2,545.9ZM1264.6,557.3L1262,555.7L1262,558.9ZM1264.6,562.1L1262,560.5L1262,563.7ZM1264.6,575.1L1262,573.5L1262,576.7ZM1264.6,579.9L1262,578.3L1262,581.5ZM1264.8,592.9L1262.2,591.3L1262.2,594.5ZM1264.8,597.7L1262.2,596.1L1262.2,599.3ZM1264.8,610.7L1262.2,609.1L1262.2,612.3ZM1264.8,615.5L1262.2,613.9L1262.2,617.1ZM1264.6,628.5L1262,626.9L1262,630.1ZM1264.6,633.3L1262,631.7L1262,634.9ZM1272.9,646.3L1270.3,644.7L1270.3,647.9ZM1272.9,651.1L1270.3,649.5L1270.3,652.7ZM1272.6,664.1L1270,662.5L1270,665.7ZM1272.6,668.9L1270,667.3L1270,670.5ZM1272.9,681.9L1270.3,680.3L1270.3,683.5ZM1272.9,686.7L1270.3,685.1L1270.3,688.3ZM1272.9,699.7L1270.3,698.1L1270.3,701.3ZM1272.9,704.5L1270.3,702.9L1270.3,706.1ZM1273.1,717.4L1270.5,715.8L1270.5,719ZM1273.1,722.2L1270.5,720.6L1270.5,723.8ZM1272.9,735.2L1270.3,733.6L1270.3,736.8ZM1272.9,740L1270.3,738.4L1270.3,741.6ZM1265.6,770.8L1263,769.2L1263,772.4ZM1265.6,775.6L1263,774L1263,777.2ZM1265.3,788.6L1262.7,787L1262.7,790.2ZM1265.3,793.4L1262.7,791.8L1262.7,795ZM1265.6,806.4L1263,804.8L1263,808ZM1265.6,811.2L1263,809.6L1263,812.8ZM1265.6,824.2L1263,822.6L1263,825.8ZM1265.6,829L1263,827.4L1263,830.6ZM1265.8,842L1263.2,840.4L1263.2,843.6ZM1265.8,846.8L1263.2,845.2L1263.2,848.4ZM1265.6,859.8L1263,858.2L1263,861.4ZM1265.6,864.6L1263,863L1263,866.2ZM1265.6,877.6L1263,876L1263,879.2ZM1265.6,882.4L1263,880.8L1263,884ZM1265.8,895.4L1263.2,893.8L1263.2,897ZM1265.8,900.2L1263.2,898.6L1263.2,901.8ZM1265.8,913.2L1263.2,911.6L1263.2,914.8ZM1265.8,918L1263.2,916.4L1263.2,919.6ZM1265.6,931L1263,929.4L1263,932.6ZM1265.6,935.8L1263,934.2L1263,937.4ZM1273.9,948.8L1271.3,947.2L1271.3,950.4ZM1273.9,953.6L1271.3,952L1271.3,955.2ZM1273.6,966.6L1271,965L1271,968.2ZM1273.6,971.4L1271,969.8L1271,973ZM1273.9,984.4L1271.3,982.8L1271.3,986ZM1273.9,989.2L1271.3,987.6L1271.3,990.8ZM1273.9,1002.2L1271.3,1000.6L1271.3,1003.8ZM1273.9,1007L1271.3,1005.4L1271.3,1008.6ZM1274.1,1020L1271.5,1018.4L1271.5,1021.6ZM1274.1,1024.8L1271.5,1023.2L1271.5,1026.4ZM1273.9,1037.8L1271.3,1036.2L1271.3,1039.4ZM1273.9,1042.6L1271.3,1041L1271.3,1044.2ZM1439.5,308.1L1436.9,306.5L1436.9,309.7ZM1439.5,312.9L1436.9,311.3L1436.9,314.5ZM1439.8,325.9L1437.2,324.3L1437.2,327.5ZM1439.8,330.7L1437.2,329.1L1437.2,332.3ZM1439.5,343.7L1436.9,342.1L1436.9,345.3ZM1439.5,348.5L1436.9,346.9L1436.9,350.1ZM1439.5,361.5L1436.9,359.9L1436.9,363.1ZM1439.5,366.3L1436.9,364.7L1436.9,367.9ZM1439.3,379.3L1436.7,377.7L1436.7,380.9ZM1439.3,384.1L1436.7,382.5L1436.7,385.7ZM1439.5,397.1L1436.9,395.5L1436.9,398.7ZM1439.5,401.9L1436.9,400.3L1436.9,403.5ZM1439.5,414.9L1436.9,413.3L1436.9,416.5ZM1439.5,419.7L1436.9,418.1L1436.9,421.3ZM1439.3,432.7L1436.7,431.1L1436.7,434.3ZM1439.3,437.5L1436.7,435.9L1436.7,439.1ZM1439.3,450.5L1436.7,448.9L1436.7,452.1ZM1439.3,455.3L1436.7,453.7L1436.7,456.9ZM1439.5,468.3L1436.9,466.7L1436.9,469.9ZM1439.5,473.1L1436.9,471.5L1436.9,474.7ZM1431.2,486.1L1428.6,484.5L1428.6,487.7ZM1431.2,490.9L1428.6,489.3L1428.6,492.5ZM1431.5,503.9L1428.9,502.3L1428.9,505.5ZM1431.5,508.7L1428.9,507.1L1428.9,510.3ZM1431.2,521.7L1428.6,520.1L1428.6,523.3ZM1431.2,526.5L1428.6,524.9L1428.6,528.1ZM1431.2,539.5L1428.6,537.9L1428.6,541.1ZM1431.2,544.3L1428.6,542.7L1428.6,545.9ZM1431,557.3L1428.4,555.7L1428.4,558.9ZM1431,562.1L1428.4,560.5L1428.4,563.7ZM1431.2,575.1L1428.6,573.5L1428.6,576.7ZM1431.2,579.9L1428.6,578.3L1428.6,581.5ZM1438.5,610.7L1435.9,609.1L1435.9,612.3ZM1438.5,615.5L1435.9,613.9L1435.9,617.1ZM1438.8,628.5L1436.2,626.9L1436.2,630.1ZM1438.8,633.3L1436.2,631.7L1436.2,634.9ZM1438.5,646.3L1435.9,644.7L1435.9,647.9ZM1438.5,651.1L1435.9,649.5L1435.9,652.7ZM1438.5,664.1L1435.9,662.5L1435.9,665.7ZM1438.5,668.9L1435.9,667.3L1435.9,670.5ZM1438.3,681.9L1435.7,680.3L1435.7,683.5ZM1438.3,686.7L1435.7,685.1L1435.7,688.3ZM1438.5,699.7L1435.9,698.1L1435.9,701.3ZM1438.5,704.5L1435.9,702.9L1435.9,706.1ZM1438.5,717.4L1435.9,715.8L1435.9,719ZM1438.5,722.2L1435.9,720.6L1435.9,723.8ZM1438.3,735.2L1435.7,733.6L1435.7,736.8ZM1438.3,740L1435.7,738.4L1435.7,741.6ZM1438.3,753L1435.7,751.4L1435.7,754.6ZM1438.3,757.8L1435.7,756.2L1435.7,759.4ZM1438.5,770.8L1435.9,769.2L1435.9,772.4ZM1438.5,775.6L1435.9,774L1435.9,777.2ZM1430.2,788.6L1427.6,787L1427.6,790.2ZM1430.2,793.4L1427.6,791.8L1427.6,795ZM1430.5,806.4L1427.9,804.8L1427.9,808ZM1430.5,811.2L1427.9,809.6L1427.9,812.8ZM1430.2,824.2L1427.6,822.6L1427.6,825.8ZM1430.2,829L1427.6,827.4L1427.6,830.6ZM1430.2,842L1427.6,840.4L1427.6,843.6ZM1430.2,846.8L1427.6,845.2L1427.6,848.4ZM1430,859.8L1427.4,858.2L1427.4,861.4ZM1430,864.6L1427.4,863L1427.4,866.2ZM1430.2,877.6L1427.6,876L1427.6,879.2ZM1430.2,882.4L1427.6,880.8L1427.6,884ZM1438.1,913.2L1435.5,911.6L1435.5,914.8ZM1438.1,918L1435.5,916.4L1435.5,919.6ZM1438.4,931L1435.8,929.4L1435.8,932.6ZM1438.4,935.8L1435.8,934.2L1435.8,937.4ZM1422.7,948.8L1420.1,947.2L1420.1,950.4ZM1422.7,953.6L1420.1,952L1420.1,955.2ZM1422.7,966.6L1420.1,965L1420.1,968.2ZM1422.7,971.4L1420.1,969.8L1420.1,973ZM1437.9,984.4L1435.3,982.8L1435.3,986ZM1437.9,989.2L1435.3,987.6L1435.3,990.8ZM1438.1,1002.2L1435.5,1000.6L1435.5,1003.8ZM1438.1,1007L1435.5,1005.4L1435.5,1008.6ZM1438.1,1020L1435.5,1018.4L1435.5,1021.6ZM1438.1,1024.8L1435.5,1023.2L1435.5,1026.4ZM1437.9,1037.8L1435.3,1036.2L1435.3,1039.4ZM1437.9,1042.6L1435.3,1041L1435.3,1044.2ZM1437.9,1055.6L1435.3,1054L1435.3,1057.2ZM1437.9,1060.4L1435.3,1058.8L1435.3,1062ZM1438.1,1073.4L1435.5,1071.8L1435.5,1075ZM1438.1,1078.2L1435.5,1076.6L1435.5,1079.8ZM1429.8,1091.2L1427.2,1089.6L1427.2,1092.8ZM1429.8,1096L1427.2,1094.4L1427.2,1097.6ZM1430.1,1109L1427.5,1107.4L1427.5,1110.6ZM1430.1,1113.8L1427.5,1112.2L1427.5,1115.4ZM1429.8,1126.8L1427.2,1125.2L1427.2,1128.4ZM1429.8,1131.6L1427.2,1130L1427.2,1133.2ZM1429.8,1144.6L1427.2,1143L1427.2,1146.2ZM1429.8,1149.4L1427.2,1147.8L1427.2,1151ZM1429.6,1162.3L1427,1160.7L1427,1163.9ZM1429.6,1167.1L1427,1165.5L1427,1168.7ZM1429.8,1180.1L1427.2,1178.5L1427.2,1181.7ZM1429.8,1184.9L1427.2,1183.3L1427.2,1186.5Z" fill="#006464"/>
<path d="M2383,1315.5H2456M2423.5,1275V1345" stroke="#444" stroke-width="1" fill="none"/>
</svg></div>
<div style="left:2457px;top:93px;width:34px;height:1252px;background:#fff"></div>
<div class="hl" style="left:2459px;top:98px"></div>
<svg class="ic" style="left:2462.0px;top:101.0px" width="24" height="24" viewBox="0 0 24 24"><path d="M7.3,4L16.6,12.6L12.9,13.5L14.7,17.6A1.35,1.35 0 0 1 12.2,18.8L10.3,14.8L7.3,17.3Z" fill="#545454"/></svg>
<svg class="ic" style="left:2462.0px;top:133.0px" width="24" height="24" viewBox="0 0 24 24"><path d="M0.1,4H6.2V15.9H9.8" fill="none" stroke="#545454" stroke-width="1.8"/><path d="M17.8,0.2V5.6M17.8,10.2V23.7M14.2,15.9H23.7" fill="none" stroke="#545454" stroke-width="1.8"/><path d="M0.1,20.9H11.9V8H23.7" fill="none" stroke="#c4203c" stroke-width="1.9"/></svg>
<svg class="ic" style="left:2462.0px;top:174.0px" width="24" height="24" viewBox="0 0 24 24"><path d="M3.7,0.9V23.1L20.4,12Z" fill="none" stroke="#545454" stroke-width="1.7"/><path d="M0,6H3.7M0,18.3H3.7M20.2,12H23.7" stroke="#545454" stroke-width="1.7"/><path d="M6.3,8.5H10.5M6.2,14.6H10.6M8.4,12.4V16.8" stroke="#545454" stroke-width="1.2"/></svg>
<svg class="ic" style="left:2462.0px;top:206.0px" width="24" height="24" viewBox="0 0 24 24"><path d="M11.9,1.1V13.9" stroke="#545454" stroke-width="1.9"/><path d="M2.1,13.9H21.9M5.1,18.1H18.8M9,22H15" stroke="#545454" stroke-width="1.9"/></svg>
<svg class="ic" style="left:2462.0px;top:238.0px" width="24" height="24" viewBox="0 0 24 24"><path d="M2.9,20.8L21,3.3" stroke="#1a81c4" stroke-width="1.9" stroke-linecap="round"/></svg>
<svg class="ic" style="left:2462.0px;top:270.0px" width="24" height="24" viewBox="0 0 24 24"><path d="M3.9,19.6L20.2,3.6" stroke="#1a81c4" stroke-width="3.6" stroke-linecap="round"/></svg>
<svg class="ic" style="left:2462.0px;top:302.0px" width="24" height="24" viewBox="0 0 24 24"><path d="M1.2,3H11.4M1.2,10.9H11.4" stroke="#545454" stroke-width="1.7"/><path d="M20.4,0.3V23.8" stroke="#545454" stroke-width="2.8"/><path d="M11.2,2.8L21.2,12.2M11.2,10.7L21.2,20" stroke="#1a81c4" stroke-width="1.8"/></svg>
<svg class="ic" style="left:2462.0px;top:334.0px" width="24" height="24" viewBox="0 0 24 24"><path d="M0.1,12H12" stroke="#545454" stroke-width="1.8"/><path d="M6.5,6.9L17.6,17.2M17.6,6.9L6.5,17.2" stroke="#1a81c4" stroke-width="1.9"/></svg>
<svg class="ic" style="left:2462.0px;top:366.0px" width="24" height="24" viewBox="0 0 24 24"><path d="M11.9,0.5V23.5M0.1,11.9H11.9" stroke="#545454" stroke-width="1.8"/><circle cx="11.9" cy="11.9" r="3.9" fill="#1a81c4"/></svg>
<svg class="ic" style="left:2462.0px;top:398.0px" width="24" height="24" viewBox="0 0 24 24"><path d="M7.9,15.4L12.1,4.6L16.3,15.4M9.3,11.8H14.9" fill="none" stroke="#545454" stroke-width="1.5" stroke-linejoin="bevel"/><path d="M1.2,18H22.9" stroke="#545454" stroke-width="2"/></svg>
<svg class="ic" style="left:2462.0px;top:430.0px" width="24" height="24" viewBox="0 0 24 24"><circle cx="6.9" cy="9" r="4" fill="none" stroke="#545454" stroke-width="1.8"/><path d="M6.9,13V18.3" stroke="#545454" stroke-width="1.9"/><path d="M12.2,15.4L18.2,4.6L19.6,15.4M14.1,11.9H19.2" fill="none" stroke="#545454" stroke-width="1.3" stroke-linejoin="bevel"/></svg>
<svg class="ic" style="left:2462.0px;top:462.0px" width="24" height="24" viewBox="0 0 24 24"><defs><pattern id="hz" width="4.2" height="4.2" patternUnits="userSpaceOnUse" patternTransform="rotate(45)"><rect x="0" y="0" width="4.2" height="1.9" fill="#545454"/></pattern></defs><path d="M8.3,2.3H21.9V21.6H2.3V12.3H8.3Z" fill="#fff"/><path d="M8.3,2.3H21.9V21.6H2.3V12.3H8.3Z" fill="url(#hz)" stroke="#545454" stroke-width="1"/></svg>
<svg class="ic" style="left:2462.0px;top:494.0px" width="24" height="24" viewBox="0 0 24 24"><path d="M1.4,4.5H14L20.2,11.9L14,19.4H1.4Z" fill="#fff" stroke="#545454" stroke-width="1.9"/><path d="M20.6,11.9H23.8" stroke="#1a81c4" stroke-width="1.9"/><path d="M4.4,17.1L8.3,6.9L12.2,17.1M5.7,13.7H10.9" fill="none" stroke="#545454" stroke-width="1.3" stroke-linejoin="bevel"/></svg>
<svg class="ic" style="left:2462.0px;top:526.0px" width="24" height="24" viewBox="0 0 24 24"><path d="M1.9,17.6L6.1,6.7L10.3,17.6M3.3,14H8.9" fill="none" stroke="#545454" stroke-width="1.5" stroke-linejoin="bevel"/><path d="M12.2,12L16.6,7.4L21,12L16.6,16.7Z" fill="none" stroke="#545454" stroke-width="1.8"/><path d="M21,12H23.8" stroke="#545454" stroke-width="1.8"/></svg>
<svg class="ic" style="left:2462.0px;top:558.0px" width="24" height="24" viewBox="0 0 24 24"><rect x="1" y="0.9" width="20.4" height="20.2" rx="3.2" fill="#d8c9ae" stroke="#545454" stroke-width="1"/><path d="M3.8,5.3V14.5M0.5,9.9H3.8M3.8,7.4L10.1,3.1V0.6M10.1,3.1H21.4M3.8,12L8.3,14.9" fill="none" stroke="#545454" stroke-width="1.5"/><path d="M8.8,15.2L5.6,14.8L7.2,12.5Z" fill="#545454"/><circle cx="17.1" cy="16.8" r="7.9" fill="#fff"/><circle cx="17.1" cy="16.8" r="7" fill="#c4203c"/><path d="M13.3,16.8H20.9M17.1,13V20.6" stroke="#fff" stroke-width="2.2"/></svg>
<svg class="ic" style="left:2462.0px;top:590.0px" width="24" height="24" viewBox="0 0 24 24"><path d="M1.4,4.5H14L20,11.9L14,19.4H1.4Z" fill="#fff" stroke="#1a81c4" stroke-width="1.9"/><path d="M20.3,11.9H23.8" stroke="#1a81c4" stroke-width="1.9"/><path d="M4.4,17.1L8.3,6.9L12.2,17.1M5.7,13.7H10.9" fill="none" stroke="#545454" stroke-width="1.3" stroke-linejoin="bevel"/></svg>
<svg class="ic" style="left:2462.0px;top:622.0px" width="24" height="24" viewBox="0 0 24 24"><rect x="0.6" y="0.9" width="18.6" height="17.4" fill="#d8c9ae" stroke="#545454" stroke-width="1"/><path d="M2.9,9.6L5.8,2.4L8.7,9.6M3.9,7.2H7.7" fill="none" stroke="#545454" stroke-width="1.2" stroke-linejoin="bevel"/><path d="M11.9,5.8L15.7,2.5L19.5,5.8L15.7,9.1Z" fill="none" stroke="#545454" stroke-width="1.2"/><circle cx="17.1" cy="16.8" r="7.9" fill="#fff"/><circle cx="17.1" cy="16.8" r="7" fill="#c4203c"/><path d="M17.1,12.6V20.6M13.7,17.7L17.1,21L20.5,17.7" fill="none" stroke="#fff" stroke-width="2"/></svg>
<svg class="ic" style="left:2462.0px;top:663.0px" width="24" height="24" viewBox="0 0 24 24"><path d="M4,2H19.9V4.8H13.9V21.9H10.1V4.8H4Z" fill="#545454"/></svg>
<svg class="ic" style="left:2462.0px;top:695.0px" width="24" height="24" viewBox="0 0 24 24"><rect x="3.2" y="4.2" width="17.6" height="15.6" fill="#b9b9b9" stroke="#545454" stroke-width="1.9"/><path d="M6.2,8.3H17.2M6.2,11.6H15.1M6.2,14.5H17" stroke="#545454" stroke-width="0.9"/></svg>
<svg class="ic" style="left:2462.0px;top:727.0px" width="24" height="24" viewBox="0 0 24 24"><rect x="0.7" y="0.8" width="22.5" height="22.4" fill="#f2f2f2"/><rect x="0.7" y="0.8" width="22.5" height="5.6" fill="#b9b9b9"/><path d="M0.7,0.8H23.2V23.1H0.7ZM8.3,0.8V23.1M16.4,0.8V23.1M0.7,6.4H23.2M0.7,12.5H23.2M0.7,18.5H23.2" fill="none" stroke="#545454" stroke-width="1.2"/></svg>
<svg class="ic" style="left:2462.0px;top:759.0px" width="24" height="24" viewBox="0 0 24 24"><rect x="3.2" y="4.3" width="17.6" height="15.4" fill="#bdbdbd" stroke="#545454" stroke-width="1.9"/></svg>
<svg class="ic" style="left:2462.0px;top:791.0px" width="24" height="24" viewBox="0 0 24 24"><circle cx="12.1" cy="12" r="9" fill="#bdbdbd" stroke="#545454" stroke-width="1.8"/></svg>
<svg class="ic" style="left:2462.0px;top:823.0px" width="24" height="24" viewBox="0 0 24 24"><path d="M3,21.8A18.7,18.7 0 0 1 21.7,3" fill="none" stroke="#545454" stroke-width="1.8"/></svg>
<svg class="ic" style="left:2462.0px;top:855.0px" width="24" height="24" viewBox="0 0 24 24"><path d="M17.9,2.3C19,9 16,11.6 11.5,11.6C7,11.6 4.6,15 5.9,21.6" fill="none" stroke="#545454" stroke-width="1.8"/><path d="M1.2,11.6H21.9" stroke="#1a81c4" stroke-width="1.1"/><rect x="1.2" y="10.2" width="2.8" height="2.8" fill="#1a81c4"/><rect x="19" y="10.2" width="2.8" height="2.8" fill="#1a81c4"/><path d="M9.5,11.6L11.5,9.6L13.5,11.6L11.5,13.6Z" fill="#fff" stroke="#1a81c4" stroke-width="0.9"/></svg>
<svg class="ic" style="left:2462.0px;top:887.0px" width="24" height="24" viewBox="0 0 24 24"><path d="M2.6,21.4L21.4,2.6" stroke="#545454" stroke-width="1.8"/></svg>
<svg class="ic" style="left:2462.0px;top:919.0px" width="24" height="24" viewBox="0 0 24 24"><rect x="1.2" y="1.2" width="21.7" height="21.7" rx="3.6" fill="#545454"/><circle cx="15.5" cy="6.4" r="2.6" fill="#fff"/><path d="M2.6,19.9L8.3,10L14.4,16.1L17.2,13.9L21.2,19.9Z" fill="#fff"/></svg>
<svg class="ic" style="left:2462.0px;top:951.0px" width="24" height="24" viewBox="0 0 24 24"><path d="M4,1.1L14.6,11L9.6,12L12,17L9.5,18.2L7.2,13.4L4,16.2Z" fill="#545454"/><circle cx="17.1" cy="17.1" r="7.9" fill="#fff"/><circle cx="17.1" cy="17.1" r="7" fill="#c4203c"/><path d="M14.4,14.4L19.8,19.8M19.8,14.4L14.4,19.8" stroke="#fff" stroke-width="2.2"/></svg>
<div class="sh" style="left:2463px;top:165px;width:22px"></div>
<div class="sh" style="left:2463px;top:654px;width:22px"></div>
<div style="left:0;top:1345px;width:2491px;height:36px;background:#fff"></div>
<div style="left:0;top:1381px;width:2491px;height:23px;background:linear-gradient(#f6f6f6,#fafafa)"></div>
<div class="t" style="left:1260.30px;top:1387px;font-size:13.9px;letter-spacing:-0.115px;">Z 1.96</div>
<div class="t" style="left:1345.00px;top:1387px;font-size:13.9px;letter-spacing:-0.136px;">X 12000  Y 7050</div>
<div class="t" style="left:1536.50px;top:1386px;font-size:14px;letter-spacing:0.046px;">dx 12000  dy 7050  dist 13918</div>
<div class="t" style="left:1844.20px;top:1385px;font-size:15px;letter-spacing:0.037px;">grid 50</div>
<div class="t" style="left:2064.50px;top:1385px;font-size:15px;letter-spacing:0.458px;">mils</div>
<div class="t" style="left:2131.80px;top:1385px;font-size:15px;letter-spacing:-0.035px;">Select item(s)</div>
</body></html>
